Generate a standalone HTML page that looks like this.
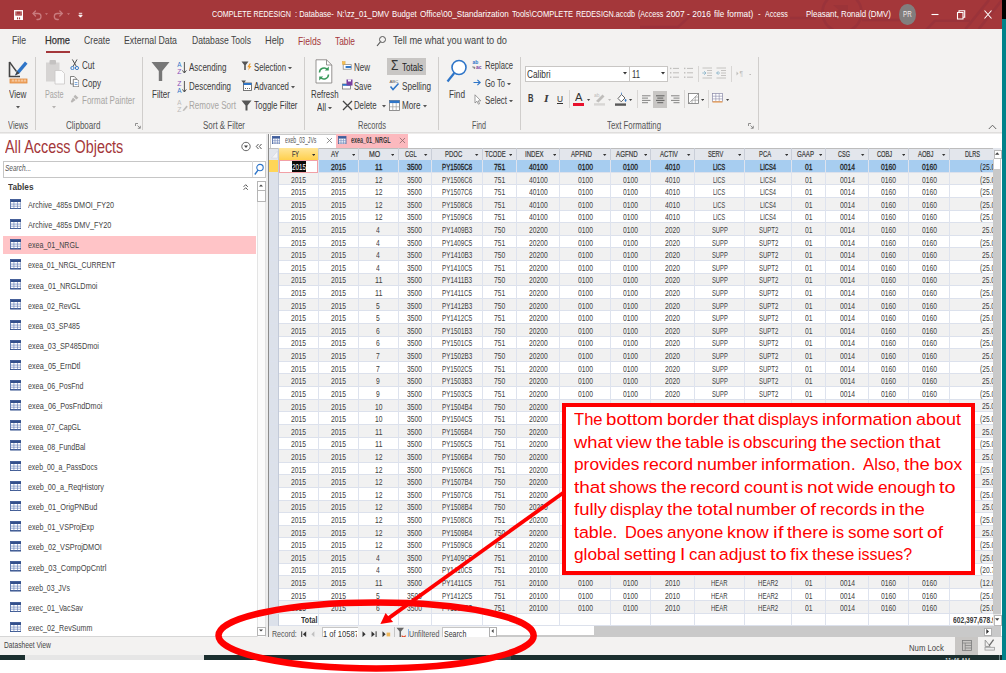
<!DOCTYPE html>
<html><head><meta charset="utf-8"><title>Access</title>
<style>
html,body{margin:0;padding:0;background:#fff;}
body{width:1006px;height:673px;position:relative;overflow:hidden;font-family:"Liberation Sans",sans-serif;}
.t{position:absolute;white-space:pre;line-height:1;}
.r{position:absolute;}
</style></head><body>
<div class="r" style="left:1001.50px;top:0.00px;width:4.50px;height:19.00px;background:#000;"></div>
<div class="r" style="left:1001.50px;top:19.00px;width:4.50px;height:641.00px;background:#00828A;"></div>
<div class="r" style="left:0.00px;top:0.00px;width:1001.50px;height:28.80px;background:#A4373A;"></div>
<svg class="r" style="left:640.00px;top:0.00px" width="361.5" height="28.8" viewBox="0 0 361.5 28.8">
<g fill="none" stroke="#93303A" stroke-width="2.6" opacity="0.55">
<circle cx="202" cy="12.5" r="19.5"/>
<path d="M0 27 H38 L50 16 H76"/>
<path d="M150 18 H176"/>
<path d="M222 20 H262"/>
<path d="M286 30 L295 20.7 H330"/>
<path d="M325.5 29 L349 0"/>
<path d="M338.8 29 L362 0"/>
</g>
<path d="M193 5 L208 5 L208 18 L204 14 L196 20 L192 15 L199 10 Z" fill="#93303A" opacity="0.45"/>
</svg>
<div class="r" style="left:0.00px;top:28.80px;width:1001.50px;height:103.30px;background:#F3F2F1;"></div>
<div class="r" style="left:0.00px;top:132.10px;width:1001.50px;height:1.60px;background:linear-gradient(#D9D7D5,#F4F3F2);"></div>
<div class="r" style="left:0.00px;top:133.60px;width:1001.50px;height:503.00px;background:#fff;"></div>
<div class="r" style="left:0.00px;top:636.60px;width:1001.50px;height:18.60px;background:#F3F2F1;"></div>
<div class="r" style="left:0.00px;top:636.30px;width:1001.50px;height:0.80px;background:#D6D6D6;"></div>
<div class="r" style="left:0.00px;top:655.00px;width:1001.80px;height:5.00px;background:#1B2F2F;"></div>
<div class="r" style="left:25.00px;top:655.00px;width:179.00px;height:5.00px;background:#E6E6E6;"></div>
<div class="r" style="left:486.00px;top:655.00px;width:25.00px;height:5.00px;background:#3A4A4A;"></div>
<div class="r" style="left:1001.00px;top:655.00px;width:0.80px;height:5.00px;background:#1B2F2F;"></div>
<div class="r" style="left:999.20px;top:655.00px;width:0.80px;height:5.00px;background:#6f8585;"></div>
<div class="r" style="left:944px;top:658.2px;width:28px;height:1.8px;overflow:hidden;">
<span class="t" style="left:1.00px;top:-1.20px;font-size:7.5px;color:#fff;transform:scaleX(0.8030);transform-origin:left center;">11:46 AM</span>
</div>
<svg class="r" style="left:14.10px;top:9.80px" width="9.2" height="10.6" viewBox="0 0 9.2 10.6"><rect x="0.7" y="0.7" width="7.8" height="9.2" fill="none" stroke="#fff" stroke-width="1.3"/><rect x="0.7" y="5.6" width="7.8" height="4.3" fill="#fff"/><path d="M2.3 1 V4.3 H6.9 V1" fill="none" stroke="#fff" stroke-width="0.5" opacity="0.55"/><rect x="3" y="7.4" width="1.1" height="1.9" fill="#A4373A"/><rect x="5" y="7.4" width="1.1" height="1.9" fill="#A4373A"/></svg>
<svg class="r" style="left:32.00px;top:9.00px" width="54" height="12" viewBox="0 0 54 12"><g fill="none" stroke="#C97B7E" stroke-width="1.3" stroke-linecap="round">
<path d="M1.5 4.5 H6 a3 3 0 0 1 0 6 H5"/><path d="M3.5 2 L1 4.5 L3.5 7"/>
<path d="M29.8 4.5 H25.3 a3 3 0 0 0 0 6 H26.3"/><path d="M27.8 2 L30.3 4.5 L27.8 7"/></g>
<path d="M13 4.2 h3 l-1.5 1.8z M35 4.2 h3 l-1.5 1.8z" fill="#C97B7E"/>
<path d="M46.8 4.3 h3.4 M46.8 6.2 h3.4 l-1.7 2z" stroke="#fff" stroke-width="0.9" fill="#fff"/></svg>
<span class="t" style="left:212.00px;top:8.75px;font-size:9.8px;color:#fff;transform:scaleX(0.7327);transform-origin:left center;">COMPLETE REDESIGN</span>
<span class="t" style="left:294.80px;top:8.75px;font-size:9.8px;color:#fff;transform:scaleX(0.7659);transform-origin:left center;">: Database-</span>
<span class="t" style="left:337.20px;top:8.75px;font-size:9.8px;color:#fff;transform:scaleX(0.7921);transform-origin:left center;">N:\zz_01_DMV</span>
<span class="t" style="left:392.40px;top:8.75px;font-size:9.8px;color:#fff;transform:scaleX(0.7952);transform-origin:left center;">Budget</span>
<span class="t" style="left:419.80px;top:8.75px;font-size:9.8px;color:#fff;transform:scaleX(0.8278);transform-origin:left center;">Office\00_Standarization</span>
<span class="t" style="left:511.60px;top:8.75px;font-size:9.8px;color:#fff;transform:scaleX(0.7672);transform-origin:left center;">Tools\COMPLETE</span>
<span class="t" style="left:575.70px;top:8.75px;font-size:9.8px;color:#fff;transform:scaleX(0.7382);transform-origin:left center;">REDESIGN.accdb</span>
<span class="t" style="left:637.90px;top:8.75px;font-size:9.8px;color:#fff;transform:scaleX(0.7259);transform-origin:left center;">(Access</span>
<span class="t" style="left:666.30px;top:8.75px;font-size:9.8px;color:#fff;transform:scaleX(0.8602);transform-origin:left center;">2007 - 2016</span>
<span class="t" style="left:714.00px;top:8.75px;font-size:9.8px;color:#fff;transform:scaleX(0.8142);transform-origin:left center;">file</span>
<span class="t" style="left:726.70px;top:8.75px;font-size:9.8px;color:#fff;transform:scaleX(0.8441);transform-origin:left center;">format)</span>
<span class="t" style="left:758.00px;top:8.75px;font-size:9.8px;color:#fff;transform:scaleX(0.7966);transform-origin:left center;">-</span>
<span class="t" style="left:765.20px;top:8.75px;font-size:9.8px;color:#fff;transform:scaleX(0.7218);transform-origin:left center;">Access</span>
<span class="t" style="left:806.00px;top:8.75px;font-size:9.8px;color:#fff;transform:scaleX(0.8044);transform-origin:left center;">Pleasant, Ronald (DMV)</span>
<div class="r" style="left:899.2px;top:4.2px;width:16.4px;height:20.4px;border-radius:50%;background:#827E7E;"></div>
<span class="t" style="left:903.40px;top:9.47px;font-size:9.6px;color:#f4ecec;transform:scaleX(0.6448);transform-origin:left center;">PR</span>
<svg class="r" style="left:928.00px;top:6.00px" width="70" height="16" viewBox="0 0 70 16"><g stroke="#fff" stroke-width="1.1" fill="none">
<path d="M3.5 8.5 H10.5"/>
<path d="M29.5 6.5 h5.5 v6.5 h-5.5z"/><path d="M31 6.5 v-1.8 h5.7 v6.6 h-1.7"/>
<path d="M56.5 4.5 l7 8 M63.5 4.5 l-7 8"/></g></svg>
<span class="t" style="left:12.00px;top:36.46px;font-size:10.3px;color:#444;transform:scaleX(0.8435);transform-origin:left center;">File</span>
<span class="t" style="left:45.00px;top:36.46px;font-size:10.3px;color:#333;transform:scaleX(0.9099);transform-origin:left center;-webkit-text-stroke:0.25px #333;">Home</span>
<div class="r" style="left:45.50px;top:50.80px;width:24.50px;height:1.80px;background:#A4373A;"></div>
<span class="t" style="left:84.00px;top:36.46px;font-size:10.3px;color:#444;transform:scaleX(0.8410);transform-origin:left center;">Create</span>
<span class="t" style="left:124.00px;top:36.46px;font-size:10.3px;color:#444;transform:scaleX(0.8493);transform-origin:left center;">External Data</span>
<span class="t" style="left:192.00px;top:36.46px;font-size:10.3px;color:#444;transform:scaleX(0.8332);transform-origin:left center;">Database Tools</span>
<span class="t" style="left:265.00px;top:36.46px;font-size:10.3px;color:#444;transform:scaleX(0.8969);transform-origin:left center;">Help</span>
<span class="t" style="left:298.00px;top:37.36px;font-size:10.3px;color:#A4373A;transform:scaleX(0.8371);transform-origin:left center;">Fields</span>
<span class="t" style="left:335.00px;top:37.36px;font-size:10.3px;color:#A4373A;transform:scaleX(0.8122);transform-origin:left center;">Table</span>
<svg class="r" style="left:376.00px;top:35.00px" width="11" height="12" viewBox="0 0 11 12"><circle cx="6.5" cy="4.5" r="3" fill="none" stroke="#555" stroke-width="1"/><path d="M4.4 6.8 L1 11" stroke="#555" stroke-width="1.1"/></svg>
<span class="t" style="left:393.00px;top:36.46px;font-size:10.3px;color:#444;transform:scaleX(0.8969);transform-origin:left center;">Tell me what you want to do</span>
<div class="r" style="left:35.10px;top:56.50px;width:0.90px;height:73.00px;background:#D0CECC;"></div>
<div class="r" style="left:142.30px;top:56.50px;width:0.90px;height:73.00px;background:#D0CECC;"></div>
<div class="r" style="left:304.30px;top:56.50px;width:0.90px;height:73.00px;background:#D0CECC;"></div>
<div class="r" style="left:437.80px;top:56.50px;width:0.90px;height:73.00px;background:#D0CECC;"></div>
<div class="r" style="left:520.30px;top:56.50px;width:0.90px;height:73.00px;background:#D0CECC;"></div>
<div class="r" style="left:758.30px;top:56.50px;width:0.90px;height:73.00px;background:#D0CECC;"></div>
<span class="t" style="left:8.00px;top:121.34px;font-size:10px;color:#555;transform:scaleX(0.7549);transform-origin:left center;">Views</span>
<span class="t" style="left:66.00px;top:121.34px;font-size:10px;color:#555;transform:scaleX(0.8060);transform-origin:left center;">Clipboard</span>
<span class="t" style="left:203.00px;top:121.34px;font-size:10px;color:#555;transform:scaleX(0.7956);transform-origin:left center;">Sort &amp; Filter</span>
<span class="t" style="left:358.00px;top:121.34px;font-size:10px;color:#555;transform:scaleX(0.7519);transform-origin:left center;">Records</span>
<span class="t" style="left:472.00px;top:121.34px;font-size:10px;color:#555;transform:scaleX(0.7196);transform-origin:left center;">Find</span>
<span class="t" style="left:607.00px;top:121.34px;font-size:10px;color:#555;transform:scaleX(0.7836);transform-origin:left center;">Text Formatting</span>
<svg class="r" style="left:134.50px;top:123.00px" width="6" height="6" viewBox="0 0 6 6"><path d="M0.5 3 V0.5 H3 M2.5 2.5 L5 5 M5.3 2.8 V5.3 H2.8" fill="none" stroke="#777" stroke-width="0.8"/></svg>
<svg class="r" style="left:747.50px;top:123.00px" width="6" height="6" viewBox="0 0 6 6"><path d="M0.5 3 V0.5 H3 M2.5 2.5 L5 5 M5.3 2.8 V5.3 H2.8" fill="none" stroke="#777" stroke-width="0.8"/></svg>
<svg class="r" style="left:988.00px;top:124.00px" width="9" height="6" viewBox="0 0 9 6"><path d="M0.8 5 L4.5 1.2 L8.2 5" fill="none" stroke="#555" stroke-width="0.9"/></svg>
<svg class="r" style="left:7.00px;top:59.00px" width="22" height="25" viewBox="0 0 22 25"><path d="M2.5 3 V17.5 H13" fill="none" stroke="#444" stroke-width="1.6"/>
<path d="M2.5 3 L9.5 12.5" stroke="#444" stroke-width="1.3"/>
<path d="M8 16.5 L10 12 L18 2.5 L20.5 4.8 L12.5 14.2 Z" fill="#2E75C8"/>
<path d="M8 16.5 L10 12 L12.5 14.2Z" fill="#444"/>
<rect x="3" y="20" width="17" height="4" fill="#F0A868" stroke="#E08A3C" stroke-width="0.8"/>
<path d="M6 20.5v2M9 20.5v2M12 20.5v2M15 20.5v2M18 20.5v2" stroke="#fff" stroke-width="0.7"/></svg>
<span class="t" style="left:9.00px;top:89.63px;font-size:10px;color:#3b3b3b;transform:scaleX(0.8141);transform-origin:left center;">View</span>
<svg class="r" style="left:15.50px;top:106.30px" width="4.0" height="2.4" viewBox="0 0 4 2.4"><path d="M0 0 H4 L2 2.4Z" fill="#555"/></svg>
<svg class="r" style="left:45.00px;top:59.00px" width="21" height="26" viewBox="0 0 21 26"><rect x="1" y="3.5" width="13.5" height="19" fill="#D6D4D3" />
<rect x="4.5" y="1" width="6.5" height="4.5" rx="1" fill="#C4C2C1"/>
<path d="M10 11.5 H16.5 L19.5 14.5 V25 H10Z" fill="#FBFBFB" stroke="#C9C7C6" stroke-width="0.8"/></svg>
<span class="t" style="left:44.50px;top:89.63px;font-size:10px;color:#A8A6A4;transform:scaleX(0.7235);transform-origin:left center;">Paste</span>
<svg class="r" style="left:52.00px;top:106.30px" width="4.0" height="2.4" viewBox="0 0 4 2.4"><path d="M0 0 H4 L2 2.4Z" fill="#B5B3B1"/></svg>
<svg class="r" style="left:69.80px;top:58.80px" width="9.4" height="11.3" viewBox="0 0 10 12"><path d="M2.5 0.5 L6.8 8 M7.5 0.5 L3.2 8" stroke="#444" stroke-width="1" fill="none"/>
<circle cx="2.6" cy="9.6" r="1.7" fill="none" stroke="#2E75C8" stroke-width="1"/><circle cx="7.4" cy="9.6" r="1.7" fill="none" stroke="#2E75C8" stroke-width="1"/></svg>
<span class="t" style="left:82.00px;top:60.93px;font-size:10px;color:#3b3b3b;transform:scaleX(0.8033);transform-origin:left center;">Cut</span>
<svg class="r" style="left:69.80px;top:75.60px" width="9.4" height="11.3" viewBox="0 0 10 12"><path d="M0.5 0.5 H4.5 L6.5 2.5 V8.5 H0.5Z" fill="#fff" stroke="#555" stroke-width="0.8"/>
<path d="M3.5 3.5 H7.5 L9.5 5.5 V11.5 H3.5Z" fill="#fff" stroke="#555" stroke-width="0.8"/><path d="M5 7h3M5 9h3" stroke="#2E75C8" stroke-width="0.7"/></svg>
<span class="t" style="left:82.00px;top:78.63px;font-size:10px;color:#3b3b3b;transform:scaleX(0.8139);transform-origin:left center;">Copy</span>
<svg class="r" style="left:70.30px;top:94.00px" width="9.4" height="9.4" viewBox="0 0 10 10"><path d="M5.5 0.8 L9 4 L6.8 5.8 L3.8 2.8Z M3.2 3.6 L6 6.4 L2 9.2 L0.8 8Z" fill="#B9B7B5"/></svg>
<span class="t" style="left:82.00px;top:96.23px;font-size:10px;color:#A8A6A4;transform:scaleX(0.8014);transform-origin:left center;">Format Painter</span>
<svg class="r" style="left:151.00px;top:61.00px" width="19" height="21" viewBox="0 0 19 21"><path d="M0.5 1 H18.5 L11.2 10 V20 H7.8 V10Z" fill="#777"/></svg>
<span class="t" style="left:151.50px;top:89.63px;font-size:10px;color:#3b3b3b;transform:scaleX(0.8100);transform-origin:left center;">Filter</span>
<svg class="r" style="left:176.50px;top:60.50px" width="11" height="13" viewBox="0 0 11 13"><text x="0.2" y="5.8" font-size="7" fill="#2E75C8" font-family="Liberation Sans,sans-serif" textLength="4.2" lengthAdjust="spacingAndGlyphs">A</text>
<text x="0.2" y="12.6" font-size="7" fill="#8C4FB8" font-family="Liberation Sans,sans-serif" textLength="4.2" lengthAdjust="spacingAndGlyphs">Z</text>
<path d="M7.4 1 V11.8 M5.4 9.4 L7.4 12 L9.4 9.4" fill="none" stroke="#444" stroke-width="0.9"/></svg>
<span class="t" style="left:189.00px;top:62.93px;font-size:10px;color:#3b3b3b;transform:scaleX(0.8030);transform-origin:left center;">Ascending</span>
<svg class="r" style="left:176.50px;top:80.00px" width="11" height="13" viewBox="0 0 11 13"><text x="0.2" y="5.8" font-size="7" fill="#8C4FB8" font-family="Liberation Sans,sans-serif" textLength="4.2" lengthAdjust="spacingAndGlyphs">Z</text>
<text x="0.2" y="12.6" font-size="7" fill="#2E75C8" font-family="Liberation Sans,sans-serif" textLength="4.2" lengthAdjust="spacingAndGlyphs">A</text>
<path d="M7.4 1 V11.8 M5.4 9.4 L7.4 12 L9.4 9.4" fill="none" stroke="#444" stroke-width="0.9"/></svg>
<span class="t" style="left:189.00px;top:82.43px;font-size:10px;color:#3b3b3b;transform:scaleX(0.7952);transform-origin:left center;">Descending</span>
<svg class="r" style="left:176.50px;top:99.00px" width="11" height="13" viewBox="0 0 11 13"><text x="0.2" y="5.8" font-size="7" fill="#BDBBB9" font-family="Liberation Sans,sans-serif" textLength="4.2" lengthAdjust="spacingAndGlyphs">A</text>
<text x="0.2" y="12.6" font-size="7" fill="#BDBBB9" font-family="Liberation Sans,sans-serif" textLength="4.2" lengthAdjust="spacingAndGlyphs">Z</text>
<path d="M5.5 11.5 L9.5 6.5 L10.8 7.8 L7 12Z" fill="#BDBBB9"/></svg>
<span class="t" style="left:189.00px;top:101.43px;font-size:10px;color:#A8A6A4;transform:scaleX(0.8054);transform-origin:left center;">Remove Sort</span>
<svg class="r" style="left:240.50px;top:61.00px" width="11" height="10" viewBox="0 0 11 10"><path d="M0.5 0.5 H7.5 L4.8 4 V9 H3.2 V4Z" fill="#555"/><path d="M8.5 2.5 L6.3 6.2 H8 L7 9.5 L10.5 5 H8.6 L9.8 2.5Z" fill="#F0A030"/></svg>
<span class="t" style="left:254.00px;top:62.93px;font-size:10px;color:#3b3b3b;transform:scaleX(0.7778);transform-origin:left center;">Selection</span>
<svg class="r" style="left:287.60px;top:66.80px" width="4.0" height="2.4" viewBox="0 0 4 2.4"><path d="M0 0 H4 L2 2.4Z" fill="#555"/></svg>
<svg class="r" style="left:240.50px;top:80.00px" width="11" height="11" viewBox="0 0 11 11"><path d="M0.3 0.5 H5 L3.2 2.8 V5 H2.1 V2.8Z" fill="#555"/><rect x="2.5" y="3" width="8" height="7.5" fill="#fff" stroke="#555" stroke-width="0.8"/><rect x="2.5" y="3" width="8" height="2" fill="#2E75C8"/><path d="M4 8.5h1M6 8.5h1M8 8.5h1" stroke="#555" stroke-width="0.9"/></svg>
<span class="t" style="left:254.00px;top:82.43px;font-size:10px;color:#3b3b3b;transform:scaleX(0.7869);transform-origin:left center;">Advanced</span>
<svg class="r" style="left:290.80px;top:86.30px" width="4.0" height="2.4" viewBox="0 0 4 2.4"><path d="M0 0 H4 L2 2.4Z" fill="#555"/></svg>
<svg class="r" style="left:240.50px;top:100.00px" width="11" height="11" viewBox="0 0 11 11"><path d="M0.5 0.5 H10.5 L6.5 5.5 V10.5 H4.5 V5.5Z" fill="#555"/></svg>
<span class="t" style="left:254.00px;top:101.43px;font-size:10px;color:#3b3b3b;transform:scaleX(0.7986);transform-origin:left center;">Toggle Filter</span>
<svg class="r" style="left:315.00px;top:59.00px" width="18" height="25" viewBox="0 0 18 25"><path d="M1 0.8 H11.5 L16.8 6 V24 H1Z" fill="#fff" stroke="#8A8886" stroke-width="0.9"/><path d="M11.5 0.8 V6 H16.8" fill="none" stroke="#8A8886" stroke-width="0.9"/>
<path d="M4.5 13.5 a4.6 4.6 0 0 1 8 -3 M13.5 15.5 a4.6 4.6 0 0 1 -8 3" fill="none" stroke="#3A9A5C" stroke-width="1.5"/><path d="M13.8 7.5 V11.5 H9.8Z M4.2 21.5 V17.5 H8.2Z" fill="#3A9A5C"/></svg>
<span class="t" style="left:310.50px;top:89.63px;font-size:10px;color:#3b3b3b;transform:scaleX(0.7854);transform-origin:left center;">Refresh</span>
<span class="t" style="left:317.00px;top:102.93px;font-size:10px;color:#3b3b3b;transform:scaleX(0.8098);transform-origin:left center;">All</span>
<svg class="r" style="left:328.00px;top:106.80px" width="4.0" height="2.4" viewBox="0 0 4 2.4"><path d="M0 0 H4 L2 2.4Z" fill="#555"/></svg>
<svg class="r" style="left:341.50px;top:60.50px" width="10" height="9.5" viewBox="0 0 10 9.5"><rect x="1.2" y="3.6" width="8" height="4.6" fill="#fff" stroke="#8a8a8a" stroke-width="0.8"/><rect x="3.6" y="5" width="5.6" height="2" fill="#2E75C8"/><rect x="0.3" y="0.5" width="2.8" height="2.8" fill="#F6C050" stroke="#E0A030" stroke-width="0.4"/></svg>
<span class="t" style="left:354.00px;top:62.93px;font-size:10px;color:#3b3b3b;transform:scaleX(0.7998);transform-origin:left center;">New</span>
<svg class="r" style="left:341.50px;top:78.60px" width="11" height="11" viewBox="0 0 11 11"><rect x="0.5" y="5" width="8" height="5" fill="#fff" stroke="#777" stroke-width="0.8"/><rect x="0.5" y="5" width="8" height="1.8" fill="#2E75C8"/><rect x="4.5" y="0.5" width="6" height="6" fill="#7A3FA0"/><rect x="6" y="0.5" width="3" height="2" fill="#fff"/></svg>
<span class="t" style="left:354.00px;top:82.43px;font-size:10px;color:#3b3b3b;transform:scaleX(0.7678);transform-origin:left center;">Save</span>
<svg class="r" style="left:341.50px;top:100.00px" width="11" height="11" viewBox="0 0 11 11"><path d="M1 1 L10 10 M10 1 L1 10" stroke="#444" stroke-width="1.3"/></svg>
<span class="t" style="left:354.00px;top:101.43px;font-size:10px;color:#3b3b3b;transform:scaleX(0.7784);transform-origin:left center;">Delete</span>
<svg class="r" style="left:381.50px;top:105.30px" width="4.0" height="2.4" viewBox="0 0 4 2.4"><path d="M0 0 H4 L2 2.4Z" fill="#555"/></svg>
<div class="r" style="left:387.30px;top:58.30px;width:38.70px;height:16.70px;background:#C8C6C4;"></div>
<span class="t" style="left:390.80px;top:58.49px;font-size:14px;color:#333;transform:scaleX(0.8550);transform-origin:left center;">Σ</span>
<span class="t" style="left:401.50px;top:62.93px;font-size:10px;color:#222;transform:scaleX(0.8039);transform-origin:left center;">Totals</span>
<svg class="r" style="left:389.00px;top:79.00px" width="11" height="12" viewBox="0 0 11 12"><text x="0.5" y="4.2" font-size="4.3" fill="#555" font-family="Liberation Sans,sans-serif">ABC</text><path d="M1.5 7.5 L4 10.5 L9.5 4.5" fill="none" stroke="#2E75C8" stroke-width="1.5"/></svg>
<span class="t" style="left:402.00px;top:82.43px;font-size:10px;color:#3b3b3b;transform:scaleX(0.8150);transform-origin:left center;">Spelling</span>
<svg class="r" style="left:388.50px;top:100.00px" width="11" height="11" viewBox="0 0 11 11"><rect x="0.5" y="0.5" width="10" height="10" fill="#fff" stroke="#777" stroke-width="0.8"/><rect x="0.5" y="0.5" width="10" height="2.6" fill="#2E75C8"/><path d="M0.5 6.8h10M3.8 3v7.5M7.2 3v7.5" stroke="#999" stroke-width="0.7"/></svg>
<span class="t" style="left:402.00px;top:101.43px;font-size:10px;color:#3b3b3b;transform:scaleX(0.8120);transform-origin:left center;">More</span>
<svg class="r" style="left:423.00px;top:105.30px" width="4.0" height="2.4" viewBox="0 0 4 2.4"><path d="M0 0 H4 L2 2.4Z" fill="#555"/></svg>
<svg class="r" style="left:446.00px;top:59.00px" width="22" height="24" viewBox="0 0 22 24"><circle cx="13" cy="8.5" r="7" fill="#fff" stroke="#2E75C8" stroke-width="1.6"/><path d="M8.3 14 L1.5 22.5" stroke="#2E75C8" stroke-width="2.2"/></svg>
<span class="t" style="left:448.50px;top:89.63px;font-size:10px;color:#3b3b3b;transform:scaleX(0.8225);transform-origin:left center;">Find</span>
<svg class="r" style="left:471.50px;top:59.00px" width="11" height="11" viewBox="0 0 11 11"><text x="0.5" y="4.5" font-size="5" fill="#2E75C8" font-weight="bold" font-family="Liberation Sans,sans-serif">ab</text><text x="4" y="10.3" font-size="5" fill="#7A3FA0" font-weight="bold" font-family="Liberation Sans,sans-serif">ac</text><path d="M1 7 v1.8 h2 M2 7.8l1.2 1-1.2 1" fill="none" stroke="#555" stroke-width="0.6"/></svg>
<span class="t" style="left:485.00px;top:60.93px;font-size:10px;color:#3b3b3b;transform:scaleX(0.7631);transform-origin:left center;">Replace</span>
<svg class="r" style="left:473.00px;top:78.80px" width="8.4" height="7" viewBox="0 0 8.4 7"><path d="M0.5 3.5 H7 M4.4 0.8 L7.2 3.5 L4.4 6.2" fill="none" stroke="#2E75C8" stroke-width="1.1"/></svg>
<span class="t" style="left:485.00px;top:78.63px;font-size:10px;color:#3b3b3b;transform:scaleX(0.7547);transform-origin:left center;">Go To</span>
<svg class="r" style="left:507.00px;top:82.50px" width="4.0" height="2.4" viewBox="0 0 4 2.4"><path d="M0 0 H4 L2 2.4Z" fill="#555"/></svg>
<svg class="r" style="left:473.50px;top:94.00px" width="8" height="11" viewBox="0 0 8 11"><path d="M1 0.8 V9 L3 7.2 L4.4 10.2 L5.6 9.7 L4.3 6.8 H6.8Z" fill="#fff" stroke="#777" stroke-width="0.7"/></svg>
<span class="t" style="left:485.00px;top:96.23px;font-size:10px;color:#3b3b3b;transform:scaleX(0.7915);transform-origin:left center;">Select</span>
<svg class="r" style="left:509.00px;top:100.00px" width="4.0" height="2.4" viewBox="0 0 4 2.4"><path d="M0 0 H4 L2 2.4Z" fill="#555"/></svg>
<div class="r" style="left:525px;top:65.5px;width:141px;height:14.2px;background:#fff;border:0.8px solid #C8C6C4;"></div>
<div class="r" style="left:629.00px;top:66.00px;width:0.80px;height:15.00px;background:#C8C6C4;"></div>
<span class="t" style="left:527.00px;top:69.83px;font-size:10px;color:#333;transform:scaleX(0.8292);transform-origin:left center;">Calibri</span>
<svg class="r" style="left:622.90px;top:72.40px" width="4.0" height="2.4" viewBox="0 0 4 2.4"><path d="M0 0 H4 L2 2.4Z" fill="#333"/></svg>
<span class="t" style="left:631.50px;top:69.83px;font-size:10px;color:#333;transform:scaleX(0.7706);transform-origin:left center;">11</span>
<svg class="r" style="left:661.30px;top:72.40px" width="4.0" height="2.4" viewBox="0 0 4 2.4"><path d="M0 0 H4 L2 2.4Z" fill="#333"/></svg>
<svg class="r" style="left:670.00px;top:67.00px" width="9.4" height="12" viewBox="0 0 9.4 12"><rect x="0" y="0.7" width="1.4" height="1.4" fill="#BFBDBB"/><path d="M3 1.4 H9.4" stroke="#BFBDBB" stroke-width="1"/><rect x="0" y="5.1000000000000005" width="1.4" height="1.4" fill="#BFBDBB"/><path d="M3 5.800000000000001 H9.4" stroke="#BFBDBB" stroke-width="1"/><rect x="0" y="9.500000000000002" width="1.4" height="1.4" fill="#BFBDBB"/><path d="M3 10.200000000000001 H9.4" stroke="#BFBDBB" stroke-width="1"/></svg>
<svg class="r" style="left:684.00px;top:67.00px" width="9.4" height="12" viewBox="0 0 9.4 12"><rect x="0" y="0.7" width="1.4" height="1.4" fill="#BFBDBB"/><path d="M3 1.4 H9.4" stroke="#BFBDBB" stroke-width="1"/><rect x="0" y="5.1000000000000005" width="1.4" height="1.4" fill="#BFBDBB"/><path d="M3 5.800000000000001 H9.4" stroke="#BFBDBB" stroke-width="1"/><rect x="0" y="9.500000000000002" width="1.4" height="1.4" fill="#BFBDBB"/><path d="M3 10.200000000000001 H9.4" stroke="#BFBDBB" stroke-width="1"/></svg>
<div class="r" style="left:698.00px;top:66.00px;width:0.90px;height:16.00px;background:#D8D6D4;"></div>
<svg class="r" style="left:702.00px;top:67.00px" width="10.5" height="12" viewBox="0 0 10.5 12"><path d="M0.5 1h9.5M0.5 11h9.5M5 3.5h5M5 6h5M5 8.5h5" stroke="#BFBDBB" stroke-width="0.9"/><path d="M0.3 6h3.4 M2.2 4.2 L4 6 L2.2 7.8" stroke="#8FB7CC" stroke-width="0.9" fill="none"/></svg>
<svg class="r" style="left:716.00px;top:67.00px" width="10.5" height="12" viewBox="0 0 10.5 12"><path d="M0.5 1h9.5M0.5 11h9.5M5 3.5h5M5 6h5M5 8.5h5" stroke="#BFBDBB" stroke-width="0.9"/><path d="M0.6 6h3.4 M2.4 4.2 L0.6 6 L2.4 7.8" stroke="#8FB7CC" stroke-width="0.9" fill="none"/></svg>
<div class="r" style="left:731.00px;top:66.00px;width:0.90px;height:16.00px;background:#D8D6D4;"></div>
<svg class="r" style="left:735.50px;top:70.00px" width="10" height="7" viewBox="0 0 10 7"><path d="M0.5 1.5 L2.5 3.5 L0.5 5.5Z" fill="#BFBDBB"/><text x="3.6" y="6" font-size="6.5" fill="#BFBDBB" font-family="Liberation Sans,sans-serif">¶</text></svg>
<svg class="r" style="left:748.60px;top:73.60px" width="2.8" height="1.68" viewBox="0 0 4 2.4"><path d="M0 0 H4 L2 2.4Z" fill="#BFBDBB"/></svg>
<span class="t" style="left:528.30px;top:93.86px;font-size:10.3px;color:#3b3b3b;transform:scaleX(0.7394);transform-origin:left center;font-weight:bold;">B</span>
<span class="t" style="left:544.30px;top:94.46px;font-size:10.3px;color:#3b3b3b;transform:scaleX(1.1533);transform-origin:left center;font-style:italic;font-family:'Liberation Serif',serif;font-weight:bold;">I</span>
<span class="t" style="left:556.50px;top:94.13px;font-size:9.5px;color:#333;transform:scaleX(0.8745);transform-origin:left center;text-decoration:underline;">U</span>
<div class="r" style="left:569.00px;top:90.00px;width:0.90px;height:18.00px;background:#D8D6D4;"></div>
<span class="t" style="left:574.50px;top:91.54px;font-size:10.5px;color:#333;transform:scaleX(1.0708);transform-origin:left center;">A</span>
<div class="r" style="left:573.00px;top:103.00px;width:11.00px;height:2.60px;background:#E8112D;"></div>
<svg class="r" style="left:587.40px;top:98.70px" width="3.2" height="1.92" viewBox="0 0 4 2.4"><path d="M0 0 H4 L2 2.4Z" fill="#444"/></svg>
<svg class="r" style="left:593.50px;top:92.00px" width="12" height="14" viewBox="0 0 12 14"><text x="0" y="5" font-size="5" fill="#BFBDBB" font-family="Liberation Sans,sans-serif">ab</text><path d="M2 9 L8.5 2.5 L10.5 4.5 L4.5 10.5Z" fill="#BFBDBB"/><rect x="0" y="11.2" width="11" height="2.4" fill="#D8D6D4"/></svg>
<svg class="r" style="left:608.40px;top:98.70px" width="3.2" height="1.92" viewBox="0 0 4 2.4"><path d="M0 0 H4 L2 2.4Z" fill="#BFBDBB"/></svg>
<svg class="r" style="left:615.00px;top:91.50px" width="12" height="14" viewBox="0 0 12 14"><path d="M3 6.5 L6.5 2.5 L10 6 L6.2 9.8Z" fill="#fff" stroke="#555" stroke-width="0.9"/><path d="M6.5 2.5 V0.6 M10.6 7 q1.2 2 0 2.6 q-1.2 -0.6 0 -2.6" stroke="#2E75C8" fill="#2E75C8" stroke-width="0.7"/><rect x="0" y="11.4" width="11" height="2.4" fill="#595959"/></svg>
<svg class="r" style="left:629.40px;top:98.70px" width="3.2" height="1.92" viewBox="0 0 4 2.4"><path d="M0 0 H4 L2 2.4Z" fill="#444"/></svg>
<div class="r" style="left:637.00px;top:90.00px;width:0.90px;height:18.00px;background:#D8D6D4;"></div>
<svg class="r" style="left:642.00px;top:94.50px" width="9" height="9" viewBox="0 0 9 9"><path d="M0 0.8 h8.5" stroke="#777" stroke-width="0.9"/><path d="M0 3.0999999999999996 h6" stroke="#777" stroke-width="0.9"/><path d="M0 5.3999999999999995 h8.5" stroke="#777" stroke-width="0.9"/><path d="M0 7.699999999999999 h6" stroke="#777" stroke-width="0.9"/></svg>
<div class="r" style="left:653.00px;top:90.50px;width:14.00px;height:17.50px;background:#C8C6C4;"></div>
<svg class="r" style="left:655.80px;top:94.50px" width="9" height="9" viewBox="0 0 9 9"><path d="M0.0 0.8 h8.5" stroke="#555" stroke-width="0.9"/><path d="M1.25 3.0999999999999996 h6" stroke="#555" stroke-width="0.9"/><path d="M0.0 5.3999999999999995 h8.5" stroke="#555" stroke-width="0.9"/><path d="M1.25 7.699999999999999 h6" stroke="#555" stroke-width="0.9"/></svg>
<svg class="r" style="left:670.50px;top:94.50px" width="9" height="9" viewBox="0 0 9 9"><path d="M0.0 0.8 h8.5" stroke="#777" stroke-width="0.9"/><path d="M2.5 3.0999999999999996 h6" stroke="#777" stroke-width="0.9"/><path d="M0.0 5.3999999999999995 h8.5" stroke="#777" stroke-width="0.9"/><path d="M2.5 7.699999999999999 h6" stroke="#777" stroke-width="0.9"/></svg>
<div class="r" style="left:684.00px;top:90.00px;width:0.90px;height:18.00px;background:#D8D6D4;"></div>
<svg class="r" style="left:688.00px;top:93.00px" width="11" height="11" viewBox="0 0 11 11"><rect x="0.5" y="0.5" width="10" height="10" fill="#fff" stroke="#777" stroke-width="0.8"/><path d="M0.5 10.5 L10.5 0.5 M4 10.5V7 M7.2 10.5V3.8 M3.8 7.2H10.5 M7 4H10.5" stroke="#888" stroke-width="0.6" fill="none"/></svg>
<svg class="r" style="left:700.90px;top:98.70px" width="3.2" height="1.92" viewBox="0 0 4 2.4"><path d="M0 0 H4 L2 2.4Z" fill="#444"/></svg>
<div class="r" style="left:708.00px;top:90.00px;width:0.90px;height:18.00px;background:#D8D6D4;"></div>
<svg class="r" style="left:712.00px;top:93.00px" width="11" height="10" viewBox="0 0 11 10"><rect x="0.5" y="0.5" width="10" height="8" fill="#fff" stroke="#8a8aa8" stroke-width="0.7"/><path d="M0.5 3.2h10M0.5 5.9h10M3.8 0.5v8M7.2 0.5v8" stroke="#8a8aa8" stroke-width="0.6"/><rect x="0.5" y="8.2" width="10" height="1.4" fill="#E8A05C"/></svg>
<svg class="r" style="left:726.40px;top:98.70px" width="3.2" height="1.92" viewBox="0 0 4 2.4"><path d="M0 0 H4 L2 2.4Z" fill="#444"/></svg>
<span class="t" style="left:5.40px;top:138.24px;font-size:18px;color:#A4373A;transform:scaleX(0.7990);transform-origin:left center;">All Access Objects</span>
<svg class="r" style="left:241.00px;top:141.00px" width="24" height="11" viewBox="0 0 24 11"><circle cx="5" cy="5.5" r="4.2" fill="none" stroke="#444" stroke-width="0.8"/><path d="M3 4.4 h4 l-2 2.6z" fill="#444"/><path d="M17.5 3 L15.3 5.5 L17.5 8 M20.5 3 L18.3 5.5 L20.5 8" fill="none" stroke="#444" stroke-width="0.9"/></svg>
<div class="r" style="left:3px;top:160.8px;width:260.5px;height:15px;background:#fff;border:0.9px solid #C6C6C6;"></div>
<div class="r" style="left:252.40px;top:161.00px;width:0.80px;height:16.00px;background:#D8D8D8;"></div>
<span class="t" style="left:5.00px;top:164.02px;font-size:9px;color:#555;transform:scaleX(0.7219);transform-origin:left center;font-style:italic;">Search...</span>
<svg class="r" style="left:253.50px;top:162.50px" width="10" height="13" viewBox="0 0 10 13"><circle cx="6" cy="4.6" r="3.2" fill="#fff" stroke="#2E75C8" stroke-width="1.1"/><path d="M4 7.2 L0.8 11.5" stroke="#2E75C8" stroke-width="1.4"/></svg>
<span class="t" style="left:7.50px;top:182.43px;font-size:9.5px;color:#3b3b3b;transform:scaleX(0.8676);transform-origin:left center;font-weight:bold;">Tables</span>
<svg class="r" style="left:243.40px;top:183.80px" width="5.4" height="6.6" viewBox="0 0 5.4 6.6"><path d="M0.6 2.8 L2.7 0.7 L4.8 2.8 M0.6 5.8 L2.7 3.7 L4.8 5.8" fill="none" stroke="#444" stroke-width="0.9"/></svg>
<div class="r" style="left:257.00px;top:180.50px;width:8.20px;height:456.00px;background:#FBFBFB;"></div>
<div class="r" style="left:257.00px;top:180.50px;width:0.60px;height:456.00px;background:#E4E4E4;"></div>
<div class="r" style="left:264.80px;top:180.50px;width:0.60px;height:456.00px;background:#E4E4E4;"></div>
<div class="r" style="left:257.2px;top:180.9px;width:6.6px;height:7.8px;background:#fff;border:0.7px solid #B5B5B5;"></div>
<svg class="r" style="left:259.00px;top:183.50px" width="4" height="3" viewBox="0 0 4 3"><path d="M0 2.6 L2 0.4 L4 2.6Z" fill="#444"/></svg>
<div class="r" style="left:257.2px;top:190.2px;width:6.6px;height:9.6px;background:#fff;border:0.7px solid #B5B5B5;"></div>
<div class="r" style="left:257.4px;top:626.6px;width:6.2px;height:7.2px;background:#fff;border:0.7px solid #B5B5B5;"></div>
<svg class="r" style="left:259.00px;top:629.20px" width="4" height="3" viewBox="0 0 4 3"><path d="M0 0.4 L2 2.6 L4 0.4Z" fill="#444"/></svg>
<div class="r" style="left:265.50px;top:133.60px;width:3.00px;height:503.00px;background:#EDEDED;"></div>
<div class="r" style="left:268.30px;top:133.60px;width:1.10px;height:503.00px;background:#8C8C8C;"></div>
<svg class="r" style="left:9.60px;top:198.70px" width="11.4" height="10.6" viewBox="0 0 11.4 10.6"><rect x="0.4" y="0.4" width="10.6" height="9.4" fill="#fff" stroke="#3E5C9A" stroke-width="0.8"/><rect x="0.4" y="0.4" width="10.6" height="2.6" fill="#34508C"/><rect x="0.2" y="9.2" width="11" height="1.2" fill="#34508C"/><path d="M0.4 5.1h10.6M0.4 7.2h10.6M3.9 3v6.4M7.5 3v6.4" stroke="#6F86BC" stroke-width="0.7"/></svg>
<span class="t" style="left:28.10px;top:200.03px;font-size:9.5px;color:#444;transform:scaleX(0.7620);transform-origin:left center;">Archive_485s DMOI_FY20</span>
<svg class="r" style="left:9.60px;top:218.84px" width="11.4" height="10.6" viewBox="0 0 11.4 10.6"><rect x="0.4" y="0.4" width="10.6" height="9.4" fill="#fff" stroke="#3E5C9A" stroke-width="0.8"/><rect x="0.4" y="0.4" width="10.6" height="2.6" fill="#34508C"/><rect x="0.2" y="9.2" width="11" height="1.2" fill="#34508C"/><path d="M0.4 5.1h10.6M0.4 7.2h10.6M3.9 3v6.4M7.5 3v6.4" stroke="#6F86BC" stroke-width="0.7"/></svg>
<span class="t" style="left:28.10px;top:220.17px;font-size:9.5px;color:#444;transform:scaleX(0.7630);transform-origin:left center;">Archive_485s DMV_FY20</span>
<div class="r" style="left:3.00px;top:235.50px;width:253.00px;height:18.00px;background:#FFC4C7;"></div>
<svg class="r" style="left:9.60px;top:238.98px" width="11.4" height="10.6" viewBox="0 0 11.4 10.6"><rect x="0.4" y="0.4" width="10.6" height="9.4" fill="#fff" stroke="#3E5C9A" stroke-width="0.8"/><rect x="0.4" y="0.4" width="10.6" height="2.6" fill="#34508C"/><rect x="0.2" y="9.2" width="11" height="1.2" fill="#34508C"/><path d="M0.4 5.1h10.6M0.4 7.2h10.6M3.9 3v6.4M7.5 3v6.4" stroke="#6F86BC" stroke-width="0.7"/></svg>
<span class="t" style="left:28.10px;top:240.31px;font-size:9.5px;color:#444;transform:scaleX(0.7471);transform-origin:left center;">exea_01_NRGL</span>
<svg class="r" style="left:9.60px;top:259.12px" width="11.4" height="10.6" viewBox="0 0 11.4 10.6"><rect x="0.4" y="0.4" width="10.6" height="9.4" fill="#fff" stroke="#3E5C9A" stroke-width="0.8"/><rect x="0.4" y="0.4" width="10.6" height="2.6" fill="#34508C"/><rect x="0.2" y="9.2" width="11" height="1.2" fill="#34508C"/><path d="M0.4 5.1h10.6M0.4 7.2h10.6M3.9 3v6.4M7.5 3v6.4" stroke="#6F86BC" stroke-width="0.7"/></svg>
<span class="t" style="left:28.10px;top:260.45px;font-size:9.5px;color:#444;transform:scaleX(0.7292);transform-origin:left center;">exea_01_NRGL_CURRENT</span>
<svg class="r" style="left:9.60px;top:279.26px" width="11.4" height="10.6" viewBox="0 0 11.4 10.6"><rect x="0.4" y="0.4" width="10.6" height="9.4" fill="#fff" stroke="#3E5C9A" stroke-width="0.8"/><rect x="0.4" y="0.4" width="10.6" height="2.6" fill="#34508C"/><rect x="0.2" y="9.2" width="11" height="1.2" fill="#34508C"/><path d="M0.4 5.1h10.6M0.4 7.2h10.6M3.9 3v6.4M7.5 3v6.4" stroke="#6F86BC" stroke-width="0.7"/></svg>
<span class="t" style="left:28.10px;top:280.59px;font-size:9.5px;color:#444;transform:scaleX(0.7686);transform-origin:left center;">exea_01_NRGLDmoi</span>
<svg class="r" style="left:9.60px;top:299.40px" width="11.4" height="10.6" viewBox="0 0 11.4 10.6"><rect x="0.4" y="0.4" width="10.6" height="9.4" fill="#fff" stroke="#3E5C9A" stroke-width="0.8"/><rect x="0.4" y="0.4" width="10.6" height="2.6" fill="#34508C"/><rect x="0.2" y="9.2" width="11" height="1.2" fill="#34508C"/><path d="M0.4 5.1h10.6M0.4 7.2h10.6M3.9 3v6.4M7.5 3v6.4" stroke="#6F86BC" stroke-width="0.7"/></svg>
<span class="t" style="left:28.10px;top:300.73px;font-size:9.5px;color:#444;transform:scaleX(0.7349);transform-origin:left center;">exea_02_RevGL</span>
<svg class="r" style="left:9.60px;top:319.54px" width="11.4" height="10.6" viewBox="0 0 11.4 10.6"><rect x="0.4" y="0.4" width="10.6" height="9.4" fill="#fff" stroke="#3E5C9A" stroke-width="0.8"/><rect x="0.4" y="0.4" width="10.6" height="2.6" fill="#34508C"/><rect x="0.2" y="9.2" width="11" height="1.2" fill="#34508C"/><path d="M0.4 5.1h10.6M0.4 7.2h10.6M3.9 3v6.4M7.5 3v6.4" stroke="#6F86BC" stroke-width="0.7"/></svg>
<span class="t" style="left:28.10px;top:320.87px;font-size:9.5px;color:#444;transform:scaleX(0.7387);transform-origin:left center;">exea_03_SP485</span>
<svg class="r" style="left:9.60px;top:339.68px" width="11.4" height="10.6" viewBox="0 0 11.4 10.6"><rect x="0.4" y="0.4" width="10.6" height="9.4" fill="#fff" stroke="#3E5C9A" stroke-width="0.8"/><rect x="0.4" y="0.4" width="10.6" height="2.6" fill="#34508C"/><rect x="0.2" y="9.2" width="11" height="1.2" fill="#34508C"/><path d="M0.4 5.1h10.6M0.4 7.2h10.6M3.9 3v6.4M7.5 3v6.4" stroke="#6F86BC" stroke-width="0.7"/></svg>
<span class="t" style="left:28.10px;top:341.01px;font-size:9.5px;color:#444;transform:scaleX(0.7671);transform-origin:left center;">exea_03_SP485Dmoi</span>
<svg class="r" style="left:9.60px;top:359.82px" width="11.4" height="10.6" viewBox="0 0 11.4 10.6"><rect x="0.4" y="0.4" width="10.6" height="9.4" fill="#fff" stroke="#3E5C9A" stroke-width="0.8"/><rect x="0.4" y="0.4" width="10.6" height="2.6" fill="#34508C"/><rect x="0.2" y="9.2" width="11" height="1.2" fill="#34508C"/><path d="M0.4 5.1h10.6M0.4 7.2h10.6M3.9 3v6.4M7.5 3v6.4" stroke="#6F86BC" stroke-width="0.7"/></svg>
<span class="t" style="left:28.10px;top:361.15px;font-size:9.5px;color:#444;transform:scaleX(0.7691);transform-origin:left center;">exea_05_ErnDtl</span>
<svg class="r" style="left:9.60px;top:379.96px" width="11.4" height="10.6" viewBox="0 0 11.4 10.6"><rect x="0.4" y="0.4" width="10.6" height="9.4" fill="#fff" stroke="#3E5C9A" stroke-width="0.8"/><rect x="0.4" y="0.4" width="10.6" height="2.6" fill="#34508C"/><rect x="0.2" y="9.2" width="11" height="1.2" fill="#34508C"/><path d="M0.4 5.1h10.6M0.4 7.2h10.6M3.9 3v6.4M7.5 3v6.4" stroke="#6F86BC" stroke-width="0.7"/></svg>
<span class="t" style="left:28.10px;top:381.29px;font-size:9.5px;color:#444;transform:scaleX(0.7439);transform-origin:left center;">exea_06_PosFnd</span>
<svg class="r" style="left:9.60px;top:400.10px" width="11.4" height="10.6" viewBox="0 0 11.4 10.6"><rect x="0.4" y="0.4" width="10.6" height="9.4" fill="#fff" stroke="#3E5C9A" stroke-width="0.8"/><rect x="0.4" y="0.4" width="10.6" height="2.6" fill="#34508C"/><rect x="0.2" y="9.2" width="11" height="1.2" fill="#34508C"/><path d="M0.4 5.1h10.6M0.4 7.2h10.6M3.9 3v6.4M7.5 3v6.4" stroke="#6F86BC" stroke-width="0.7"/></svg>
<span class="t" style="left:28.10px;top:401.43px;font-size:9.5px;color:#444;transform:scaleX(0.7698);transform-origin:left center;">exea_06_PosFndDmoi</span>
<svg class="r" style="left:9.60px;top:420.24px" width="11.4" height="10.6" viewBox="0 0 11.4 10.6"><rect x="0.4" y="0.4" width="10.6" height="9.4" fill="#fff" stroke="#3E5C9A" stroke-width="0.8"/><rect x="0.4" y="0.4" width="10.6" height="2.6" fill="#34508C"/><rect x="0.2" y="9.2" width="11" height="1.2" fill="#34508C"/><path d="M0.4 5.1h10.6M0.4 7.2h10.6M3.9 3v6.4M7.5 3v6.4" stroke="#6F86BC" stroke-width="0.7"/></svg>
<span class="t" style="left:28.10px;top:421.57px;font-size:9.5px;color:#444;transform:scaleX(0.7364);transform-origin:left center;">exea_07_CapGL</span>
<svg class="r" style="left:9.60px;top:440.38px" width="11.4" height="10.6" viewBox="0 0 11.4 10.6"><rect x="0.4" y="0.4" width="10.6" height="9.4" fill="#fff" stroke="#3E5C9A" stroke-width="0.8"/><rect x="0.4" y="0.4" width="10.6" height="2.6" fill="#34508C"/><rect x="0.2" y="9.2" width="11" height="1.2" fill="#34508C"/><path d="M0.4 5.1h10.6M0.4 7.2h10.6M3.9 3v6.4M7.5 3v6.4" stroke="#6F86BC" stroke-width="0.7"/></svg>
<span class="t" style="left:28.10px;top:441.71px;font-size:9.5px;color:#444;transform:scaleX(0.7443);transform-origin:left center;">exea_08_FundBal</span>
<svg class="r" style="left:9.60px;top:460.52px" width="11.4" height="10.6" viewBox="0 0 11.4 10.6"><rect x="0.4" y="0.4" width="10.6" height="9.4" fill="#fff" stroke="#3E5C9A" stroke-width="0.8"/><rect x="0.4" y="0.4" width="10.6" height="2.6" fill="#34508C"/><rect x="0.2" y="9.2" width="11" height="1.2" fill="#34508C"/><path d="M0.4 5.1h10.6M0.4 7.2h10.6M3.9 3v6.4M7.5 3v6.4" stroke="#6F86BC" stroke-width="0.7"/></svg>
<span class="t" style="left:28.10px;top:461.85px;font-size:9.5px;color:#444;transform:scaleX(0.7300);transform-origin:left center;">exeb_00_a_PassDocs</span>
<svg class="r" style="left:9.60px;top:480.66px" width="11.4" height="10.6" viewBox="0 0 11.4 10.6"><rect x="0.4" y="0.4" width="10.6" height="9.4" fill="#fff" stroke="#3E5C9A" stroke-width="0.8"/><rect x="0.4" y="0.4" width="10.6" height="2.6" fill="#34508C"/><rect x="0.2" y="9.2" width="11" height="1.2" fill="#34508C"/><path d="M0.4 5.1h10.6M0.4 7.2h10.6M3.9 3v6.4M7.5 3v6.4" stroke="#6F86BC" stroke-width="0.7"/></svg>
<span class="t" style="left:28.10px;top:481.99px;font-size:9.5px;color:#444;transform:scaleX(0.7644);transform-origin:left center;">exeb_00_a_ReqHistory</span>
<svg class="r" style="left:9.60px;top:500.80px" width="11.4" height="10.6" viewBox="0 0 11.4 10.6"><rect x="0.4" y="0.4" width="10.6" height="9.4" fill="#fff" stroke="#3E5C9A" stroke-width="0.8"/><rect x="0.4" y="0.4" width="10.6" height="2.6" fill="#34508C"/><rect x="0.2" y="9.2" width="11" height="1.2" fill="#34508C"/><path d="M0.4 5.1h10.6M0.4 7.2h10.6M3.9 3v6.4M7.5 3v6.4" stroke="#6F86BC" stroke-width="0.7"/></svg>
<span class="t" style="left:28.10px;top:502.13px;font-size:9.5px;color:#444;transform:scaleX(0.7730);transform-origin:left center;">exeb_01_OrigPNBud</span>
<svg class="r" style="left:9.60px;top:520.94px" width="11.4" height="10.6" viewBox="0 0 11.4 10.6"><rect x="0.4" y="0.4" width="10.6" height="9.4" fill="#fff" stroke="#3E5C9A" stroke-width="0.8"/><rect x="0.4" y="0.4" width="10.6" height="2.6" fill="#34508C"/><rect x="0.2" y="9.2" width="11" height="1.2" fill="#34508C"/><path d="M0.4 5.1h10.6M0.4 7.2h10.6M3.9 3v6.4M7.5 3v6.4" stroke="#6F86BC" stroke-width="0.7"/></svg>
<span class="t" style="left:28.10px;top:522.27px;font-size:9.5px;color:#444;transform:scaleX(0.7516);transform-origin:left center;">exeb_01_VSProjExp</span>
<svg class="r" style="left:9.60px;top:541.08px" width="11.4" height="10.6" viewBox="0 0 11.4 10.6"><rect x="0.4" y="0.4" width="10.6" height="9.4" fill="#fff" stroke="#3E5C9A" stroke-width="0.8"/><rect x="0.4" y="0.4" width="10.6" height="2.6" fill="#34508C"/><rect x="0.2" y="9.2" width="11" height="1.2" fill="#34508C"/><path d="M0.4 5.1h10.6M0.4 7.2h10.6M3.9 3v6.4M7.5 3v6.4" stroke="#6F86BC" stroke-width="0.7"/></svg>
<span class="t" style="left:28.10px;top:542.41px;font-size:9.5px;color:#444;transform:scaleX(0.7689);transform-origin:left center;">exeb_02_VSProjDMOI</span>
<svg class="r" style="left:9.60px;top:561.22px" width="11.4" height="10.6" viewBox="0 0 11.4 10.6"><rect x="0.4" y="0.4" width="10.6" height="9.4" fill="#fff" stroke="#3E5C9A" stroke-width="0.8"/><rect x="0.4" y="0.4" width="10.6" height="2.6" fill="#34508C"/><rect x="0.2" y="9.2" width="11" height="1.2" fill="#34508C"/><path d="M0.4 5.1h10.6M0.4 7.2h10.6M3.9 3v6.4M7.5 3v6.4" stroke="#6F86BC" stroke-width="0.7"/></svg>
<span class="t" style="left:28.10px;top:562.55px;font-size:9.5px;color:#444;transform:scaleX(0.7855);transform-origin:left center;">exeb_03_CompOpCntrl</span>
<svg class="r" style="left:9.60px;top:581.36px" width="11.4" height="10.6" viewBox="0 0 11.4 10.6"><rect x="0.4" y="0.4" width="10.6" height="9.4" fill="#fff" stroke="#3E5C9A" stroke-width="0.8"/><rect x="0.4" y="0.4" width="10.6" height="2.6" fill="#34508C"/><rect x="0.2" y="9.2" width="11" height="1.2" fill="#34508C"/><path d="M0.4 5.1h10.6M0.4 7.2h10.6M3.9 3v6.4M7.5 3v6.4" stroke="#6F86BC" stroke-width="0.7"/></svg>
<span class="t" style="left:28.10px;top:582.69px;font-size:9.5px;color:#444;transform:scaleX(0.7278);transform-origin:left center;">exeb_03_JVs</span>
<svg class="r" style="left:9.60px;top:601.50px" width="11.4" height="10.6" viewBox="0 0 11.4 10.6"><rect x="0.4" y="0.4" width="10.6" height="9.4" fill="#fff" stroke="#3E5C9A" stroke-width="0.8"/><rect x="0.4" y="0.4" width="10.6" height="2.6" fill="#34508C"/><rect x="0.2" y="9.2" width="11" height="1.2" fill="#34508C"/><path d="M0.4 5.1h10.6M0.4 7.2h10.6M3.9 3v6.4M7.5 3v6.4" stroke="#6F86BC" stroke-width="0.7"/></svg>
<span class="t" style="left:28.10px;top:602.83px;font-size:9.5px;color:#444;transform:scaleX(0.7496);transform-origin:left center;">exec_01_VacSav</span>
<svg class="r" style="left:9.60px;top:621.64px" width="11.4" height="10.6" viewBox="0 0 11.4 10.6"><rect x="0.4" y="0.4" width="10.6" height="9.4" fill="#fff" stroke="#3E5C9A" stroke-width="0.8"/><rect x="0.4" y="0.4" width="10.6" height="2.6" fill="#34508C"/><rect x="0.2" y="9.2" width="11" height="1.2" fill="#34508C"/><path d="M0.4 5.1h10.6M0.4 7.2h10.6M3.9 3v6.4M7.5 3v6.4" stroke="#6F86BC" stroke-width="0.7"/></svg>
<span class="t" style="left:28.10px;top:622.97px;font-size:9.5px;color:#444;transform:scaleX(0.7528);transform-origin:left center;">exec_02_RevSumm</span>
<span class="t" style="left:4.00px;top:641.06px;font-size:9.1px;color:#444;transform:scaleX(0.7362);transform-origin:left center;">Datasheet View</span>
<span class="t" style="left:909.10px;top:643.65px;font-size:9.3px;color:#444;transform:scaleX(0.8313);transform-origin:left center;">Num Lock</span>
<div class="r" style="left:954.60px;top:637.30px;width:23.10px;height:17.80px;background:#C8C6C4;"></div>
<svg class="r" style="left:961.50px;top:640.00px" width="10" height="11" viewBox="0 0 10 11"><rect x="0.5" y="0.5" width="9" height="10" fill="none" stroke="#7c7c7c" stroke-width="0.8"/><path d="M0.5 3h9M3.2 3v7.5M3.2 5.5h6.3M3.2 8h6.3" stroke="#7c7c7c" stroke-width="0.7"/></svg>
<svg class="r" style="left:984.40px;top:639.30px" width="11.6" height="11.8" viewBox="0 0 11.6 11.8"><path d="M1.2 1 V7.4 H6.2Z" fill="none" stroke="#9a9a9a" stroke-width="1"/><path d="M9.6 0.6 L5.2 6.6" stroke="#6a6a6a" stroke-width="1.3"/><rect x="1" y="8.3" width="9.6" height="2.8" fill="#ECECEC" stroke="#9a9a9a" stroke-width="0.8"/></svg>
<div class="r" style="left:269.40px;top:133.60px;width:731.60px;height:14.00px;background:#fff;"></div>
<div class="r" style="left:269.6px;top:134px;width:65.6px;height:13.5px;background:#fff;border:0.7px solid #C9C9C9;border-bottom:none;"></div>
<div class="r" style="left:335.90px;top:133.60px;width:72.60px;height:14.00px;background:#FCB9BE;"></div>
<svg class="r" style="left:271.60px;top:135.90px" width="8.4" height="8.4" viewBox="0 0 8.4 8.4"><rect x="0.4" y="0.4" width="7.6" height="7.6" fill="#fff" stroke="#3E5C9A" stroke-width="0.8"/><rect x="0.4" y="0.4" width="7.6" height="2.2" fill="#3E5C9A"/><path d="M0.4 4.4h7.6M0.4 6.2h7.6M3 2.6v5.4M5.5 2.6v5.4" stroke="#6F86BC" stroke-width="0.6"/></svg>
<svg class="r" style="left:338.30px;top:135.90px" width="8.4" height="8.4" viewBox="0 0 8.4 8.4"><rect x="0.4" y="0.4" width="7.6" height="7.6" fill="#fff" stroke="#3E5C9A" stroke-width="0.8"/><rect x="0.4" y="0.4" width="7.6" height="2.2" fill="#3E5C9A"/><path d="M0.4 4.4h7.6M0.4 6.2h7.6M3 2.6v5.4M5.5 2.6v5.4" stroke="#6F86BC" stroke-width="0.6"/></svg>
<span class="t" style="left:285.00px;top:136.79px;font-size:8.2px;color:#555;transform:scaleX(0.6339);transform-origin:left center;">exeb_03_JVs</span>
<span class="t" style="left:351.00px;top:136.79px;font-size:8.2px;color:#3b3b3b;transform:scaleX(0.6615);transform-origin:left center;font-weight:bold;">exea_01_NRGL</span>
<svg class="r" style="left:325.60px;top:137.20px" width="6.6" height="7" viewBox="0 0 6.6 7"><path d="M0.8 0.8 L6.2 6.2 M6.2 0.8 L0.8 6.2" stroke="#777" stroke-width="0.8"/></svg>
<svg class="r" style="left:398.60px;top:137.20px" width="6.6" height="7" viewBox="0 0 6.6 7"><path d="M0.8 0.8 L6.2 6.2 M6.2 0.8 L0.8 6.2" stroke="#8a6a6c" stroke-width="0.8"/></svg>
<div class="r" style="left:269.40px;top:147.60px;width:732.10px;height:12.40px;background:#E3E6EC;"></div>
<div class="r" style="left:269.40px;top:147.60px;width:724.00px;height:0.80px;background:#BDBDBD;"></div>
<div class="r" style="left:278.40px;top:147.60px;width:40.20px;height:12.40px;background:linear-gradient(#FFE69A,#FFD04D);"></div>
<svg class="r" style="left:270.50px;top:149.50px" width="7" height="9" viewBox="0 0 7 9"><path d="M6.5 1 V8 H0.5Z" fill="#F4F4F6" stroke="#CDD3DF" stroke-width="0.5"/></svg>
<div class="r" style="left:278.40px;top:160.10px;width:715.00px;height:12.61px;background:#A7CDF0;"></div>
<div class="r" style="left:269.40px;top:160.10px;width:9.00px;height:12.61px;background:#FFD557;"></div>
<div class="r" style="left:278.40px;top:172.71px;width:715.00px;height:12.61px;background:#F1F1F1;"></div>
<div class="r" style="left:269.40px;top:172.71px;width:9.00px;height:12.61px;background:#DCE1EA;"></div>
<div class="r" style="left:278.40px;top:185.32px;width:715.00px;height:12.61px;background:#fff;"></div>
<div class="r" style="left:269.40px;top:185.32px;width:9.00px;height:12.61px;background:#DCE1EA;"></div>
<div class="r" style="left:278.40px;top:197.93px;width:715.00px;height:12.61px;background:#F1F1F1;"></div>
<div class="r" style="left:269.40px;top:197.93px;width:9.00px;height:12.61px;background:#DCE1EA;"></div>
<div class="r" style="left:278.40px;top:210.54px;width:715.00px;height:12.61px;background:#fff;"></div>
<div class="r" style="left:269.40px;top:210.54px;width:9.00px;height:12.61px;background:#DCE1EA;"></div>
<div class="r" style="left:278.40px;top:223.15px;width:715.00px;height:12.61px;background:#F1F1F1;"></div>
<div class="r" style="left:269.40px;top:223.15px;width:9.00px;height:12.61px;background:#DCE1EA;"></div>
<div class="r" style="left:278.40px;top:235.76px;width:715.00px;height:12.61px;background:#fff;"></div>
<div class="r" style="left:269.40px;top:235.76px;width:9.00px;height:12.61px;background:#DCE1EA;"></div>
<div class="r" style="left:278.40px;top:248.37px;width:715.00px;height:12.61px;background:#F1F1F1;"></div>
<div class="r" style="left:269.40px;top:248.37px;width:9.00px;height:12.61px;background:#DCE1EA;"></div>
<div class="r" style="left:278.40px;top:260.98px;width:715.00px;height:12.61px;background:#fff;"></div>
<div class="r" style="left:269.40px;top:260.98px;width:9.00px;height:12.61px;background:#DCE1EA;"></div>
<div class="r" style="left:278.40px;top:273.59px;width:715.00px;height:12.61px;background:#F1F1F1;"></div>
<div class="r" style="left:269.40px;top:273.59px;width:9.00px;height:12.61px;background:#DCE1EA;"></div>
<div class="r" style="left:278.40px;top:286.20px;width:715.00px;height:12.61px;background:#fff;"></div>
<div class="r" style="left:269.40px;top:286.20px;width:9.00px;height:12.61px;background:#DCE1EA;"></div>
<div class="r" style="left:278.40px;top:298.81px;width:715.00px;height:12.61px;background:#F1F1F1;"></div>
<div class="r" style="left:269.40px;top:298.81px;width:9.00px;height:12.61px;background:#DCE1EA;"></div>
<div class="r" style="left:278.40px;top:311.42px;width:715.00px;height:12.61px;background:#fff;"></div>
<div class="r" style="left:269.40px;top:311.42px;width:9.00px;height:12.61px;background:#DCE1EA;"></div>
<div class="r" style="left:278.40px;top:324.03px;width:715.00px;height:12.61px;background:#F1F1F1;"></div>
<div class="r" style="left:269.40px;top:324.03px;width:9.00px;height:12.61px;background:#DCE1EA;"></div>
<div class="r" style="left:278.40px;top:336.64px;width:715.00px;height:12.61px;background:#fff;"></div>
<div class="r" style="left:269.40px;top:336.64px;width:9.00px;height:12.61px;background:#DCE1EA;"></div>
<div class="r" style="left:278.40px;top:349.25px;width:715.00px;height:12.61px;background:#F1F1F1;"></div>
<div class="r" style="left:269.40px;top:349.25px;width:9.00px;height:12.61px;background:#DCE1EA;"></div>
<div class="r" style="left:278.40px;top:361.86px;width:715.00px;height:12.61px;background:#fff;"></div>
<div class="r" style="left:269.40px;top:361.86px;width:9.00px;height:12.61px;background:#DCE1EA;"></div>
<div class="r" style="left:278.40px;top:374.47px;width:715.00px;height:12.61px;background:#F1F1F1;"></div>
<div class="r" style="left:269.40px;top:374.47px;width:9.00px;height:12.61px;background:#DCE1EA;"></div>
<div class="r" style="left:278.40px;top:387.08px;width:715.00px;height:12.61px;background:#fff;"></div>
<div class="r" style="left:269.40px;top:387.08px;width:9.00px;height:12.61px;background:#DCE1EA;"></div>
<div class="r" style="left:278.40px;top:399.69px;width:715.00px;height:12.61px;background:#F1F1F1;"></div>
<div class="r" style="left:269.40px;top:399.69px;width:9.00px;height:12.61px;background:#DCE1EA;"></div>
<div class="r" style="left:278.40px;top:412.30px;width:715.00px;height:12.61px;background:#fff;"></div>
<div class="r" style="left:269.40px;top:412.30px;width:9.00px;height:12.61px;background:#DCE1EA;"></div>
<div class="r" style="left:278.40px;top:424.91px;width:715.00px;height:12.61px;background:#F1F1F1;"></div>
<div class="r" style="left:269.40px;top:424.91px;width:9.00px;height:12.61px;background:#DCE1EA;"></div>
<div class="r" style="left:278.40px;top:437.52px;width:715.00px;height:12.61px;background:#fff;"></div>
<div class="r" style="left:269.40px;top:437.52px;width:9.00px;height:12.61px;background:#DCE1EA;"></div>
<div class="r" style="left:278.40px;top:450.13px;width:715.00px;height:12.61px;background:#F1F1F1;"></div>
<div class="r" style="left:269.40px;top:450.13px;width:9.00px;height:12.61px;background:#DCE1EA;"></div>
<div class="r" style="left:278.40px;top:462.74px;width:715.00px;height:12.61px;background:#fff;"></div>
<div class="r" style="left:269.40px;top:462.74px;width:9.00px;height:12.61px;background:#DCE1EA;"></div>
<div class="r" style="left:278.40px;top:475.35px;width:715.00px;height:12.61px;background:#F1F1F1;"></div>
<div class="r" style="left:269.40px;top:475.35px;width:9.00px;height:12.61px;background:#DCE1EA;"></div>
<div class="r" style="left:278.40px;top:487.96px;width:715.00px;height:12.61px;background:#fff;"></div>
<div class="r" style="left:269.40px;top:487.96px;width:9.00px;height:12.61px;background:#DCE1EA;"></div>
<div class="r" style="left:278.40px;top:500.57px;width:715.00px;height:12.61px;background:#F1F1F1;"></div>
<div class="r" style="left:269.40px;top:500.57px;width:9.00px;height:12.61px;background:#DCE1EA;"></div>
<div class="r" style="left:278.40px;top:513.18px;width:715.00px;height:12.61px;background:#fff;"></div>
<div class="r" style="left:269.40px;top:513.18px;width:9.00px;height:12.61px;background:#DCE1EA;"></div>
<div class="r" style="left:278.40px;top:525.79px;width:715.00px;height:12.61px;background:#F1F1F1;"></div>
<div class="r" style="left:269.40px;top:525.79px;width:9.00px;height:12.61px;background:#DCE1EA;"></div>
<div class="r" style="left:278.40px;top:538.40px;width:715.00px;height:12.61px;background:#fff;"></div>
<div class="r" style="left:269.40px;top:538.40px;width:9.00px;height:12.61px;background:#DCE1EA;"></div>
<div class="r" style="left:278.40px;top:551.01px;width:715.00px;height:12.61px;background:#F1F1F1;"></div>
<div class="r" style="left:269.40px;top:551.01px;width:9.00px;height:12.61px;background:#DCE1EA;"></div>
<div class="r" style="left:278.40px;top:563.62px;width:715.00px;height:12.61px;background:#fff;"></div>
<div class="r" style="left:269.40px;top:563.62px;width:9.00px;height:12.61px;background:#DCE1EA;"></div>
<div class="r" style="left:278.40px;top:576.23px;width:715.00px;height:12.61px;background:#F1F1F1;"></div>
<div class="r" style="left:269.40px;top:576.23px;width:9.00px;height:12.61px;background:#DCE1EA;"></div>
<div class="r" style="left:278.40px;top:588.84px;width:715.00px;height:12.61px;background:#fff;"></div>
<div class="r" style="left:269.40px;top:588.84px;width:9.00px;height:12.61px;background:#DCE1EA;"></div>
<div class="r" style="left:278.40px;top:601.45px;width:715.00px;height:12.61px;background:#F1F1F1;"></div>
<div class="r" style="left:269.40px;top:601.45px;width:9.00px;height:12.61px;background:#DCE1EA;"></div>
<div class="r" style="left:269.40px;top:172.00px;width:724.00px;height:1.00px;background:#DCE1EC;"></div>
<div class="r" style="left:269.40px;top:184.00px;width:724.00px;height:1.00px;background:#DCE1EC;"></div>
<div class="r" style="left:269.40px;top:197.00px;width:724.00px;height:1.00px;background:#DCE1EC;"></div>
<div class="r" style="left:269.40px;top:210.00px;width:724.00px;height:1.00px;background:#DCE1EC;"></div>
<div class="r" style="left:269.40px;top:222.00px;width:724.00px;height:1.00px;background:#DCE1EC;"></div>
<div class="r" style="left:269.40px;top:235.00px;width:724.00px;height:1.00px;background:#DCE1EC;"></div>
<div class="r" style="left:269.40px;top:247.00px;width:724.00px;height:1.00px;background:#DCE1EC;"></div>
<div class="r" style="left:269.40px;top:260.00px;width:724.00px;height:1.00px;background:#DCE1EC;"></div>
<div class="r" style="left:269.40px;top:273.00px;width:724.00px;height:1.00px;background:#DCE1EC;"></div>
<div class="r" style="left:269.40px;top:285.00px;width:724.00px;height:1.00px;background:#DCE1EC;"></div>
<div class="r" style="left:269.40px;top:298.00px;width:724.00px;height:1.00px;background:#DCE1EC;"></div>
<div class="r" style="left:269.40px;top:310.00px;width:724.00px;height:1.00px;background:#DCE1EC;"></div>
<div class="r" style="left:269.40px;top:323.00px;width:724.00px;height:1.00px;background:#DCE1EC;"></div>
<div class="r" style="left:269.40px;top:336.00px;width:724.00px;height:1.00px;background:#DCE1EC;"></div>
<div class="r" style="left:269.40px;top:348.00px;width:724.00px;height:1.00px;background:#DCE1EC;"></div>
<div class="r" style="left:269.40px;top:361.00px;width:724.00px;height:1.00px;background:#DCE1EC;"></div>
<div class="r" style="left:269.40px;top:373.00px;width:724.00px;height:1.00px;background:#DCE1EC;"></div>
<div class="r" style="left:269.40px;top:386.00px;width:724.00px;height:1.00px;background:#DCE1EC;"></div>
<div class="r" style="left:269.40px;top:399.00px;width:724.00px;height:1.00px;background:#DCE1EC;"></div>
<div class="r" style="left:269.40px;top:411.00px;width:724.00px;height:1.00px;background:#DCE1EC;"></div>
<div class="r" style="left:269.40px;top:424.00px;width:724.00px;height:1.00px;background:#DCE1EC;"></div>
<div class="r" style="left:269.40px;top:437.00px;width:724.00px;height:1.00px;background:#DCE1EC;"></div>
<div class="r" style="left:269.40px;top:449.00px;width:724.00px;height:1.00px;background:#DCE1EC;"></div>
<div class="r" style="left:269.40px;top:462.00px;width:724.00px;height:1.00px;background:#DCE1EC;"></div>
<div class="r" style="left:269.40px;top:474.00px;width:724.00px;height:1.00px;background:#DCE1EC;"></div>
<div class="r" style="left:269.40px;top:487.00px;width:724.00px;height:1.00px;background:#DCE1EC;"></div>
<div class="r" style="left:269.40px;top:500.00px;width:724.00px;height:1.00px;background:#DCE1EC;"></div>
<div class="r" style="left:269.40px;top:512.00px;width:724.00px;height:1.00px;background:#DCE1EC;"></div>
<div class="r" style="left:269.40px;top:525.00px;width:724.00px;height:1.00px;background:#DCE1EC;"></div>
<div class="r" style="left:269.40px;top:537.00px;width:724.00px;height:1.00px;background:#DCE1EC;"></div>
<div class="r" style="left:269.40px;top:550.00px;width:724.00px;height:1.00px;background:#DCE1EC;"></div>
<div class="r" style="left:269.40px;top:563.00px;width:724.00px;height:1.00px;background:#DCE1EC;"></div>
<div class="r" style="left:269.40px;top:575.00px;width:724.00px;height:1.00px;background:#DCE1EC;"></div>
<div class="r" style="left:269.40px;top:588.00px;width:724.00px;height:1.00px;background:#DCE1EC;"></div>
<div class="r" style="left:269.40px;top:600.00px;width:724.00px;height:1.00px;background:#DCE1EC;"></div>
<div class="r" style="left:269.40px;top:613.00px;width:724.00px;height:1.00px;background:#DCE1EC;"></div>
<div class="r" style="left:269.40px;top:613.40px;width:724.00px;height:12.40px;background:#fff;"></div>
<div class="r" style="left:269.40px;top:613.40px;width:9.00px;height:12.40px;background:#DCE1EA;"></div>
<div class="r" style="left:269.40px;top:625.00px;width:724.00px;height:1.00px;background:#DCE1EC;"></div>
<div class="r" style="left:278.00px;top:147.60px;width:1.00px;height:478.00px;background:#DEE3EE;"></div>
<div class="r" style="left:318.00px;top:147.60px;width:1.00px;height:478.00px;background:#DEE3EE;"></div>
<div class="r" style="left:358.00px;top:147.60px;width:1.00px;height:478.00px;background:#DEE3EE;"></div>
<div class="r" style="left:398.00px;top:147.60px;width:1.00px;height:478.00px;background:#DEE3EE;"></div>
<div class="r" style="left:431.00px;top:147.60px;width:1.00px;height:478.00px;background:#DEE3EE;"></div>
<div class="r" style="left:482.00px;top:147.60px;width:1.00px;height:478.00px;background:#DEE3EE;"></div>
<div class="r" style="left:516.00px;top:147.60px;width:1.00px;height:478.00px;background:#DEE3EE;"></div>
<div class="r" style="left:559.00px;top:147.60px;width:1.00px;height:478.00px;background:#DEE3EE;"></div>
<div class="r" style="left:610.00px;top:147.60px;width:1.00px;height:478.00px;background:#DEE3EE;"></div>
<div class="r" style="left:650.00px;top:147.60px;width:1.00px;height:478.00px;background:#DEE3EE;"></div>
<div class="r" style="left:694.00px;top:147.60px;width:1.00px;height:478.00px;background:#DEE3EE;"></div>
<div class="r" style="left:744.00px;top:147.60px;width:1.00px;height:478.00px;background:#DEE3EE;"></div>
<div class="r" style="left:791.00px;top:147.60px;width:1.00px;height:478.00px;background:#DEE3EE;"></div>
<div class="r" style="left:825.00px;top:147.60px;width:1.00px;height:478.00px;background:#DEE3EE;"></div>
<div class="r" style="left:868.00px;top:147.60px;width:1.00px;height:478.00px;background:#DEE3EE;"></div>
<div class="r" style="left:908.00px;top:147.60px;width:1.00px;height:478.00px;background:#DEE3EE;"></div>
<div class="r" style="left:949.00px;top:147.60px;width:1.00px;height:478.00px;background:#DEE3EE;"></div>
<div class="r" style="left:278.00px;top:147.60px;width:0.80px;height:478.40px;background:#C3CAD8;"></div>
<div class="r" style="left:318.00px;top:148.40px;width:1.00px;height:11.60px;background:#C9CED8;"></div>
<div class="r" style="left:358.00px;top:148.40px;width:1.00px;height:11.60px;background:#C9CED8;"></div>
<div class="r" style="left:398.00px;top:148.40px;width:1.00px;height:11.60px;background:#C9CED8;"></div>
<div class="r" style="left:431.00px;top:148.40px;width:1.00px;height:11.60px;background:#C9CED8;"></div>
<div class="r" style="left:482.00px;top:148.40px;width:1.00px;height:11.60px;background:#C9CED8;"></div>
<div class="r" style="left:516.00px;top:148.40px;width:1.00px;height:11.60px;background:#C9CED8;"></div>
<div class="r" style="left:559.00px;top:148.40px;width:1.00px;height:11.60px;background:#C9CED8;"></div>
<div class="r" style="left:610.00px;top:148.40px;width:1.00px;height:11.60px;background:#C9CED8;"></div>
<div class="r" style="left:650.00px;top:148.40px;width:1.00px;height:11.60px;background:#C9CED8;"></div>
<div class="r" style="left:694.00px;top:148.40px;width:1.00px;height:11.60px;background:#C9CED8;"></div>
<div class="r" style="left:744.00px;top:148.40px;width:1.00px;height:11.60px;background:#C9CED8;"></div>
<div class="r" style="left:791.00px;top:148.40px;width:1.00px;height:11.60px;background:#C9CED8;"></div>
<div class="r" style="left:825.00px;top:148.40px;width:1.00px;height:11.60px;background:#C9CED8;"></div>
<div class="r" style="left:868.00px;top:148.40px;width:1.00px;height:11.60px;background:#C9CED8;"></div>
<div class="r" style="left:908.00px;top:148.40px;width:1.00px;height:11.60px;background:#C9CED8;"></div>
<div class="r" style="left:949.00px;top:148.40px;width:1.00px;height:11.60px;background:#C9CED8;"></div>
<span class="t" style="left:291.50px;top:149.80px;font-size:9.2px;color:#3a3a3a;transform:scaleX(0.5954);transform-origin:left center;-webkit-text-stroke:0.2px #3a3a3a;">FY</span>
<svg class="r" style="left:311.50px;top:153.75px" width="3.4" height="2.04" viewBox="0 0 4 2.4"><path d="M0 0 H4 L2 2.4Z" fill="#333"/></svg>
<span class="t" style="left:331.21px;top:149.80px;font-size:9.2px;color:#3a3a3a;transform:scaleX(0.6806);transform-origin:left center;-webkit-text-stroke:0.2px #3a3a3a;">AY</span>
<svg class="r" style="left:351.60px;top:153.75px" width="3.4" height="2.04" viewBox="0 0 4 2.4"><path d="M0 0 H4 L2 2.4Z" fill="#333"/></svg>
<span class="t" style="left:369.24px;top:149.80px;font-size:9.2px;color:#3a3a3a;transform:scaleX(0.7575);transform-origin:left center;-webkit-text-stroke:0.2px #3a3a3a;">MO</span>
<svg class="r" style="left:390.90px;top:153.75px" width="3.4" height="2.04" viewBox="0 0 4 2.4"><path d="M0 0 H4 L2 2.4Z" fill="#333"/></svg>
<span class="t" style="left:405.34px;top:149.80px;font-size:9.2px;color:#3a3a3a;transform:scaleX(0.6196);transform-origin:left center;-webkit-text-stroke:0.2px #3a3a3a;">CGL</span>
<svg class="r" style="left:424.30px;top:153.75px" width="3.4" height="2.04" viewBox="0 0 4 2.4"><path d="M0 0 H4 L2 2.4Z" fill="#333"/></svg>
<span class="t" style="left:444.74px;top:149.80px;font-size:9.2px;color:#3a3a3a;transform:scaleX(0.6478);transform-origin:left center;-webkit-text-stroke:0.2px #3a3a3a;">PDOC</span>
<svg class="r" style="left:475.20px;top:153.75px" width="3.4" height="2.04" viewBox="0 0 4 2.4"><path d="M0 0 H4 L2 2.4Z" fill="#333"/></svg>
<span class="t" style="left:485.45px;top:149.80px;font-size:9.2px;color:#3a3a3a;transform:scaleX(0.6400);transform-origin:left center;-webkit-text-stroke:0.2px #3a3a3a;">TCODE</span>
<svg class="r" style="left:509.10px;top:153.75px" width="3.4" height="2.04" viewBox="0 0 4 2.4"><path d="M0 0 H4 L2 2.4Z" fill="#333"/></svg>
<span class="t" style="left:525.23px;top:149.80px;font-size:9.2px;color:#3a3a3a;transform:scaleX(0.6632);transform-origin:left center;-webkit-text-stroke:0.2px #3a3a3a;">INDEX</span>
<svg class="r" style="left:552.80px;top:153.75px" width="3.4" height="2.04" viewBox="0 0 4 2.4"><path d="M0 0 H4 L2 2.4Z" fill="#333"/></svg>
<span class="t" style="left:571.23px;top:149.80px;font-size:9.2px;color:#3a3a3a;transform:scaleX(0.6683);transform-origin:left center;-webkit-text-stroke:0.2px #3a3a3a;">APFND</span>
<svg class="r" style="left:603.30px;top:153.75px" width="3.4" height="2.04" viewBox="0 0 4 2.4"><path d="M0 0 H4 L2 2.4Z" fill="#333"/></svg>
<span class="t" style="left:616.16px;top:149.80px;font-size:9.2px;color:#3a3a3a;transform:scaleX(0.6733);transform-origin:left center;-webkit-text-stroke:0.2px #3a3a3a;">AGFND</span>
<svg class="r" style="left:643.50px;top:153.75px" width="3.4" height="2.04" viewBox="0 0 4 2.4"><path d="M0 0 H4 L2 2.4Z" fill="#333"/></svg>
<span class="t" style="left:660.10px;top:149.80px;font-size:9.2px;color:#3a3a3a;transform:scaleX(0.6604);transform-origin:left center;-webkit-text-stroke:0.2px #3a3a3a;">ACTIV</span>
<svg class="r" style="left:687.40px;top:153.75px" width="3.4" height="2.04" viewBox="0 0 4 2.4"><path d="M0 0 H4 L2 2.4Z" fill="#333"/></svg>
<span class="t" style="left:708.44px;top:149.80px;font-size:9.2px;color:#3a3a3a;transform:scaleX(0.6116);transform-origin:left center;-webkit-text-stroke:0.2px #3a3a3a;">SERV</span>
<svg class="r" style="left:737.50px;top:153.75px" width="3.4" height="2.04" viewBox="0 0 4 2.4"><path d="M0 0 H4 L2 2.4Z" fill="#333"/></svg>
<span class="t" style="left:758.67px;top:149.80px;font-size:9.2px;color:#3a3a3a;transform:scaleX(0.6372);transform-origin:left center;-webkit-text-stroke:0.2px #3a3a3a;">PCA</span>
<svg class="r" style="left:784.70px;top:153.75px" width="3.4" height="2.04" viewBox="0 0 4 2.4"><path d="M0 0 H4 L2 2.4Z" fill="#333"/></svg>
<span class="t" style="left:796.82px;top:149.80px;font-size:9.2px;color:#3a3a3a;transform:scaleX(0.6675);transform-origin:left center;-webkit-text-stroke:0.2px #3a3a3a;">GAAP</span>
<svg class="r" style="left:818.80px;top:153.75px" width="3.4" height="2.04" viewBox="0 0 4 2.4"><path d="M0 0 H4 L2 2.4Z" fill="#333"/></svg>
<span class="t" style="left:837.59px;top:149.80px;font-size:9.2px;color:#3a3a3a;transform:scaleX(0.6024);transform-origin:left center;-webkit-text-stroke:0.2px #3a3a3a;">CSG</span>
<svg class="r" style="left:861.20px;top:153.75px" width="3.4" height="2.04" viewBox="0 0 4 2.4"><path d="M0 0 H4 L2 2.4Z" fill="#333"/></svg>
<span class="t" style="left:877.34px;top:149.80px;font-size:9.2px;color:#3a3a3a;transform:scaleX(0.6207);transform-origin:left center;-webkit-text-stroke:0.2px #3a3a3a;">COBJ</span>
<svg class="r" style="left:901.50px;top:153.75px" width="3.4" height="2.04" viewBox="0 0 4 2.4"><path d="M0 0 H4 L2 2.4Z" fill="#333"/></svg>
<span class="t" style="left:917.72px;top:149.80px;font-size:9.2px;color:#3a3a3a;transform:scaleX(0.6479);transform-origin:left center;-webkit-text-stroke:0.2px #3a3a3a;">AOBJ</span>
<svg class="r" style="left:942.30px;top:153.75px" width="3.4" height="2.04" viewBox="0 0 4 2.4"><path d="M0 0 H4 L2 2.4Z" fill="#333"/></svg>
<span class="t" style="left:964.96px;top:149.80px;font-size:9.2px;color:#3a3a3a;transform:scaleX(0.6142);transform-origin:left center;-webkit-text-stroke:0.2px #3a3a3a;">DLRS</span>
<span class="t" style="left:331.15px;top:162.91px;font-size:9.2px;color:#222;transform:scaleX(0.7332);transform-origin:left center;-webkit-text-stroke:0.3px #222;">2015</span>
<span class="t" style="left:374.60px;top:162.91px;font-size:9.2px;color:#222;transform:scaleX(0.7857);transform-origin:left center;-webkit-text-stroke:0.3px #222;">11</span>
<span class="t" style="left:407.20px;top:162.91px;font-size:9.2px;color:#222;transform:scaleX(0.7332);transform-origin:left center;-webkit-text-stroke:0.3px #222;">3500</span>
<span class="t" style="left:441.78px;top:162.91px;font-size:9.2px;color:#222;transform:scaleX(0.6771);transform-origin:left center;-webkit-text-stroke:0.3px #222;">PY1505C6</span>
<span class="t" style="left:493.62px;top:162.91px;font-size:9.2px;color:#222;transform:scaleX(0.7332);transform-origin:left center;-webkit-text-stroke:0.3px #222;">751</span>
<span class="t" style="left:528.67px;top:162.91px;font-size:9.2px;color:#222;transform:scaleX(0.7332);transform-origin:left center;-webkit-text-stroke:0.3px #222;">40100</span>
<span class="t" style="left:577.65px;top:162.91px;font-size:9.2px;color:#222;transform:scaleX(0.7332);transform-origin:left center;-webkit-text-stroke:0.3px #222;">0100</span>
<span class="t" style="left:623.00px;top:162.91px;font-size:9.2px;color:#222;transform:scaleX(0.7332);transform-origin:left center;-webkit-text-stroke:0.3px #222;">0100</span>
<span class="t" style="left:665.05px;top:162.91px;font-size:9.2px;color:#222;transform:scaleX(0.7332);transform-origin:left center;-webkit-text-stroke:0.3px #222;">4010</span>
<span class="t" style="left:713.39px;top:162.91px;font-size:9.2px;color:#222;transform:scaleX(0.6020);transform-origin:left center;-webkit-text-stroke:0.3px #222;">LICS</span>
<span class="t" style="left:760.17px;top:162.91px;font-size:9.2px;color:#222;transform:scaleX(0.6283);transform-origin:left center;-webkit-text-stroke:0.3px #222;">LICS4</span>
<span class="t" style="left:805.10px;top:162.91px;font-size:9.2px;color:#222;transform:scaleX(0.7332);transform-origin:left center;-webkit-text-stroke:0.3px #222;">01</span>
<span class="t" style="left:839.60px;top:162.91px;font-size:9.2px;color:#222;transform:scaleX(0.7332);transform-origin:left center;-webkit-text-stroke:0.3px #222;">0014</span>
<span class="t" style="left:880.95px;top:162.91px;font-size:9.2px;color:#222;transform:scaleX(0.7332);transform-origin:left center;-webkit-text-stroke:0.3px #222;">0160</span>
<span class="t" style="left:921.50px;top:162.91px;font-size:9.2px;color:#222;transform:scaleX(0.7332);transform-origin:left center;-webkit-text-stroke:0.3px #222;">0160</span>
<div class="r" style="left:949.8px;top:160.10px;width:43.5px;height:12.61px;overflow:hidden;">
<span class="t" style="left:30.19px;top:2.81px;font-size:9.2px;color:#222;transform:scaleX(0.7326);transform-origin:left center;">(25.0</span>
</div>
<span class="t" style="left:291.00px;top:175.52px;font-size:9.2px;color:#404040;transform:scaleX(0.7332);transform-origin:left center;">2015</span>
<span class="t" style="left:331.15px;top:175.52px;font-size:9.2px;color:#404040;transform:scaleX(0.7332);transform-origin:left center;">2015</span>
<span class="t" style="left:374.60px;top:175.52px;font-size:9.2px;color:#404040;transform:scaleX(0.7332);transform-origin:left center;">12</span>
<span class="t" style="left:407.20px;top:175.52px;font-size:9.2px;color:#404040;transform:scaleX(0.7332);transform-origin:left center;">3500</span>
<span class="t" style="left:441.78px;top:175.52px;font-size:9.2px;color:#404040;transform:scaleX(0.6771);transform-origin:left center;">PY1506C6</span>
<span class="t" style="left:493.62px;top:175.52px;font-size:9.2px;color:#404040;transform:scaleX(0.7332);transform-origin:left center;">751</span>
<span class="t" style="left:528.67px;top:175.52px;font-size:9.2px;color:#404040;transform:scaleX(0.7332);transform-origin:left center;">40100</span>
<span class="t" style="left:577.65px;top:175.52px;font-size:9.2px;color:#404040;transform:scaleX(0.7332);transform-origin:left center;">0100</span>
<span class="t" style="left:623.00px;top:175.52px;font-size:9.2px;color:#404040;transform:scaleX(0.7332);transform-origin:left center;">0100</span>
<span class="t" style="left:665.05px;top:175.52px;font-size:9.2px;color:#404040;transform:scaleX(0.7332);transform-origin:left center;">4010</span>
<span class="t" style="left:713.39px;top:175.52px;font-size:9.2px;color:#404040;transform:scaleX(0.6020);transform-origin:left center;">LICS</span>
<span class="t" style="left:760.17px;top:175.52px;font-size:9.2px;color:#404040;transform:scaleX(0.6283);transform-origin:left center;">LICS4</span>
<span class="t" style="left:805.10px;top:175.52px;font-size:9.2px;color:#404040;transform:scaleX(0.7332);transform-origin:left center;">01</span>
<span class="t" style="left:839.60px;top:175.52px;font-size:9.2px;color:#404040;transform:scaleX(0.7332);transform-origin:left center;">0014</span>
<span class="t" style="left:880.95px;top:175.52px;font-size:9.2px;color:#404040;transform:scaleX(0.7332);transform-origin:left center;">0160</span>
<span class="t" style="left:921.50px;top:175.52px;font-size:9.2px;color:#404040;transform:scaleX(0.7332);transform-origin:left center;">0160</span>
<div class="r" style="left:949.8px;top:172.71px;width:43.5px;height:12.61px;overflow:hidden;">
<span class="t" style="left:30.19px;top:2.81px;font-size:9.2px;color:#404040;transform:scaleX(0.7326);transform-origin:left center;">(25.0</span>
</div>
<span class="t" style="left:291.00px;top:188.13px;font-size:9.2px;color:#404040;transform:scaleX(0.7332);transform-origin:left center;">2015</span>
<span class="t" style="left:331.15px;top:188.13px;font-size:9.2px;color:#404040;transform:scaleX(0.7332);transform-origin:left center;">2015</span>
<span class="t" style="left:374.60px;top:188.13px;font-size:9.2px;color:#404040;transform:scaleX(0.7332);transform-origin:left center;">12</span>
<span class="t" style="left:407.20px;top:188.13px;font-size:9.2px;color:#404040;transform:scaleX(0.7332);transform-origin:left center;">3500</span>
<span class="t" style="left:441.78px;top:188.13px;font-size:9.2px;color:#404040;transform:scaleX(0.6771);transform-origin:left center;">PY1507C6</span>
<span class="t" style="left:493.62px;top:188.13px;font-size:9.2px;color:#404040;transform:scaleX(0.7332);transform-origin:left center;">751</span>
<span class="t" style="left:528.67px;top:188.13px;font-size:9.2px;color:#404040;transform:scaleX(0.7332);transform-origin:left center;">40100</span>
<span class="t" style="left:577.65px;top:188.13px;font-size:9.2px;color:#404040;transform:scaleX(0.7332);transform-origin:left center;">0100</span>
<span class="t" style="left:623.00px;top:188.13px;font-size:9.2px;color:#404040;transform:scaleX(0.7332);transform-origin:left center;">0100</span>
<span class="t" style="left:665.05px;top:188.13px;font-size:9.2px;color:#404040;transform:scaleX(0.7332);transform-origin:left center;">4010</span>
<span class="t" style="left:713.39px;top:188.13px;font-size:9.2px;color:#404040;transform:scaleX(0.6020);transform-origin:left center;">LICS</span>
<span class="t" style="left:760.17px;top:188.13px;font-size:9.2px;color:#404040;transform:scaleX(0.6283);transform-origin:left center;">LICS4</span>
<span class="t" style="left:805.10px;top:188.13px;font-size:9.2px;color:#404040;transform:scaleX(0.7332);transform-origin:left center;">01</span>
<span class="t" style="left:839.60px;top:188.13px;font-size:9.2px;color:#404040;transform:scaleX(0.7332);transform-origin:left center;">0014</span>
<span class="t" style="left:880.95px;top:188.13px;font-size:9.2px;color:#404040;transform:scaleX(0.7332);transform-origin:left center;">0160</span>
<span class="t" style="left:921.50px;top:188.13px;font-size:9.2px;color:#404040;transform:scaleX(0.7332);transform-origin:left center;">0160</span>
<div class="r" style="left:949.8px;top:185.32px;width:43.5px;height:12.61px;overflow:hidden;">
<span class="t" style="left:30.19px;top:2.81px;font-size:9.2px;color:#404040;transform:scaleX(0.7326);transform-origin:left center;">(25.0</span>
</div>
<span class="t" style="left:291.00px;top:200.74px;font-size:9.2px;color:#404040;transform:scaleX(0.7332);transform-origin:left center;">2015</span>
<span class="t" style="left:331.15px;top:200.74px;font-size:9.2px;color:#404040;transform:scaleX(0.7332);transform-origin:left center;">2015</span>
<span class="t" style="left:374.60px;top:200.74px;font-size:9.2px;color:#404040;transform:scaleX(0.7332);transform-origin:left center;">12</span>
<span class="t" style="left:407.20px;top:200.74px;font-size:9.2px;color:#404040;transform:scaleX(0.7332);transform-origin:left center;">3500</span>
<span class="t" style="left:441.78px;top:200.74px;font-size:9.2px;color:#404040;transform:scaleX(0.6771);transform-origin:left center;">PY1508C6</span>
<span class="t" style="left:493.62px;top:200.74px;font-size:9.2px;color:#404040;transform:scaleX(0.7332);transform-origin:left center;">751</span>
<span class="t" style="left:528.67px;top:200.74px;font-size:9.2px;color:#404040;transform:scaleX(0.7332);transform-origin:left center;">40100</span>
<span class="t" style="left:577.65px;top:200.74px;font-size:9.2px;color:#404040;transform:scaleX(0.7332);transform-origin:left center;">0100</span>
<span class="t" style="left:623.00px;top:200.74px;font-size:9.2px;color:#404040;transform:scaleX(0.7332);transform-origin:left center;">0100</span>
<span class="t" style="left:665.05px;top:200.74px;font-size:9.2px;color:#404040;transform:scaleX(0.7332);transform-origin:left center;">4010</span>
<span class="t" style="left:713.39px;top:200.74px;font-size:9.2px;color:#404040;transform:scaleX(0.6020);transform-origin:left center;">LICS</span>
<span class="t" style="left:760.17px;top:200.74px;font-size:9.2px;color:#404040;transform:scaleX(0.6283);transform-origin:left center;">LICS4</span>
<span class="t" style="left:805.10px;top:200.74px;font-size:9.2px;color:#404040;transform:scaleX(0.7332);transform-origin:left center;">01</span>
<span class="t" style="left:839.60px;top:200.74px;font-size:9.2px;color:#404040;transform:scaleX(0.7332);transform-origin:left center;">0014</span>
<span class="t" style="left:880.95px;top:200.74px;font-size:9.2px;color:#404040;transform:scaleX(0.7332);transform-origin:left center;">0160</span>
<span class="t" style="left:921.50px;top:200.74px;font-size:9.2px;color:#404040;transform:scaleX(0.7332);transform-origin:left center;">0160</span>
<div class="r" style="left:949.8px;top:197.93px;width:43.5px;height:12.61px;overflow:hidden;">
<span class="t" style="left:30.19px;top:2.81px;font-size:9.2px;color:#404040;transform:scaleX(0.7326);transform-origin:left center;">(25.0</span>
</div>
<span class="t" style="left:291.00px;top:213.35px;font-size:9.2px;color:#404040;transform:scaleX(0.7332);transform-origin:left center;">2015</span>
<span class="t" style="left:331.15px;top:213.35px;font-size:9.2px;color:#404040;transform:scaleX(0.7332);transform-origin:left center;">2015</span>
<span class="t" style="left:374.60px;top:213.35px;font-size:9.2px;color:#404040;transform:scaleX(0.7332);transform-origin:left center;">12</span>
<span class="t" style="left:407.20px;top:213.35px;font-size:9.2px;color:#404040;transform:scaleX(0.7332);transform-origin:left center;">3500</span>
<span class="t" style="left:441.78px;top:213.35px;font-size:9.2px;color:#404040;transform:scaleX(0.6771);transform-origin:left center;">PY1509C6</span>
<span class="t" style="left:493.62px;top:213.35px;font-size:9.2px;color:#404040;transform:scaleX(0.7332);transform-origin:left center;">751</span>
<span class="t" style="left:528.67px;top:213.35px;font-size:9.2px;color:#404040;transform:scaleX(0.7332);transform-origin:left center;">40100</span>
<span class="t" style="left:577.65px;top:213.35px;font-size:9.2px;color:#404040;transform:scaleX(0.7332);transform-origin:left center;">0100</span>
<span class="t" style="left:623.00px;top:213.35px;font-size:9.2px;color:#404040;transform:scaleX(0.7332);transform-origin:left center;">0100</span>
<span class="t" style="left:665.05px;top:213.35px;font-size:9.2px;color:#404040;transform:scaleX(0.7332);transform-origin:left center;">4010</span>
<span class="t" style="left:713.39px;top:213.35px;font-size:9.2px;color:#404040;transform:scaleX(0.6020);transform-origin:left center;">LICS</span>
<span class="t" style="left:760.17px;top:213.35px;font-size:9.2px;color:#404040;transform:scaleX(0.6283);transform-origin:left center;">LICS4</span>
<span class="t" style="left:805.10px;top:213.35px;font-size:9.2px;color:#404040;transform:scaleX(0.7332);transform-origin:left center;">01</span>
<span class="t" style="left:839.60px;top:213.35px;font-size:9.2px;color:#404040;transform:scaleX(0.7332);transform-origin:left center;">0014</span>
<span class="t" style="left:880.95px;top:213.35px;font-size:9.2px;color:#404040;transform:scaleX(0.7332);transform-origin:left center;">0160</span>
<span class="t" style="left:921.50px;top:213.35px;font-size:9.2px;color:#404040;transform:scaleX(0.7332);transform-origin:left center;">0160</span>
<div class="r" style="left:949.8px;top:210.54px;width:43.5px;height:12.61px;overflow:hidden;">
<span class="t" style="left:30.19px;top:2.81px;font-size:9.2px;color:#404040;transform:scaleX(0.7326);transform-origin:left center;">(25.0</span>
</div>
<span class="t" style="left:291.00px;top:225.96px;font-size:9.2px;color:#404040;transform:scaleX(0.7332);transform-origin:left center;">2015</span>
<span class="t" style="left:331.15px;top:225.96px;font-size:9.2px;color:#404040;transform:scaleX(0.7332);transform-origin:left center;">2015</span>
<span class="t" style="left:376.47px;top:225.96px;font-size:9.2px;color:#404040;transform:scaleX(0.7332);transform-origin:left center;">4</span>
<span class="t" style="left:407.20px;top:225.96px;font-size:9.2px;color:#404040;transform:scaleX(0.7332);transform-origin:left center;">3500</span>
<span class="t" style="left:441.74px;top:225.96px;font-size:9.2px;color:#404040;transform:scaleX(0.6868);transform-origin:left center;">PY1409B3</span>
<span class="t" style="left:493.62px;top:225.96px;font-size:9.2px;color:#404040;transform:scaleX(0.7332);transform-origin:left center;">750</span>
<span class="t" style="left:528.67px;top:225.96px;font-size:9.2px;color:#404040;transform:scaleX(0.7332);transform-origin:left center;">20200</span>
<span class="t" style="left:577.65px;top:225.96px;font-size:9.2px;color:#404040;transform:scaleX(0.7332);transform-origin:left center;">0100</span>
<span class="t" style="left:623.00px;top:225.96px;font-size:9.2px;color:#404040;transform:scaleX(0.7332);transform-origin:left center;">0100</span>
<span class="t" style="left:665.05px;top:225.96px;font-size:9.2px;color:#404040;transform:scaleX(0.7332);transform-origin:left center;">2020</span>
<span class="t" style="left:711.65px;top:225.96px;font-size:9.2px;color:#404040;transform:scaleX(0.6306);transform-origin:left center;">SUPP</span>
<span class="t" style="left:758.54px;top:225.96px;font-size:9.2px;color:#404040;transform:scaleX(0.6518);transform-origin:left center;">SUPT2</span>
<span class="t" style="left:805.10px;top:225.96px;font-size:9.2px;color:#404040;transform:scaleX(0.7332);transform-origin:left center;">01</span>
<span class="t" style="left:839.60px;top:225.96px;font-size:9.2px;color:#404040;transform:scaleX(0.7332);transform-origin:left center;">0014</span>
<span class="t" style="left:880.95px;top:225.96px;font-size:9.2px;color:#404040;transform:scaleX(0.7332);transform-origin:left center;">0160</span>
<span class="t" style="left:921.50px;top:225.96px;font-size:9.2px;color:#404040;transform:scaleX(0.7332);transform-origin:left center;">0160</span>
<div class="r" style="left:949.8px;top:223.15px;width:43.5px;height:12.61px;overflow:hidden;">
<span class="t" style="left:32.43px;top:2.81px;font-size:9.2px;color:#404040;transform:scaleX(0.7327);transform-origin:left center;">25.0</span>
</div>
<span class="t" style="left:291.00px;top:238.57px;font-size:9.2px;color:#404040;transform:scaleX(0.7332);transform-origin:left center;">2015</span>
<span class="t" style="left:331.15px;top:238.57px;font-size:9.2px;color:#404040;transform:scaleX(0.7332);transform-origin:left center;">2015</span>
<span class="t" style="left:376.47px;top:238.57px;font-size:9.2px;color:#404040;transform:scaleX(0.7332);transform-origin:left center;">4</span>
<span class="t" style="left:407.20px;top:238.57px;font-size:9.2px;color:#404040;transform:scaleX(0.7332);transform-origin:left center;">3500</span>
<span class="t" style="left:441.78px;top:238.57px;font-size:9.2px;color:#404040;transform:scaleX(0.6771);transform-origin:left center;">PY1409C5</span>
<span class="t" style="left:493.62px;top:238.57px;font-size:9.2px;color:#404040;transform:scaleX(0.7332);transform-origin:left center;">751</span>
<span class="t" style="left:528.67px;top:238.57px;font-size:9.2px;color:#404040;transform:scaleX(0.7332);transform-origin:left center;">20200</span>
<span class="t" style="left:577.65px;top:238.57px;font-size:9.2px;color:#404040;transform:scaleX(0.7332);transform-origin:left center;">0100</span>
<span class="t" style="left:623.00px;top:238.57px;font-size:9.2px;color:#404040;transform:scaleX(0.7332);transform-origin:left center;">0100</span>
<span class="t" style="left:665.05px;top:238.57px;font-size:9.2px;color:#404040;transform:scaleX(0.7332);transform-origin:left center;">2020</span>
<span class="t" style="left:711.65px;top:238.57px;font-size:9.2px;color:#404040;transform:scaleX(0.6306);transform-origin:left center;">SUPP</span>
<span class="t" style="left:758.54px;top:238.57px;font-size:9.2px;color:#404040;transform:scaleX(0.6518);transform-origin:left center;">SUPT2</span>
<span class="t" style="left:805.10px;top:238.57px;font-size:9.2px;color:#404040;transform:scaleX(0.7332);transform-origin:left center;">01</span>
<span class="t" style="left:839.60px;top:238.57px;font-size:9.2px;color:#404040;transform:scaleX(0.7332);transform-origin:left center;">0014</span>
<span class="t" style="left:880.95px;top:238.57px;font-size:9.2px;color:#404040;transform:scaleX(0.7332);transform-origin:left center;">0160</span>
<span class="t" style="left:921.50px;top:238.57px;font-size:9.2px;color:#404040;transform:scaleX(0.7332);transform-origin:left center;">0160</span>
<div class="r" style="left:949.8px;top:235.76px;width:43.5px;height:12.61px;overflow:hidden;">
<span class="t" style="left:30.19px;top:2.81px;font-size:9.2px;color:#404040;transform:scaleX(0.7326);transform-origin:left center;">(25.0</span>
</div>
<span class="t" style="left:291.00px;top:251.18px;font-size:9.2px;color:#404040;transform:scaleX(0.7332);transform-origin:left center;">2015</span>
<span class="t" style="left:331.15px;top:251.18px;font-size:9.2px;color:#404040;transform:scaleX(0.7332);transform-origin:left center;">2015</span>
<span class="t" style="left:376.47px;top:251.18px;font-size:9.2px;color:#404040;transform:scaleX(0.7332);transform-origin:left center;">4</span>
<span class="t" style="left:407.20px;top:251.18px;font-size:9.2px;color:#404040;transform:scaleX(0.7332);transform-origin:left center;">3500</span>
<span class="t" style="left:441.74px;top:251.18px;font-size:9.2px;color:#404040;transform:scaleX(0.6868);transform-origin:left center;">PY1410B3</span>
<span class="t" style="left:493.62px;top:251.18px;font-size:9.2px;color:#404040;transform:scaleX(0.7332);transform-origin:left center;">750</span>
<span class="t" style="left:528.67px;top:251.18px;font-size:9.2px;color:#404040;transform:scaleX(0.7332);transform-origin:left center;">20200</span>
<span class="t" style="left:577.65px;top:251.18px;font-size:9.2px;color:#404040;transform:scaleX(0.7332);transform-origin:left center;">0100</span>
<span class="t" style="left:623.00px;top:251.18px;font-size:9.2px;color:#404040;transform:scaleX(0.7332);transform-origin:left center;">0100</span>
<span class="t" style="left:665.05px;top:251.18px;font-size:9.2px;color:#404040;transform:scaleX(0.7332);transform-origin:left center;">2020</span>
<span class="t" style="left:711.65px;top:251.18px;font-size:9.2px;color:#404040;transform:scaleX(0.6306);transform-origin:left center;">SUPP</span>
<span class="t" style="left:758.54px;top:251.18px;font-size:9.2px;color:#404040;transform:scaleX(0.6518);transform-origin:left center;">SUPT2</span>
<span class="t" style="left:805.10px;top:251.18px;font-size:9.2px;color:#404040;transform:scaleX(0.7332);transform-origin:left center;">01</span>
<span class="t" style="left:839.60px;top:251.18px;font-size:9.2px;color:#404040;transform:scaleX(0.7332);transform-origin:left center;">0014</span>
<span class="t" style="left:880.95px;top:251.18px;font-size:9.2px;color:#404040;transform:scaleX(0.7332);transform-origin:left center;">0160</span>
<span class="t" style="left:921.50px;top:251.18px;font-size:9.2px;color:#404040;transform:scaleX(0.7332);transform-origin:left center;">0160</span>
<div class="r" style="left:949.8px;top:248.37px;width:43.5px;height:12.61px;overflow:hidden;">
<span class="t" style="left:32.43px;top:2.81px;font-size:9.2px;color:#404040;transform:scaleX(0.7327);transform-origin:left center;">25.0</span>
</div>
<span class="t" style="left:291.00px;top:263.79px;font-size:9.2px;color:#404040;transform:scaleX(0.7332);transform-origin:left center;">2015</span>
<span class="t" style="left:331.15px;top:263.79px;font-size:9.2px;color:#404040;transform:scaleX(0.7332);transform-origin:left center;">2015</span>
<span class="t" style="left:376.47px;top:263.79px;font-size:9.2px;color:#404040;transform:scaleX(0.7332);transform-origin:left center;">4</span>
<span class="t" style="left:407.20px;top:263.79px;font-size:9.2px;color:#404040;transform:scaleX(0.7332);transform-origin:left center;">3500</span>
<span class="t" style="left:441.78px;top:263.79px;font-size:9.2px;color:#404040;transform:scaleX(0.6771);transform-origin:left center;">PY1410C5</span>
<span class="t" style="left:493.62px;top:263.79px;font-size:9.2px;color:#404040;transform:scaleX(0.7332);transform-origin:left center;">751</span>
<span class="t" style="left:528.67px;top:263.79px;font-size:9.2px;color:#404040;transform:scaleX(0.7332);transform-origin:left center;">20200</span>
<span class="t" style="left:577.65px;top:263.79px;font-size:9.2px;color:#404040;transform:scaleX(0.7332);transform-origin:left center;">0100</span>
<span class="t" style="left:623.00px;top:263.79px;font-size:9.2px;color:#404040;transform:scaleX(0.7332);transform-origin:left center;">0100</span>
<span class="t" style="left:665.05px;top:263.79px;font-size:9.2px;color:#404040;transform:scaleX(0.7332);transform-origin:left center;">2020</span>
<span class="t" style="left:711.65px;top:263.79px;font-size:9.2px;color:#404040;transform:scaleX(0.6306);transform-origin:left center;">SUPP</span>
<span class="t" style="left:758.54px;top:263.79px;font-size:9.2px;color:#404040;transform:scaleX(0.6518);transform-origin:left center;">SUPT2</span>
<span class="t" style="left:805.10px;top:263.79px;font-size:9.2px;color:#404040;transform:scaleX(0.7332);transform-origin:left center;">01</span>
<span class="t" style="left:839.60px;top:263.79px;font-size:9.2px;color:#404040;transform:scaleX(0.7332);transform-origin:left center;">0014</span>
<span class="t" style="left:880.95px;top:263.79px;font-size:9.2px;color:#404040;transform:scaleX(0.7332);transform-origin:left center;">0160</span>
<span class="t" style="left:921.50px;top:263.79px;font-size:9.2px;color:#404040;transform:scaleX(0.7332);transform-origin:left center;">0160</span>
<div class="r" style="left:949.8px;top:260.98px;width:43.5px;height:12.61px;overflow:hidden;">
<span class="t" style="left:30.19px;top:2.81px;font-size:9.2px;color:#404040;transform:scaleX(0.7326);transform-origin:left center;">(25.0</span>
</div>
<span class="t" style="left:291.00px;top:276.40px;font-size:9.2px;color:#404040;transform:scaleX(0.7332);transform-origin:left center;">2015</span>
<span class="t" style="left:331.15px;top:276.40px;font-size:9.2px;color:#404040;transform:scaleX(0.7332);transform-origin:left center;">2015</span>
<span class="t" style="left:374.60px;top:276.40px;font-size:9.2px;color:#404040;transform:scaleX(0.7857);transform-origin:left center;">11</span>
<span class="t" style="left:407.20px;top:276.40px;font-size:9.2px;color:#404040;transform:scaleX(0.7332);transform-origin:left center;">3500</span>
<span class="t" style="left:441.74px;top:276.40px;font-size:9.2px;color:#404040;transform:scaleX(0.6976);transform-origin:left center;">PY1411B3</span>
<span class="t" style="left:493.62px;top:276.40px;font-size:9.2px;color:#404040;transform:scaleX(0.7332);transform-origin:left center;">750</span>
<span class="t" style="left:528.67px;top:276.40px;font-size:9.2px;color:#404040;transform:scaleX(0.7332);transform-origin:left center;">20200</span>
<span class="t" style="left:577.65px;top:276.40px;font-size:9.2px;color:#404040;transform:scaleX(0.7332);transform-origin:left center;">0100</span>
<span class="t" style="left:623.00px;top:276.40px;font-size:9.2px;color:#404040;transform:scaleX(0.7332);transform-origin:left center;">0100</span>
<span class="t" style="left:665.05px;top:276.40px;font-size:9.2px;color:#404040;transform:scaleX(0.7332);transform-origin:left center;">2020</span>
<span class="t" style="left:711.65px;top:276.40px;font-size:9.2px;color:#404040;transform:scaleX(0.6306);transform-origin:left center;">SUPP</span>
<span class="t" style="left:758.54px;top:276.40px;font-size:9.2px;color:#404040;transform:scaleX(0.6518);transform-origin:left center;">SUPT2</span>
<span class="t" style="left:805.10px;top:276.40px;font-size:9.2px;color:#404040;transform:scaleX(0.7332);transform-origin:left center;">01</span>
<span class="t" style="left:839.60px;top:276.40px;font-size:9.2px;color:#404040;transform:scaleX(0.7332);transform-origin:left center;">0014</span>
<span class="t" style="left:880.95px;top:276.40px;font-size:9.2px;color:#404040;transform:scaleX(0.7332);transform-origin:left center;">0160</span>
<span class="t" style="left:921.50px;top:276.40px;font-size:9.2px;color:#404040;transform:scaleX(0.7332);transform-origin:left center;">0160</span>
<div class="r" style="left:949.8px;top:273.59px;width:43.5px;height:12.61px;overflow:hidden;">
<span class="t" style="left:32.43px;top:2.81px;font-size:9.2px;color:#404040;transform:scaleX(0.7327);transform-origin:left center;">25.0</span>
</div>
<span class="t" style="left:291.00px;top:289.01px;font-size:9.2px;color:#404040;transform:scaleX(0.7332);transform-origin:left center;">2015</span>
<span class="t" style="left:331.15px;top:289.01px;font-size:9.2px;color:#404040;transform:scaleX(0.7332);transform-origin:left center;">2015</span>
<span class="t" style="left:374.60px;top:289.01px;font-size:9.2px;color:#404040;transform:scaleX(0.7857);transform-origin:left center;">11</span>
<span class="t" style="left:407.20px;top:289.01px;font-size:9.2px;color:#404040;transform:scaleX(0.7332);transform-origin:left center;">3500</span>
<span class="t" style="left:441.78px;top:289.01px;font-size:9.2px;color:#404040;transform:scaleX(0.6877);transform-origin:left center;">PY1411C5</span>
<span class="t" style="left:493.62px;top:289.01px;font-size:9.2px;color:#404040;transform:scaleX(0.7332);transform-origin:left center;">751</span>
<span class="t" style="left:528.67px;top:289.01px;font-size:9.2px;color:#404040;transform:scaleX(0.7332);transform-origin:left center;">20200</span>
<span class="t" style="left:577.65px;top:289.01px;font-size:9.2px;color:#404040;transform:scaleX(0.7332);transform-origin:left center;">0100</span>
<span class="t" style="left:623.00px;top:289.01px;font-size:9.2px;color:#404040;transform:scaleX(0.7332);transform-origin:left center;">0100</span>
<span class="t" style="left:665.05px;top:289.01px;font-size:9.2px;color:#404040;transform:scaleX(0.7332);transform-origin:left center;">2020</span>
<span class="t" style="left:711.65px;top:289.01px;font-size:9.2px;color:#404040;transform:scaleX(0.6306);transform-origin:left center;">SUPP</span>
<span class="t" style="left:758.54px;top:289.01px;font-size:9.2px;color:#404040;transform:scaleX(0.6518);transform-origin:left center;">SUPT2</span>
<span class="t" style="left:805.10px;top:289.01px;font-size:9.2px;color:#404040;transform:scaleX(0.7332);transform-origin:left center;">01</span>
<span class="t" style="left:839.60px;top:289.01px;font-size:9.2px;color:#404040;transform:scaleX(0.7332);transform-origin:left center;">0014</span>
<span class="t" style="left:880.95px;top:289.01px;font-size:9.2px;color:#404040;transform:scaleX(0.7332);transform-origin:left center;">0160</span>
<span class="t" style="left:921.50px;top:289.01px;font-size:9.2px;color:#404040;transform:scaleX(0.7332);transform-origin:left center;">0160</span>
<div class="r" style="left:949.8px;top:286.20px;width:43.5px;height:12.61px;overflow:hidden;">
<span class="t" style="left:30.19px;top:2.81px;font-size:9.2px;color:#404040;transform:scaleX(0.7326);transform-origin:left center;">(25.0</span>
</div>
<span class="t" style="left:291.00px;top:301.62px;font-size:9.2px;color:#404040;transform:scaleX(0.7332);transform-origin:left center;">2015</span>
<span class="t" style="left:331.15px;top:301.62px;font-size:9.2px;color:#404040;transform:scaleX(0.7332);transform-origin:left center;">2015</span>
<span class="t" style="left:376.47px;top:301.62px;font-size:9.2px;color:#404040;transform:scaleX(0.7332);transform-origin:left center;">5</span>
<span class="t" style="left:407.20px;top:301.62px;font-size:9.2px;color:#404040;transform:scaleX(0.7332);transform-origin:left center;">3500</span>
<span class="t" style="left:441.74px;top:301.62px;font-size:9.2px;color:#404040;transform:scaleX(0.6868);transform-origin:left center;">PY1412B3</span>
<span class="t" style="left:493.62px;top:301.62px;font-size:9.2px;color:#404040;transform:scaleX(0.7332);transform-origin:left center;">750</span>
<span class="t" style="left:528.67px;top:301.62px;font-size:9.2px;color:#404040;transform:scaleX(0.7332);transform-origin:left center;">20200</span>
<span class="t" style="left:577.65px;top:301.62px;font-size:9.2px;color:#404040;transform:scaleX(0.7332);transform-origin:left center;">0100</span>
<span class="t" style="left:623.00px;top:301.62px;font-size:9.2px;color:#404040;transform:scaleX(0.7332);transform-origin:left center;">0100</span>
<span class="t" style="left:665.05px;top:301.62px;font-size:9.2px;color:#404040;transform:scaleX(0.7332);transform-origin:left center;">2020</span>
<span class="t" style="left:711.65px;top:301.62px;font-size:9.2px;color:#404040;transform:scaleX(0.6306);transform-origin:left center;">SUPP</span>
<span class="t" style="left:758.54px;top:301.62px;font-size:9.2px;color:#404040;transform:scaleX(0.6518);transform-origin:left center;">SUPT2</span>
<span class="t" style="left:805.10px;top:301.62px;font-size:9.2px;color:#404040;transform:scaleX(0.7332);transform-origin:left center;">01</span>
<span class="t" style="left:839.60px;top:301.62px;font-size:9.2px;color:#404040;transform:scaleX(0.7332);transform-origin:left center;">0014</span>
<span class="t" style="left:880.95px;top:301.62px;font-size:9.2px;color:#404040;transform:scaleX(0.7332);transform-origin:left center;">0160</span>
<span class="t" style="left:921.50px;top:301.62px;font-size:9.2px;color:#404040;transform:scaleX(0.7332);transform-origin:left center;">0160</span>
<div class="r" style="left:949.8px;top:298.81px;width:43.5px;height:12.61px;overflow:hidden;">
<span class="t" style="left:32.43px;top:2.81px;font-size:9.2px;color:#404040;transform:scaleX(0.7327);transform-origin:left center;">25.0</span>
</div>
<span class="t" style="left:291.00px;top:314.23px;font-size:9.2px;color:#404040;transform:scaleX(0.7332);transform-origin:left center;">2015</span>
<span class="t" style="left:331.15px;top:314.23px;font-size:9.2px;color:#404040;transform:scaleX(0.7332);transform-origin:left center;">2015</span>
<span class="t" style="left:376.47px;top:314.23px;font-size:9.2px;color:#404040;transform:scaleX(0.7332);transform-origin:left center;">5</span>
<span class="t" style="left:407.20px;top:314.23px;font-size:9.2px;color:#404040;transform:scaleX(0.7332);transform-origin:left center;">3500</span>
<span class="t" style="left:441.78px;top:314.23px;font-size:9.2px;color:#404040;transform:scaleX(0.6771);transform-origin:left center;">PY1412C5</span>
<span class="t" style="left:493.62px;top:314.23px;font-size:9.2px;color:#404040;transform:scaleX(0.7332);transform-origin:left center;">751</span>
<span class="t" style="left:528.67px;top:314.23px;font-size:9.2px;color:#404040;transform:scaleX(0.7332);transform-origin:left center;">20200</span>
<span class="t" style="left:577.65px;top:314.23px;font-size:9.2px;color:#404040;transform:scaleX(0.7332);transform-origin:left center;">0100</span>
<span class="t" style="left:623.00px;top:314.23px;font-size:9.2px;color:#404040;transform:scaleX(0.7332);transform-origin:left center;">0100</span>
<span class="t" style="left:665.05px;top:314.23px;font-size:9.2px;color:#404040;transform:scaleX(0.7332);transform-origin:left center;">2020</span>
<span class="t" style="left:711.65px;top:314.23px;font-size:9.2px;color:#404040;transform:scaleX(0.6306);transform-origin:left center;">SUPP</span>
<span class="t" style="left:758.54px;top:314.23px;font-size:9.2px;color:#404040;transform:scaleX(0.6518);transform-origin:left center;">SUPT2</span>
<span class="t" style="left:805.10px;top:314.23px;font-size:9.2px;color:#404040;transform:scaleX(0.7332);transform-origin:left center;">01</span>
<span class="t" style="left:839.60px;top:314.23px;font-size:9.2px;color:#404040;transform:scaleX(0.7332);transform-origin:left center;">0014</span>
<span class="t" style="left:880.95px;top:314.23px;font-size:9.2px;color:#404040;transform:scaleX(0.7332);transform-origin:left center;">0160</span>
<span class="t" style="left:921.50px;top:314.23px;font-size:9.2px;color:#404040;transform:scaleX(0.7332);transform-origin:left center;">0160</span>
<div class="r" style="left:949.8px;top:311.42px;width:43.5px;height:12.61px;overflow:hidden;">
<span class="t" style="left:30.19px;top:2.81px;font-size:9.2px;color:#404040;transform:scaleX(0.7326);transform-origin:left center;">(25.0</span>
</div>
<span class="t" style="left:291.00px;top:326.84px;font-size:9.2px;color:#404040;transform:scaleX(0.7332);transform-origin:left center;">2015</span>
<span class="t" style="left:331.15px;top:326.84px;font-size:9.2px;color:#404040;transform:scaleX(0.7332);transform-origin:left center;">2015</span>
<span class="t" style="left:376.47px;top:326.84px;font-size:9.2px;color:#404040;transform:scaleX(0.7332);transform-origin:left center;">6</span>
<span class="t" style="left:407.20px;top:326.84px;font-size:9.2px;color:#404040;transform:scaleX(0.7332);transform-origin:left center;">3500</span>
<span class="t" style="left:441.74px;top:326.84px;font-size:9.2px;color:#404040;transform:scaleX(0.6868);transform-origin:left center;">PY1501B3</span>
<span class="t" style="left:493.62px;top:326.84px;font-size:9.2px;color:#404040;transform:scaleX(0.7332);transform-origin:left center;">750</span>
<span class="t" style="left:528.67px;top:326.84px;font-size:9.2px;color:#404040;transform:scaleX(0.7332);transform-origin:left center;">20200</span>
<span class="t" style="left:577.65px;top:326.84px;font-size:9.2px;color:#404040;transform:scaleX(0.7332);transform-origin:left center;">0100</span>
<span class="t" style="left:623.00px;top:326.84px;font-size:9.2px;color:#404040;transform:scaleX(0.7332);transform-origin:left center;">0100</span>
<span class="t" style="left:665.05px;top:326.84px;font-size:9.2px;color:#404040;transform:scaleX(0.7332);transform-origin:left center;">2020</span>
<span class="t" style="left:711.65px;top:326.84px;font-size:9.2px;color:#404040;transform:scaleX(0.6306);transform-origin:left center;">SUPP</span>
<span class="t" style="left:758.54px;top:326.84px;font-size:9.2px;color:#404040;transform:scaleX(0.6518);transform-origin:left center;">SUPT2</span>
<span class="t" style="left:805.10px;top:326.84px;font-size:9.2px;color:#404040;transform:scaleX(0.7332);transform-origin:left center;">01</span>
<span class="t" style="left:839.60px;top:326.84px;font-size:9.2px;color:#404040;transform:scaleX(0.7332);transform-origin:left center;">0014</span>
<span class="t" style="left:880.95px;top:326.84px;font-size:9.2px;color:#404040;transform:scaleX(0.7332);transform-origin:left center;">0160</span>
<span class="t" style="left:921.50px;top:326.84px;font-size:9.2px;color:#404040;transform:scaleX(0.7332);transform-origin:left center;">0160</span>
<div class="r" style="left:949.8px;top:324.03px;width:43.5px;height:12.61px;overflow:hidden;">
<span class="t" style="left:32.43px;top:2.81px;font-size:9.2px;color:#404040;transform:scaleX(0.7327);transform-origin:left center;">25.0</span>
</div>
<span class="t" style="left:291.00px;top:339.45px;font-size:9.2px;color:#404040;transform:scaleX(0.7332);transform-origin:left center;">2015</span>
<span class="t" style="left:331.15px;top:339.45px;font-size:9.2px;color:#404040;transform:scaleX(0.7332);transform-origin:left center;">2015</span>
<span class="t" style="left:376.47px;top:339.45px;font-size:9.2px;color:#404040;transform:scaleX(0.7332);transform-origin:left center;">6</span>
<span class="t" style="left:407.20px;top:339.45px;font-size:9.2px;color:#404040;transform:scaleX(0.7332);transform-origin:left center;">3500</span>
<span class="t" style="left:441.78px;top:339.45px;font-size:9.2px;color:#404040;transform:scaleX(0.6771);transform-origin:left center;">PY1501C5</span>
<span class="t" style="left:493.62px;top:339.45px;font-size:9.2px;color:#404040;transform:scaleX(0.7332);transform-origin:left center;">751</span>
<span class="t" style="left:528.67px;top:339.45px;font-size:9.2px;color:#404040;transform:scaleX(0.7332);transform-origin:left center;">20200</span>
<span class="t" style="left:577.65px;top:339.45px;font-size:9.2px;color:#404040;transform:scaleX(0.7332);transform-origin:left center;">0100</span>
<span class="t" style="left:623.00px;top:339.45px;font-size:9.2px;color:#404040;transform:scaleX(0.7332);transform-origin:left center;">0100</span>
<span class="t" style="left:665.05px;top:339.45px;font-size:9.2px;color:#404040;transform:scaleX(0.7332);transform-origin:left center;">2020</span>
<span class="t" style="left:711.65px;top:339.45px;font-size:9.2px;color:#404040;transform:scaleX(0.6306);transform-origin:left center;">SUPP</span>
<span class="t" style="left:758.54px;top:339.45px;font-size:9.2px;color:#404040;transform:scaleX(0.6518);transform-origin:left center;">SUPT2</span>
<span class="t" style="left:805.10px;top:339.45px;font-size:9.2px;color:#404040;transform:scaleX(0.7332);transform-origin:left center;">01</span>
<span class="t" style="left:839.60px;top:339.45px;font-size:9.2px;color:#404040;transform:scaleX(0.7332);transform-origin:left center;">0014</span>
<span class="t" style="left:880.95px;top:339.45px;font-size:9.2px;color:#404040;transform:scaleX(0.7332);transform-origin:left center;">0160</span>
<span class="t" style="left:921.50px;top:339.45px;font-size:9.2px;color:#404040;transform:scaleX(0.7332);transform-origin:left center;">0160</span>
<div class="r" style="left:949.8px;top:336.64px;width:43.5px;height:12.61px;overflow:hidden;">
<span class="t" style="left:30.19px;top:2.81px;font-size:9.2px;color:#404040;transform:scaleX(0.7326);transform-origin:left center;">(25.0</span>
</div>
<span class="t" style="left:291.00px;top:352.06px;font-size:9.2px;color:#404040;transform:scaleX(0.7332);transform-origin:left center;">2015</span>
<span class="t" style="left:331.15px;top:352.06px;font-size:9.2px;color:#404040;transform:scaleX(0.7332);transform-origin:left center;">2015</span>
<span class="t" style="left:376.47px;top:352.06px;font-size:9.2px;color:#404040;transform:scaleX(0.7332);transform-origin:left center;">7</span>
<span class="t" style="left:407.20px;top:352.06px;font-size:9.2px;color:#404040;transform:scaleX(0.7332);transform-origin:left center;">3500</span>
<span class="t" style="left:441.74px;top:352.06px;font-size:9.2px;color:#404040;transform:scaleX(0.6868);transform-origin:left center;">PY1502B3</span>
<span class="t" style="left:493.62px;top:352.06px;font-size:9.2px;color:#404040;transform:scaleX(0.7332);transform-origin:left center;">750</span>
<span class="t" style="left:528.67px;top:352.06px;font-size:9.2px;color:#404040;transform:scaleX(0.7332);transform-origin:left center;">20200</span>
<span class="t" style="left:577.65px;top:352.06px;font-size:9.2px;color:#404040;transform:scaleX(0.7332);transform-origin:left center;">0100</span>
<span class="t" style="left:623.00px;top:352.06px;font-size:9.2px;color:#404040;transform:scaleX(0.7332);transform-origin:left center;">0100</span>
<span class="t" style="left:665.05px;top:352.06px;font-size:9.2px;color:#404040;transform:scaleX(0.7332);transform-origin:left center;">2020</span>
<span class="t" style="left:711.65px;top:352.06px;font-size:9.2px;color:#404040;transform:scaleX(0.6306);transform-origin:left center;">SUPP</span>
<span class="t" style="left:758.54px;top:352.06px;font-size:9.2px;color:#404040;transform:scaleX(0.6518);transform-origin:left center;">SUPT2</span>
<span class="t" style="left:805.10px;top:352.06px;font-size:9.2px;color:#404040;transform:scaleX(0.7332);transform-origin:left center;">01</span>
<span class="t" style="left:839.60px;top:352.06px;font-size:9.2px;color:#404040;transform:scaleX(0.7332);transform-origin:left center;">0014</span>
<span class="t" style="left:880.95px;top:352.06px;font-size:9.2px;color:#404040;transform:scaleX(0.7332);transform-origin:left center;">0160</span>
<span class="t" style="left:921.50px;top:352.06px;font-size:9.2px;color:#404040;transform:scaleX(0.7332);transform-origin:left center;">0160</span>
<div class="r" style="left:949.8px;top:349.25px;width:43.5px;height:12.61px;overflow:hidden;">
<span class="t" style="left:32.43px;top:2.81px;font-size:9.2px;color:#404040;transform:scaleX(0.7327);transform-origin:left center;">25.0</span>
</div>
<span class="t" style="left:291.00px;top:364.67px;font-size:9.2px;color:#404040;transform:scaleX(0.7332);transform-origin:left center;">2015</span>
<span class="t" style="left:331.15px;top:364.67px;font-size:9.2px;color:#404040;transform:scaleX(0.7332);transform-origin:left center;">2015</span>
<span class="t" style="left:376.47px;top:364.67px;font-size:9.2px;color:#404040;transform:scaleX(0.7332);transform-origin:left center;">7</span>
<span class="t" style="left:407.20px;top:364.67px;font-size:9.2px;color:#404040;transform:scaleX(0.7332);transform-origin:left center;">3500</span>
<span class="t" style="left:441.78px;top:364.67px;font-size:9.2px;color:#404040;transform:scaleX(0.6771);transform-origin:left center;">PY1502C5</span>
<span class="t" style="left:493.62px;top:364.67px;font-size:9.2px;color:#404040;transform:scaleX(0.7332);transform-origin:left center;">751</span>
<span class="t" style="left:528.67px;top:364.67px;font-size:9.2px;color:#404040;transform:scaleX(0.7332);transform-origin:left center;">20200</span>
<span class="t" style="left:577.65px;top:364.67px;font-size:9.2px;color:#404040;transform:scaleX(0.7332);transform-origin:left center;">0100</span>
<span class="t" style="left:623.00px;top:364.67px;font-size:9.2px;color:#404040;transform:scaleX(0.7332);transform-origin:left center;">0100</span>
<span class="t" style="left:665.05px;top:364.67px;font-size:9.2px;color:#404040;transform:scaleX(0.7332);transform-origin:left center;">2020</span>
<span class="t" style="left:711.65px;top:364.67px;font-size:9.2px;color:#404040;transform:scaleX(0.6306);transform-origin:left center;">SUPP</span>
<span class="t" style="left:758.54px;top:364.67px;font-size:9.2px;color:#404040;transform:scaleX(0.6518);transform-origin:left center;">SUPT2</span>
<span class="t" style="left:805.10px;top:364.67px;font-size:9.2px;color:#404040;transform:scaleX(0.7332);transform-origin:left center;">01</span>
<span class="t" style="left:839.60px;top:364.67px;font-size:9.2px;color:#404040;transform:scaleX(0.7332);transform-origin:left center;">0014</span>
<span class="t" style="left:880.95px;top:364.67px;font-size:9.2px;color:#404040;transform:scaleX(0.7332);transform-origin:left center;">0160</span>
<span class="t" style="left:921.50px;top:364.67px;font-size:9.2px;color:#404040;transform:scaleX(0.7332);transform-origin:left center;">0160</span>
<div class="r" style="left:949.8px;top:361.86px;width:43.5px;height:12.61px;overflow:hidden;">
<span class="t" style="left:30.19px;top:2.81px;font-size:9.2px;color:#404040;transform:scaleX(0.7326);transform-origin:left center;">(25.0</span>
</div>
<span class="t" style="left:291.00px;top:377.28px;font-size:9.2px;color:#404040;transform:scaleX(0.7332);transform-origin:left center;">2015</span>
<span class="t" style="left:331.15px;top:377.28px;font-size:9.2px;color:#404040;transform:scaleX(0.7332);transform-origin:left center;">2015</span>
<span class="t" style="left:376.47px;top:377.28px;font-size:9.2px;color:#404040;transform:scaleX(0.7332);transform-origin:left center;">9</span>
<span class="t" style="left:407.20px;top:377.28px;font-size:9.2px;color:#404040;transform:scaleX(0.7332);transform-origin:left center;">3500</span>
<span class="t" style="left:441.74px;top:377.28px;font-size:9.2px;color:#404040;transform:scaleX(0.6868);transform-origin:left center;">PY1503B3</span>
<span class="t" style="left:493.62px;top:377.28px;font-size:9.2px;color:#404040;transform:scaleX(0.7332);transform-origin:left center;">750</span>
<span class="t" style="left:528.67px;top:377.28px;font-size:9.2px;color:#404040;transform:scaleX(0.7332);transform-origin:left center;">20200</span>
<span class="t" style="left:577.65px;top:377.28px;font-size:9.2px;color:#404040;transform:scaleX(0.7332);transform-origin:left center;">0100</span>
<span class="t" style="left:623.00px;top:377.28px;font-size:9.2px;color:#404040;transform:scaleX(0.7332);transform-origin:left center;">0100</span>
<span class="t" style="left:665.05px;top:377.28px;font-size:9.2px;color:#404040;transform:scaleX(0.7332);transform-origin:left center;">2020</span>
<span class="t" style="left:711.65px;top:377.28px;font-size:9.2px;color:#404040;transform:scaleX(0.6306);transform-origin:left center;">SUPP</span>
<span class="t" style="left:758.54px;top:377.28px;font-size:9.2px;color:#404040;transform:scaleX(0.6518);transform-origin:left center;">SUPT2</span>
<span class="t" style="left:805.10px;top:377.28px;font-size:9.2px;color:#404040;transform:scaleX(0.7332);transform-origin:left center;">01</span>
<span class="t" style="left:839.60px;top:377.28px;font-size:9.2px;color:#404040;transform:scaleX(0.7332);transform-origin:left center;">0014</span>
<span class="t" style="left:880.95px;top:377.28px;font-size:9.2px;color:#404040;transform:scaleX(0.7332);transform-origin:left center;">0160</span>
<span class="t" style="left:921.50px;top:377.28px;font-size:9.2px;color:#404040;transform:scaleX(0.7332);transform-origin:left center;">0160</span>
<div class="r" style="left:949.8px;top:374.47px;width:43.5px;height:12.61px;overflow:hidden;">
<span class="t" style="left:32.43px;top:2.81px;font-size:9.2px;color:#404040;transform:scaleX(0.7327);transform-origin:left center;">25.0</span>
</div>
<span class="t" style="left:291.00px;top:389.89px;font-size:9.2px;color:#404040;transform:scaleX(0.7332);transform-origin:left center;">2015</span>
<span class="t" style="left:331.15px;top:389.89px;font-size:9.2px;color:#404040;transform:scaleX(0.7332);transform-origin:left center;">2015</span>
<span class="t" style="left:376.47px;top:389.89px;font-size:9.2px;color:#404040;transform:scaleX(0.7332);transform-origin:left center;">9</span>
<span class="t" style="left:407.20px;top:389.89px;font-size:9.2px;color:#404040;transform:scaleX(0.7332);transform-origin:left center;">3500</span>
<span class="t" style="left:441.78px;top:389.89px;font-size:9.2px;color:#404040;transform:scaleX(0.6771);transform-origin:left center;">PY1503C5</span>
<span class="t" style="left:493.62px;top:389.89px;font-size:9.2px;color:#404040;transform:scaleX(0.7332);transform-origin:left center;">751</span>
<span class="t" style="left:528.67px;top:389.89px;font-size:9.2px;color:#404040;transform:scaleX(0.7332);transform-origin:left center;">20200</span>
<span class="t" style="left:577.65px;top:389.89px;font-size:9.2px;color:#404040;transform:scaleX(0.7332);transform-origin:left center;">0100</span>
<span class="t" style="left:623.00px;top:389.89px;font-size:9.2px;color:#404040;transform:scaleX(0.7332);transform-origin:left center;">0100</span>
<span class="t" style="left:665.05px;top:389.89px;font-size:9.2px;color:#404040;transform:scaleX(0.7332);transform-origin:left center;">2020</span>
<span class="t" style="left:711.65px;top:389.89px;font-size:9.2px;color:#404040;transform:scaleX(0.6306);transform-origin:left center;">SUPP</span>
<span class="t" style="left:758.54px;top:389.89px;font-size:9.2px;color:#404040;transform:scaleX(0.6518);transform-origin:left center;">SUPT2</span>
<span class="t" style="left:805.10px;top:389.89px;font-size:9.2px;color:#404040;transform:scaleX(0.7332);transform-origin:left center;">01</span>
<span class="t" style="left:839.60px;top:389.89px;font-size:9.2px;color:#404040;transform:scaleX(0.7332);transform-origin:left center;">0014</span>
<span class="t" style="left:880.95px;top:389.89px;font-size:9.2px;color:#404040;transform:scaleX(0.7332);transform-origin:left center;">0160</span>
<span class="t" style="left:921.50px;top:389.89px;font-size:9.2px;color:#404040;transform:scaleX(0.7332);transform-origin:left center;">0160</span>
<div class="r" style="left:949.8px;top:387.08px;width:43.5px;height:12.61px;overflow:hidden;">
<span class="t" style="left:30.19px;top:2.81px;font-size:9.2px;color:#404040;transform:scaleX(0.7326);transform-origin:left center;">(25.0</span>
</div>
<span class="t" style="left:291.00px;top:402.50px;font-size:9.2px;color:#404040;transform:scaleX(0.7332);transform-origin:left center;">2015</span>
<span class="t" style="left:331.15px;top:402.50px;font-size:9.2px;color:#404040;transform:scaleX(0.7332);transform-origin:left center;">2015</span>
<span class="t" style="left:374.60px;top:402.50px;font-size:9.2px;color:#404040;transform:scaleX(0.7332);transform-origin:left center;">10</span>
<span class="t" style="left:407.20px;top:402.50px;font-size:9.2px;color:#404040;transform:scaleX(0.7332);transform-origin:left center;">3500</span>
<span class="t" style="left:441.74px;top:402.50px;font-size:9.2px;color:#404040;transform:scaleX(0.6868);transform-origin:left center;">PY1504B4</span>
<span class="t" style="left:493.62px;top:402.50px;font-size:9.2px;color:#404040;transform:scaleX(0.7332);transform-origin:left center;">750</span>
<span class="t" style="left:528.67px;top:402.50px;font-size:9.2px;color:#404040;transform:scaleX(0.7332);transform-origin:left center;">20200</span>
<span class="t" style="left:577.65px;top:402.50px;font-size:9.2px;color:#404040;transform:scaleX(0.7332);transform-origin:left center;">0100</span>
<span class="t" style="left:623.00px;top:402.50px;font-size:9.2px;color:#404040;transform:scaleX(0.7332);transform-origin:left center;">0100</span>
<span class="t" style="left:665.05px;top:402.50px;font-size:9.2px;color:#404040;transform:scaleX(0.7332);transform-origin:left center;">2020</span>
<span class="t" style="left:711.65px;top:402.50px;font-size:9.2px;color:#404040;transform:scaleX(0.6306);transform-origin:left center;">SUPP</span>
<span class="t" style="left:758.54px;top:402.50px;font-size:9.2px;color:#404040;transform:scaleX(0.6518);transform-origin:left center;">SUPT2</span>
<span class="t" style="left:805.10px;top:402.50px;font-size:9.2px;color:#404040;transform:scaleX(0.7332);transform-origin:left center;">01</span>
<span class="t" style="left:839.60px;top:402.50px;font-size:9.2px;color:#404040;transform:scaleX(0.7332);transform-origin:left center;">0014</span>
<span class="t" style="left:880.95px;top:402.50px;font-size:9.2px;color:#404040;transform:scaleX(0.7332);transform-origin:left center;">0160</span>
<span class="t" style="left:921.50px;top:402.50px;font-size:9.2px;color:#404040;transform:scaleX(0.7332);transform-origin:left center;">0160</span>
<div class="r" style="left:949.8px;top:399.69px;width:43.5px;height:12.61px;overflow:hidden;">
<span class="t" style="left:32.43px;top:2.81px;font-size:9.2px;color:#404040;transform:scaleX(0.7327);transform-origin:left center;">25.0</span>
</div>
<span class="t" style="left:291.00px;top:415.11px;font-size:9.2px;color:#404040;transform:scaleX(0.7332);transform-origin:left center;">2015</span>
<span class="t" style="left:331.15px;top:415.11px;font-size:9.2px;color:#404040;transform:scaleX(0.7332);transform-origin:left center;">2015</span>
<span class="t" style="left:374.60px;top:415.11px;font-size:9.2px;color:#404040;transform:scaleX(0.7332);transform-origin:left center;">10</span>
<span class="t" style="left:407.20px;top:415.11px;font-size:9.2px;color:#404040;transform:scaleX(0.7332);transform-origin:left center;">3500</span>
<span class="t" style="left:441.78px;top:415.11px;font-size:9.2px;color:#404040;transform:scaleX(0.6771);transform-origin:left center;">PY1504C5</span>
<span class="t" style="left:493.62px;top:415.11px;font-size:9.2px;color:#404040;transform:scaleX(0.7332);transform-origin:left center;">751</span>
<span class="t" style="left:528.67px;top:415.11px;font-size:9.2px;color:#404040;transform:scaleX(0.7332);transform-origin:left center;">20200</span>
<span class="t" style="left:577.65px;top:415.11px;font-size:9.2px;color:#404040;transform:scaleX(0.7332);transform-origin:left center;">0100</span>
<span class="t" style="left:623.00px;top:415.11px;font-size:9.2px;color:#404040;transform:scaleX(0.7332);transform-origin:left center;">0100</span>
<span class="t" style="left:665.05px;top:415.11px;font-size:9.2px;color:#404040;transform:scaleX(0.7332);transform-origin:left center;">2020</span>
<span class="t" style="left:711.65px;top:415.11px;font-size:9.2px;color:#404040;transform:scaleX(0.6306);transform-origin:left center;">SUPP</span>
<span class="t" style="left:758.54px;top:415.11px;font-size:9.2px;color:#404040;transform:scaleX(0.6518);transform-origin:left center;">SUPT2</span>
<span class="t" style="left:805.10px;top:415.11px;font-size:9.2px;color:#404040;transform:scaleX(0.7332);transform-origin:left center;">01</span>
<span class="t" style="left:839.60px;top:415.11px;font-size:9.2px;color:#404040;transform:scaleX(0.7332);transform-origin:left center;">0014</span>
<span class="t" style="left:880.95px;top:415.11px;font-size:9.2px;color:#404040;transform:scaleX(0.7332);transform-origin:left center;">0160</span>
<span class="t" style="left:921.50px;top:415.11px;font-size:9.2px;color:#404040;transform:scaleX(0.7332);transform-origin:left center;">0160</span>
<div class="r" style="left:949.8px;top:412.30px;width:43.5px;height:12.61px;overflow:hidden;">
<span class="t" style="left:30.19px;top:2.81px;font-size:9.2px;color:#404040;transform:scaleX(0.7326);transform-origin:left center;">(25.0</span>
</div>
<span class="t" style="left:291.00px;top:427.72px;font-size:9.2px;color:#404040;transform:scaleX(0.7332);transform-origin:left center;">2015</span>
<span class="t" style="left:331.15px;top:427.72px;font-size:9.2px;color:#404040;transform:scaleX(0.7332);transform-origin:left center;">2015</span>
<span class="t" style="left:374.60px;top:427.72px;font-size:9.2px;color:#404040;transform:scaleX(0.7857);transform-origin:left center;">11</span>
<span class="t" style="left:407.20px;top:427.72px;font-size:9.2px;color:#404040;transform:scaleX(0.7332);transform-origin:left center;">3500</span>
<span class="t" style="left:441.74px;top:427.72px;font-size:9.2px;color:#404040;transform:scaleX(0.6868);transform-origin:left center;">PY1505B4</span>
<span class="t" style="left:493.62px;top:427.72px;font-size:9.2px;color:#404040;transform:scaleX(0.7332);transform-origin:left center;">750</span>
<span class="t" style="left:528.67px;top:427.72px;font-size:9.2px;color:#404040;transform:scaleX(0.7332);transform-origin:left center;">20200</span>
<span class="t" style="left:577.65px;top:427.72px;font-size:9.2px;color:#404040;transform:scaleX(0.7332);transform-origin:left center;">0100</span>
<span class="t" style="left:623.00px;top:427.72px;font-size:9.2px;color:#404040;transform:scaleX(0.7332);transform-origin:left center;">0100</span>
<span class="t" style="left:665.05px;top:427.72px;font-size:9.2px;color:#404040;transform:scaleX(0.7332);transform-origin:left center;">2020</span>
<span class="t" style="left:711.65px;top:427.72px;font-size:9.2px;color:#404040;transform:scaleX(0.6306);transform-origin:left center;">SUPP</span>
<span class="t" style="left:758.54px;top:427.72px;font-size:9.2px;color:#404040;transform:scaleX(0.6518);transform-origin:left center;">SUPT2</span>
<span class="t" style="left:805.10px;top:427.72px;font-size:9.2px;color:#404040;transform:scaleX(0.7332);transform-origin:left center;">01</span>
<span class="t" style="left:839.60px;top:427.72px;font-size:9.2px;color:#404040;transform:scaleX(0.7332);transform-origin:left center;">0014</span>
<span class="t" style="left:880.95px;top:427.72px;font-size:9.2px;color:#404040;transform:scaleX(0.7332);transform-origin:left center;">0160</span>
<span class="t" style="left:921.50px;top:427.72px;font-size:9.2px;color:#404040;transform:scaleX(0.7332);transform-origin:left center;">0160</span>
<div class="r" style="left:949.8px;top:424.91px;width:43.5px;height:12.61px;overflow:hidden;">
<span class="t" style="left:32.43px;top:2.81px;font-size:9.2px;color:#404040;transform:scaleX(0.7327);transform-origin:left center;">25.0</span>
</div>
<span class="t" style="left:291.00px;top:440.33px;font-size:9.2px;color:#404040;transform:scaleX(0.7332);transform-origin:left center;">2015</span>
<span class="t" style="left:331.15px;top:440.33px;font-size:9.2px;color:#404040;transform:scaleX(0.7332);transform-origin:left center;">2015</span>
<span class="t" style="left:374.60px;top:440.33px;font-size:9.2px;color:#404040;transform:scaleX(0.7857);transform-origin:left center;">11</span>
<span class="t" style="left:407.20px;top:440.33px;font-size:9.2px;color:#404040;transform:scaleX(0.7332);transform-origin:left center;">3500</span>
<span class="t" style="left:441.78px;top:440.33px;font-size:9.2px;color:#404040;transform:scaleX(0.6771);transform-origin:left center;">PY1505C5</span>
<span class="t" style="left:493.62px;top:440.33px;font-size:9.2px;color:#404040;transform:scaleX(0.7332);transform-origin:left center;">751</span>
<span class="t" style="left:528.67px;top:440.33px;font-size:9.2px;color:#404040;transform:scaleX(0.7332);transform-origin:left center;">20200</span>
<span class="t" style="left:577.65px;top:440.33px;font-size:9.2px;color:#404040;transform:scaleX(0.7332);transform-origin:left center;">0100</span>
<span class="t" style="left:623.00px;top:440.33px;font-size:9.2px;color:#404040;transform:scaleX(0.7332);transform-origin:left center;">0100</span>
<span class="t" style="left:665.05px;top:440.33px;font-size:9.2px;color:#404040;transform:scaleX(0.7332);transform-origin:left center;">2020</span>
<span class="t" style="left:711.65px;top:440.33px;font-size:9.2px;color:#404040;transform:scaleX(0.6306);transform-origin:left center;">SUPP</span>
<span class="t" style="left:758.54px;top:440.33px;font-size:9.2px;color:#404040;transform:scaleX(0.6518);transform-origin:left center;">SUPT2</span>
<span class="t" style="left:805.10px;top:440.33px;font-size:9.2px;color:#404040;transform:scaleX(0.7332);transform-origin:left center;">01</span>
<span class="t" style="left:839.60px;top:440.33px;font-size:9.2px;color:#404040;transform:scaleX(0.7332);transform-origin:left center;">0014</span>
<span class="t" style="left:880.95px;top:440.33px;font-size:9.2px;color:#404040;transform:scaleX(0.7332);transform-origin:left center;">0160</span>
<span class="t" style="left:921.50px;top:440.33px;font-size:9.2px;color:#404040;transform:scaleX(0.7332);transform-origin:left center;">0160</span>
<div class="r" style="left:949.8px;top:437.52px;width:43.5px;height:12.61px;overflow:hidden;">
<span class="t" style="left:30.19px;top:2.81px;font-size:9.2px;color:#404040;transform:scaleX(0.7326);transform-origin:left center;">(25.0</span>
</div>
<span class="t" style="left:291.00px;top:452.94px;font-size:9.2px;color:#404040;transform:scaleX(0.7332);transform-origin:left center;">2015</span>
<span class="t" style="left:331.15px;top:452.94px;font-size:9.2px;color:#404040;transform:scaleX(0.7332);transform-origin:left center;">2015</span>
<span class="t" style="left:374.60px;top:452.94px;font-size:9.2px;color:#404040;transform:scaleX(0.7332);transform-origin:left center;">12</span>
<span class="t" style="left:407.20px;top:452.94px;font-size:9.2px;color:#404040;transform:scaleX(0.7332);transform-origin:left center;">3500</span>
<span class="t" style="left:441.74px;top:452.94px;font-size:9.2px;color:#404040;transform:scaleX(0.6868);transform-origin:left center;">PY1506B4</span>
<span class="t" style="left:493.62px;top:452.94px;font-size:9.2px;color:#404040;transform:scaleX(0.7332);transform-origin:left center;">750</span>
<span class="t" style="left:528.67px;top:452.94px;font-size:9.2px;color:#404040;transform:scaleX(0.7332);transform-origin:left center;">20200</span>
<span class="t" style="left:577.65px;top:452.94px;font-size:9.2px;color:#404040;transform:scaleX(0.7332);transform-origin:left center;">0100</span>
<span class="t" style="left:623.00px;top:452.94px;font-size:9.2px;color:#404040;transform:scaleX(0.7332);transform-origin:left center;">0100</span>
<span class="t" style="left:665.05px;top:452.94px;font-size:9.2px;color:#404040;transform:scaleX(0.7332);transform-origin:left center;">2020</span>
<span class="t" style="left:711.65px;top:452.94px;font-size:9.2px;color:#404040;transform:scaleX(0.6306);transform-origin:left center;">SUPP</span>
<span class="t" style="left:758.54px;top:452.94px;font-size:9.2px;color:#404040;transform:scaleX(0.6518);transform-origin:left center;">SUPT2</span>
<span class="t" style="left:805.10px;top:452.94px;font-size:9.2px;color:#404040;transform:scaleX(0.7332);transform-origin:left center;">01</span>
<span class="t" style="left:839.60px;top:452.94px;font-size:9.2px;color:#404040;transform:scaleX(0.7332);transform-origin:left center;">0014</span>
<span class="t" style="left:880.95px;top:452.94px;font-size:9.2px;color:#404040;transform:scaleX(0.7332);transform-origin:left center;">0160</span>
<span class="t" style="left:921.50px;top:452.94px;font-size:9.2px;color:#404040;transform:scaleX(0.7332);transform-origin:left center;">0160</span>
<div class="r" style="left:949.8px;top:450.13px;width:43.5px;height:12.61px;overflow:hidden;">
<span class="t" style="left:32.43px;top:2.81px;font-size:9.2px;color:#404040;transform:scaleX(0.7327);transform-origin:left center;">25.0</span>
</div>
<span class="t" style="left:291.00px;top:465.55px;font-size:9.2px;color:#404040;transform:scaleX(0.7332);transform-origin:left center;">2015</span>
<span class="t" style="left:331.15px;top:465.55px;font-size:9.2px;color:#404040;transform:scaleX(0.7332);transform-origin:left center;">2015</span>
<span class="t" style="left:374.60px;top:465.55px;font-size:9.2px;color:#404040;transform:scaleX(0.7332);transform-origin:left center;">12</span>
<span class="t" style="left:407.20px;top:465.55px;font-size:9.2px;color:#404040;transform:scaleX(0.7332);transform-origin:left center;">3500</span>
<span class="t" style="left:441.78px;top:465.55px;font-size:9.2px;color:#404040;transform:scaleX(0.6771);transform-origin:left center;">PY1506C6</span>
<span class="t" style="left:493.62px;top:465.55px;font-size:9.2px;color:#404040;transform:scaleX(0.7332);transform-origin:left center;">751</span>
<span class="t" style="left:528.67px;top:465.55px;font-size:9.2px;color:#404040;transform:scaleX(0.7332);transform-origin:left center;">20200</span>
<span class="t" style="left:577.65px;top:465.55px;font-size:9.2px;color:#404040;transform:scaleX(0.7332);transform-origin:left center;">0100</span>
<span class="t" style="left:623.00px;top:465.55px;font-size:9.2px;color:#404040;transform:scaleX(0.7332);transform-origin:left center;">0100</span>
<span class="t" style="left:665.05px;top:465.55px;font-size:9.2px;color:#404040;transform:scaleX(0.7332);transform-origin:left center;">2020</span>
<span class="t" style="left:711.65px;top:465.55px;font-size:9.2px;color:#404040;transform:scaleX(0.6306);transform-origin:left center;">SUPP</span>
<span class="t" style="left:758.54px;top:465.55px;font-size:9.2px;color:#404040;transform:scaleX(0.6518);transform-origin:left center;">SUPT2</span>
<span class="t" style="left:805.10px;top:465.55px;font-size:9.2px;color:#404040;transform:scaleX(0.7332);transform-origin:left center;">01</span>
<span class="t" style="left:839.60px;top:465.55px;font-size:9.2px;color:#404040;transform:scaleX(0.7332);transform-origin:left center;">0014</span>
<span class="t" style="left:880.95px;top:465.55px;font-size:9.2px;color:#404040;transform:scaleX(0.7332);transform-origin:left center;">0160</span>
<span class="t" style="left:921.50px;top:465.55px;font-size:9.2px;color:#404040;transform:scaleX(0.7332);transform-origin:left center;">0160</span>
<div class="r" style="left:949.8px;top:462.74px;width:43.5px;height:12.61px;overflow:hidden;">
<span class="t" style="left:30.19px;top:2.81px;font-size:9.2px;color:#404040;transform:scaleX(0.7326);transform-origin:left center;">(25.0</span>
</div>
<span class="t" style="left:291.00px;top:478.16px;font-size:9.2px;color:#404040;transform:scaleX(0.7332);transform-origin:left center;">2015</span>
<span class="t" style="left:331.15px;top:478.16px;font-size:9.2px;color:#404040;transform:scaleX(0.7332);transform-origin:left center;">2015</span>
<span class="t" style="left:374.60px;top:478.16px;font-size:9.2px;color:#404040;transform:scaleX(0.7332);transform-origin:left center;">12</span>
<span class="t" style="left:407.20px;top:478.16px;font-size:9.2px;color:#404040;transform:scaleX(0.7332);transform-origin:left center;">3500</span>
<span class="t" style="left:441.74px;top:478.16px;font-size:9.2px;color:#404040;transform:scaleX(0.6868);transform-origin:left center;">PY1507B4</span>
<span class="t" style="left:493.62px;top:478.16px;font-size:9.2px;color:#404040;transform:scaleX(0.7332);transform-origin:left center;">750</span>
<span class="t" style="left:528.67px;top:478.16px;font-size:9.2px;color:#404040;transform:scaleX(0.7332);transform-origin:left center;">20200</span>
<span class="t" style="left:577.65px;top:478.16px;font-size:9.2px;color:#404040;transform:scaleX(0.7332);transform-origin:left center;">0100</span>
<span class="t" style="left:623.00px;top:478.16px;font-size:9.2px;color:#404040;transform:scaleX(0.7332);transform-origin:left center;">0100</span>
<span class="t" style="left:665.05px;top:478.16px;font-size:9.2px;color:#404040;transform:scaleX(0.7332);transform-origin:left center;">2020</span>
<span class="t" style="left:711.65px;top:478.16px;font-size:9.2px;color:#404040;transform:scaleX(0.6306);transform-origin:left center;">SUPP</span>
<span class="t" style="left:758.54px;top:478.16px;font-size:9.2px;color:#404040;transform:scaleX(0.6518);transform-origin:left center;">SUPT2</span>
<span class="t" style="left:805.10px;top:478.16px;font-size:9.2px;color:#404040;transform:scaleX(0.7332);transform-origin:left center;">01</span>
<span class="t" style="left:839.60px;top:478.16px;font-size:9.2px;color:#404040;transform:scaleX(0.7332);transform-origin:left center;">0014</span>
<span class="t" style="left:880.95px;top:478.16px;font-size:9.2px;color:#404040;transform:scaleX(0.7332);transform-origin:left center;">0160</span>
<span class="t" style="left:921.50px;top:478.16px;font-size:9.2px;color:#404040;transform:scaleX(0.7332);transform-origin:left center;">0160</span>
<div class="r" style="left:949.8px;top:475.35px;width:43.5px;height:12.61px;overflow:hidden;">
<span class="t" style="left:32.43px;top:2.81px;font-size:9.2px;color:#404040;transform:scaleX(0.7327);transform-origin:left center;">25.0</span>
</div>
<span class="t" style="left:291.00px;top:490.77px;font-size:9.2px;color:#404040;transform:scaleX(0.7332);transform-origin:left center;">2015</span>
<span class="t" style="left:331.15px;top:490.77px;font-size:9.2px;color:#404040;transform:scaleX(0.7332);transform-origin:left center;">2015</span>
<span class="t" style="left:374.60px;top:490.77px;font-size:9.2px;color:#404040;transform:scaleX(0.7332);transform-origin:left center;">12</span>
<span class="t" style="left:407.20px;top:490.77px;font-size:9.2px;color:#404040;transform:scaleX(0.7332);transform-origin:left center;">3500</span>
<span class="t" style="left:441.78px;top:490.77px;font-size:9.2px;color:#404040;transform:scaleX(0.6771);transform-origin:left center;">PY1507C6</span>
<span class="t" style="left:493.62px;top:490.77px;font-size:9.2px;color:#404040;transform:scaleX(0.7332);transform-origin:left center;">751</span>
<span class="t" style="left:528.67px;top:490.77px;font-size:9.2px;color:#404040;transform:scaleX(0.7332);transform-origin:left center;">20200</span>
<span class="t" style="left:577.65px;top:490.77px;font-size:9.2px;color:#404040;transform:scaleX(0.7332);transform-origin:left center;">0100</span>
<span class="t" style="left:623.00px;top:490.77px;font-size:9.2px;color:#404040;transform:scaleX(0.7332);transform-origin:left center;">0100</span>
<span class="t" style="left:665.05px;top:490.77px;font-size:9.2px;color:#404040;transform:scaleX(0.7332);transform-origin:left center;">2020</span>
<span class="t" style="left:711.65px;top:490.77px;font-size:9.2px;color:#404040;transform:scaleX(0.6306);transform-origin:left center;">SUPP</span>
<span class="t" style="left:758.54px;top:490.77px;font-size:9.2px;color:#404040;transform:scaleX(0.6518);transform-origin:left center;">SUPT2</span>
<span class="t" style="left:805.10px;top:490.77px;font-size:9.2px;color:#404040;transform:scaleX(0.7332);transform-origin:left center;">01</span>
<span class="t" style="left:839.60px;top:490.77px;font-size:9.2px;color:#404040;transform:scaleX(0.7332);transform-origin:left center;">0014</span>
<span class="t" style="left:880.95px;top:490.77px;font-size:9.2px;color:#404040;transform:scaleX(0.7332);transform-origin:left center;">0160</span>
<span class="t" style="left:921.50px;top:490.77px;font-size:9.2px;color:#404040;transform:scaleX(0.7332);transform-origin:left center;">0160</span>
<div class="r" style="left:949.8px;top:487.96px;width:43.5px;height:12.61px;overflow:hidden;">
<span class="t" style="left:30.19px;top:2.81px;font-size:9.2px;color:#404040;transform:scaleX(0.7326);transform-origin:left center;">(25.0</span>
</div>
<span class="t" style="left:291.00px;top:503.38px;font-size:9.2px;color:#404040;transform:scaleX(0.7332);transform-origin:left center;">2015</span>
<span class="t" style="left:331.15px;top:503.38px;font-size:9.2px;color:#404040;transform:scaleX(0.7332);transform-origin:left center;">2015</span>
<span class="t" style="left:374.60px;top:503.38px;font-size:9.2px;color:#404040;transform:scaleX(0.7332);transform-origin:left center;">12</span>
<span class="t" style="left:407.20px;top:503.38px;font-size:9.2px;color:#404040;transform:scaleX(0.7332);transform-origin:left center;">3500</span>
<span class="t" style="left:441.74px;top:503.38px;font-size:9.2px;color:#404040;transform:scaleX(0.6868);transform-origin:left center;">PY1508B4</span>
<span class="t" style="left:493.62px;top:503.38px;font-size:9.2px;color:#404040;transform:scaleX(0.7332);transform-origin:left center;">750</span>
<span class="t" style="left:528.67px;top:503.38px;font-size:9.2px;color:#404040;transform:scaleX(0.7332);transform-origin:left center;">20200</span>
<span class="t" style="left:577.65px;top:503.38px;font-size:9.2px;color:#404040;transform:scaleX(0.7332);transform-origin:left center;">0100</span>
<span class="t" style="left:623.00px;top:503.38px;font-size:9.2px;color:#404040;transform:scaleX(0.7332);transform-origin:left center;">0100</span>
<span class="t" style="left:665.05px;top:503.38px;font-size:9.2px;color:#404040;transform:scaleX(0.7332);transform-origin:left center;">2020</span>
<span class="t" style="left:711.65px;top:503.38px;font-size:9.2px;color:#404040;transform:scaleX(0.6306);transform-origin:left center;">SUPP</span>
<span class="t" style="left:758.54px;top:503.38px;font-size:9.2px;color:#404040;transform:scaleX(0.6518);transform-origin:left center;">SUPT2</span>
<span class="t" style="left:805.10px;top:503.38px;font-size:9.2px;color:#404040;transform:scaleX(0.7332);transform-origin:left center;">01</span>
<span class="t" style="left:839.60px;top:503.38px;font-size:9.2px;color:#404040;transform:scaleX(0.7332);transform-origin:left center;">0014</span>
<span class="t" style="left:880.95px;top:503.38px;font-size:9.2px;color:#404040;transform:scaleX(0.7332);transform-origin:left center;">0160</span>
<span class="t" style="left:921.50px;top:503.38px;font-size:9.2px;color:#404040;transform:scaleX(0.7332);transform-origin:left center;">0160</span>
<div class="r" style="left:949.8px;top:500.57px;width:43.5px;height:12.61px;overflow:hidden;">
<span class="t" style="left:32.43px;top:2.81px;font-size:9.2px;color:#404040;transform:scaleX(0.7327);transform-origin:left center;">25.0</span>
</div>
<span class="t" style="left:291.00px;top:515.99px;font-size:9.2px;color:#404040;transform:scaleX(0.7332);transform-origin:left center;">2015</span>
<span class="t" style="left:331.15px;top:515.99px;font-size:9.2px;color:#404040;transform:scaleX(0.7332);transform-origin:left center;">2015</span>
<span class="t" style="left:374.60px;top:515.99px;font-size:9.2px;color:#404040;transform:scaleX(0.7332);transform-origin:left center;">12</span>
<span class="t" style="left:407.20px;top:515.99px;font-size:9.2px;color:#404040;transform:scaleX(0.7332);transform-origin:left center;">3500</span>
<span class="t" style="left:441.78px;top:515.99px;font-size:9.2px;color:#404040;transform:scaleX(0.6771);transform-origin:left center;">PY1508C6</span>
<span class="t" style="left:493.62px;top:515.99px;font-size:9.2px;color:#404040;transform:scaleX(0.7332);transform-origin:left center;">751</span>
<span class="t" style="left:528.67px;top:515.99px;font-size:9.2px;color:#404040;transform:scaleX(0.7332);transform-origin:left center;">20200</span>
<span class="t" style="left:577.65px;top:515.99px;font-size:9.2px;color:#404040;transform:scaleX(0.7332);transform-origin:left center;">0100</span>
<span class="t" style="left:623.00px;top:515.99px;font-size:9.2px;color:#404040;transform:scaleX(0.7332);transform-origin:left center;">0100</span>
<span class="t" style="left:665.05px;top:515.99px;font-size:9.2px;color:#404040;transform:scaleX(0.7332);transform-origin:left center;">2020</span>
<span class="t" style="left:711.65px;top:515.99px;font-size:9.2px;color:#404040;transform:scaleX(0.6306);transform-origin:left center;">SUPP</span>
<span class="t" style="left:758.54px;top:515.99px;font-size:9.2px;color:#404040;transform:scaleX(0.6518);transform-origin:left center;">SUPT2</span>
<span class="t" style="left:805.10px;top:515.99px;font-size:9.2px;color:#404040;transform:scaleX(0.7332);transform-origin:left center;">01</span>
<span class="t" style="left:839.60px;top:515.99px;font-size:9.2px;color:#404040;transform:scaleX(0.7332);transform-origin:left center;">0014</span>
<span class="t" style="left:880.95px;top:515.99px;font-size:9.2px;color:#404040;transform:scaleX(0.7332);transform-origin:left center;">0160</span>
<span class="t" style="left:921.50px;top:515.99px;font-size:9.2px;color:#404040;transform:scaleX(0.7332);transform-origin:left center;">0160</span>
<div class="r" style="left:949.8px;top:513.18px;width:43.5px;height:12.61px;overflow:hidden;">
<span class="t" style="left:30.19px;top:2.81px;font-size:9.2px;color:#404040;transform:scaleX(0.7326);transform-origin:left center;">(25.0</span>
</div>
<span class="t" style="left:291.00px;top:528.60px;font-size:9.2px;color:#404040;transform:scaleX(0.7332);transform-origin:left center;">2015</span>
<span class="t" style="left:331.15px;top:528.60px;font-size:9.2px;color:#404040;transform:scaleX(0.7332);transform-origin:left center;">2015</span>
<span class="t" style="left:374.60px;top:528.60px;font-size:9.2px;color:#404040;transform:scaleX(0.7332);transform-origin:left center;">12</span>
<span class="t" style="left:407.20px;top:528.60px;font-size:9.2px;color:#404040;transform:scaleX(0.7332);transform-origin:left center;">3500</span>
<span class="t" style="left:441.74px;top:528.60px;font-size:9.2px;color:#404040;transform:scaleX(0.6868);transform-origin:left center;">PY1509B4</span>
<span class="t" style="left:493.62px;top:528.60px;font-size:9.2px;color:#404040;transform:scaleX(0.7332);transform-origin:left center;">750</span>
<span class="t" style="left:528.67px;top:528.60px;font-size:9.2px;color:#404040;transform:scaleX(0.7332);transform-origin:left center;">20200</span>
<span class="t" style="left:577.65px;top:528.60px;font-size:9.2px;color:#404040;transform:scaleX(0.7332);transform-origin:left center;">0100</span>
<span class="t" style="left:623.00px;top:528.60px;font-size:9.2px;color:#404040;transform:scaleX(0.7332);transform-origin:left center;">0100</span>
<span class="t" style="left:665.05px;top:528.60px;font-size:9.2px;color:#404040;transform:scaleX(0.7332);transform-origin:left center;">2020</span>
<span class="t" style="left:711.65px;top:528.60px;font-size:9.2px;color:#404040;transform:scaleX(0.6306);transform-origin:left center;">SUPP</span>
<span class="t" style="left:758.54px;top:528.60px;font-size:9.2px;color:#404040;transform:scaleX(0.6518);transform-origin:left center;">SUPT2</span>
<span class="t" style="left:805.10px;top:528.60px;font-size:9.2px;color:#404040;transform:scaleX(0.7332);transform-origin:left center;">01</span>
<span class="t" style="left:839.60px;top:528.60px;font-size:9.2px;color:#404040;transform:scaleX(0.7332);transform-origin:left center;">0014</span>
<span class="t" style="left:880.95px;top:528.60px;font-size:9.2px;color:#404040;transform:scaleX(0.7332);transform-origin:left center;">0160</span>
<span class="t" style="left:921.50px;top:528.60px;font-size:9.2px;color:#404040;transform:scaleX(0.7332);transform-origin:left center;">0160</span>
<div class="r" style="left:949.8px;top:525.79px;width:43.5px;height:12.61px;overflow:hidden;">
<span class="t" style="left:32.43px;top:2.81px;font-size:9.2px;color:#404040;transform:scaleX(0.7327);transform-origin:left center;">25.0</span>
</div>
<span class="t" style="left:291.00px;top:541.21px;font-size:9.2px;color:#404040;transform:scaleX(0.7332);transform-origin:left center;">2015</span>
<span class="t" style="left:331.15px;top:541.21px;font-size:9.2px;color:#404040;transform:scaleX(0.7332);transform-origin:left center;">2015</span>
<span class="t" style="left:374.60px;top:541.21px;font-size:9.2px;color:#404040;transform:scaleX(0.7332);transform-origin:left center;">12</span>
<span class="t" style="left:407.20px;top:541.21px;font-size:9.2px;color:#404040;transform:scaleX(0.7332);transform-origin:left center;">3500</span>
<span class="t" style="left:441.78px;top:541.21px;font-size:9.2px;color:#404040;transform:scaleX(0.6771);transform-origin:left center;">PY1509C6</span>
<span class="t" style="left:493.62px;top:541.21px;font-size:9.2px;color:#404040;transform:scaleX(0.7332);transform-origin:left center;">751</span>
<span class="t" style="left:528.67px;top:541.21px;font-size:9.2px;color:#404040;transform:scaleX(0.7332);transform-origin:left center;">20200</span>
<span class="t" style="left:577.65px;top:541.21px;font-size:9.2px;color:#404040;transform:scaleX(0.7332);transform-origin:left center;">0100</span>
<span class="t" style="left:623.00px;top:541.21px;font-size:9.2px;color:#404040;transform:scaleX(0.7332);transform-origin:left center;">0100</span>
<span class="t" style="left:665.05px;top:541.21px;font-size:9.2px;color:#404040;transform:scaleX(0.7332);transform-origin:left center;">2020</span>
<span class="t" style="left:711.65px;top:541.21px;font-size:9.2px;color:#404040;transform:scaleX(0.6306);transform-origin:left center;">SUPP</span>
<span class="t" style="left:758.54px;top:541.21px;font-size:9.2px;color:#404040;transform:scaleX(0.6518);transform-origin:left center;">SUPT2</span>
<span class="t" style="left:805.10px;top:541.21px;font-size:9.2px;color:#404040;transform:scaleX(0.7332);transform-origin:left center;">01</span>
<span class="t" style="left:839.60px;top:541.21px;font-size:9.2px;color:#404040;transform:scaleX(0.7332);transform-origin:left center;">0014</span>
<span class="t" style="left:880.95px;top:541.21px;font-size:9.2px;color:#404040;transform:scaleX(0.7332);transform-origin:left center;">0160</span>
<span class="t" style="left:921.50px;top:541.21px;font-size:9.2px;color:#404040;transform:scaleX(0.7332);transform-origin:left center;">0160</span>
<div class="r" style="left:949.8px;top:538.40px;width:43.5px;height:12.61px;overflow:hidden;">
<span class="t" style="left:30.19px;top:2.81px;font-size:9.2px;color:#404040;transform:scaleX(0.7326);transform-origin:left center;">(25.0</span>
</div>
<span class="t" style="left:291.00px;top:553.82px;font-size:9.2px;color:#404040;transform:scaleX(0.7332);transform-origin:left center;">2015</span>
<span class="t" style="left:331.15px;top:553.82px;font-size:9.2px;color:#404040;transform:scaleX(0.7332);transform-origin:left center;">2015</span>
<span class="t" style="left:376.47px;top:553.82px;font-size:9.2px;color:#404040;transform:scaleX(0.7332);transform-origin:left center;">4</span>
<span class="t" style="left:407.20px;top:553.82px;font-size:9.2px;color:#404040;transform:scaleX(0.7332);transform-origin:left center;">3500</span>
<span class="t" style="left:441.78px;top:553.82px;font-size:9.2px;color:#404040;transform:scaleX(0.6771);transform-origin:left center;">PY1409C5</span>
<span class="t" style="left:493.62px;top:553.82px;font-size:9.2px;color:#404040;transform:scaleX(0.7332);transform-origin:left center;">751</span>
<span class="t" style="left:528.67px;top:553.82px;font-size:9.2px;color:#404040;transform:scaleX(0.7332);transform-origin:left center;">20100</span>
<span class="t" style="left:577.65px;top:553.82px;font-size:9.2px;color:#404040;transform:scaleX(0.7332);transform-origin:left center;">0100</span>
<span class="t" style="left:623.00px;top:553.82px;font-size:9.2px;color:#404040;transform:scaleX(0.7332);transform-origin:left center;">0100</span>
<span class="t" style="left:665.05px;top:553.82px;font-size:9.2px;color:#404040;transform:scaleX(0.7332);transform-origin:left center;">2010</span>
<span class="t" style="left:711.29px;top:553.82px;font-size:9.2px;color:#404040;transform:scaleX(0.6464);transform-origin:left center;">HEAR</span>
<span class="t" style="left:758.06px;top:553.82px;font-size:9.2px;color:#404040;transform:scaleX(0.6609);transform-origin:left center;">HEAR2</span>
<span class="t" style="left:805.10px;top:553.82px;font-size:9.2px;color:#404040;transform:scaleX(0.7332);transform-origin:left center;">01</span>
<span class="t" style="left:839.60px;top:553.82px;font-size:9.2px;color:#404040;transform:scaleX(0.7332);transform-origin:left center;">0014</span>
<span class="t" style="left:880.95px;top:553.82px;font-size:9.2px;color:#404040;transform:scaleX(0.7332);transform-origin:left center;">0160</span>
<span class="t" style="left:921.50px;top:553.82px;font-size:9.2px;color:#404040;transform:scaleX(0.7332);transform-origin:left center;">0160</span>
<div class="r" style="left:949.8px;top:551.01px;width:43.5px;height:12.61px;overflow:hidden;">
<span class="t" style="left:30.19px;top:2.81px;font-size:9.2px;color:#404040;transform:scaleX(0.7326);transform-origin:left center;">(25.0</span>
</div>
<span class="t" style="left:291.00px;top:566.43px;font-size:9.2px;color:#404040;transform:scaleX(0.7332);transform-origin:left center;">2015</span>
<span class="t" style="left:331.15px;top:566.43px;font-size:9.2px;color:#404040;transform:scaleX(0.7332);transform-origin:left center;">2015</span>
<span class="t" style="left:376.47px;top:566.43px;font-size:9.2px;color:#404040;transform:scaleX(0.7332);transform-origin:left center;">4</span>
<span class="t" style="left:407.20px;top:566.43px;font-size:9.2px;color:#404040;transform:scaleX(0.7332);transform-origin:left center;">3500</span>
<span class="t" style="left:441.78px;top:566.43px;font-size:9.2px;color:#404040;transform:scaleX(0.6771);transform-origin:left center;">PY1410C5</span>
<span class="t" style="left:493.62px;top:566.43px;font-size:9.2px;color:#404040;transform:scaleX(0.7332);transform-origin:left center;">751</span>
<span class="t" style="left:528.67px;top:566.43px;font-size:9.2px;color:#404040;transform:scaleX(0.7332);transform-origin:left center;">20100</span>
<span class="t" style="left:577.65px;top:566.43px;font-size:9.2px;color:#404040;transform:scaleX(0.7332);transform-origin:left center;">0100</span>
<span class="t" style="left:623.00px;top:566.43px;font-size:9.2px;color:#404040;transform:scaleX(0.7332);transform-origin:left center;">0100</span>
<span class="t" style="left:665.05px;top:566.43px;font-size:9.2px;color:#404040;transform:scaleX(0.7332);transform-origin:left center;">2010</span>
<span class="t" style="left:711.29px;top:566.43px;font-size:9.2px;color:#404040;transform:scaleX(0.6464);transform-origin:left center;">HEAR</span>
<span class="t" style="left:758.06px;top:566.43px;font-size:9.2px;color:#404040;transform:scaleX(0.6609);transform-origin:left center;">HEAR2</span>
<span class="t" style="left:805.10px;top:566.43px;font-size:9.2px;color:#404040;transform:scaleX(0.7332);transform-origin:left center;">01</span>
<span class="t" style="left:839.60px;top:566.43px;font-size:9.2px;color:#404040;transform:scaleX(0.7332);transform-origin:left center;">0014</span>
<span class="t" style="left:880.95px;top:566.43px;font-size:9.2px;color:#404040;transform:scaleX(0.7332);transform-origin:left center;">0160</span>
<span class="t" style="left:921.50px;top:566.43px;font-size:9.2px;color:#404040;transform:scaleX(0.7332);transform-origin:left center;">0160</span>
<div class="r" style="left:949.8px;top:563.62px;width:43.5px;height:12.61px;overflow:hidden;">
<span class="t" style="left:30.19px;top:2.81px;font-size:9.2px;color:#404040;transform:scaleX(0.7326);transform-origin:left center;">(20.7</span>
</div>
<span class="t" style="left:291.00px;top:579.04px;font-size:9.2px;color:#404040;transform:scaleX(0.7332);transform-origin:left center;">2015</span>
<span class="t" style="left:331.15px;top:579.04px;font-size:9.2px;color:#404040;transform:scaleX(0.7332);transform-origin:left center;">2015</span>
<span class="t" style="left:374.60px;top:579.04px;font-size:9.2px;color:#404040;transform:scaleX(0.7857);transform-origin:left center;">11</span>
<span class="t" style="left:407.20px;top:579.04px;font-size:9.2px;color:#404040;transform:scaleX(0.7332);transform-origin:left center;">3500</span>
<span class="t" style="left:441.78px;top:579.04px;font-size:9.2px;color:#404040;transform:scaleX(0.6877);transform-origin:left center;">PY1411C5</span>
<span class="t" style="left:493.62px;top:579.04px;font-size:9.2px;color:#404040;transform:scaleX(0.7332);transform-origin:left center;">751</span>
<span class="t" style="left:528.67px;top:579.04px;font-size:9.2px;color:#404040;transform:scaleX(0.7332);transform-origin:left center;">20100</span>
<span class="t" style="left:577.65px;top:579.04px;font-size:9.2px;color:#404040;transform:scaleX(0.7332);transform-origin:left center;">0100</span>
<span class="t" style="left:623.00px;top:579.04px;font-size:9.2px;color:#404040;transform:scaleX(0.7332);transform-origin:left center;">0100</span>
<span class="t" style="left:665.05px;top:579.04px;font-size:9.2px;color:#404040;transform:scaleX(0.7332);transform-origin:left center;">2010</span>
<span class="t" style="left:711.29px;top:579.04px;font-size:9.2px;color:#404040;transform:scaleX(0.6464);transform-origin:left center;">HEAR</span>
<span class="t" style="left:758.06px;top:579.04px;font-size:9.2px;color:#404040;transform:scaleX(0.6609);transform-origin:left center;">HEAR2</span>
<span class="t" style="left:805.10px;top:579.04px;font-size:9.2px;color:#404040;transform:scaleX(0.7332);transform-origin:left center;">01</span>
<span class="t" style="left:839.60px;top:579.04px;font-size:9.2px;color:#404040;transform:scaleX(0.7332);transform-origin:left center;">0014</span>
<span class="t" style="left:880.95px;top:579.04px;font-size:9.2px;color:#404040;transform:scaleX(0.7332);transform-origin:left center;">0160</span>
<span class="t" style="left:921.50px;top:579.04px;font-size:9.2px;color:#404040;transform:scaleX(0.7332);transform-origin:left center;">0160</span>
<div class="r" style="left:949.8px;top:576.23px;width:43.5px;height:12.61px;overflow:hidden;">
<span class="t" style="left:30.19px;top:2.81px;font-size:9.2px;color:#404040;transform:scaleX(0.7326);transform-origin:left center;">(12.0</span>
</div>
<span class="t" style="left:291.00px;top:591.65px;font-size:9.2px;color:#404040;transform:scaleX(0.7332);transform-origin:left center;">2015</span>
<span class="t" style="left:331.15px;top:591.65px;font-size:9.2px;color:#404040;transform:scaleX(0.7332);transform-origin:left center;">2015</span>
<span class="t" style="left:376.47px;top:591.65px;font-size:9.2px;color:#404040;transform:scaleX(0.7332);transform-origin:left center;">5</span>
<span class="t" style="left:407.20px;top:591.65px;font-size:9.2px;color:#404040;transform:scaleX(0.7332);transform-origin:left center;">3500</span>
<span class="t" style="left:441.78px;top:591.65px;font-size:9.2px;color:#404040;transform:scaleX(0.6771);transform-origin:left center;">PY1412C5</span>
<span class="t" style="left:493.62px;top:591.65px;font-size:9.2px;color:#404040;transform:scaleX(0.7332);transform-origin:left center;">751</span>
<span class="t" style="left:528.67px;top:591.65px;font-size:9.2px;color:#404040;transform:scaleX(0.7332);transform-origin:left center;">20100</span>
<span class="t" style="left:577.65px;top:591.65px;font-size:9.2px;color:#404040;transform:scaleX(0.7332);transform-origin:left center;">0100</span>
<span class="t" style="left:623.00px;top:591.65px;font-size:9.2px;color:#404040;transform:scaleX(0.7332);transform-origin:left center;">0100</span>
<span class="t" style="left:665.05px;top:591.65px;font-size:9.2px;color:#404040;transform:scaleX(0.7332);transform-origin:left center;">2010</span>
<span class="t" style="left:711.29px;top:591.65px;font-size:9.2px;color:#404040;transform:scaleX(0.6464);transform-origin:left center;">HEAR</span>
<span class="t" style="left:758.06px;top:591.65px;font-size:9.2px;color:#404040;transform:scaleX(0.6609);transform-origin:left center;">HEAR2</span>
<span class="t" style="left:805.10px;top:591.65px;font-size:9.2px;color:#404040;transform:scaleX(0.7332);transform-origin:left center;">01</span>
<span class="t" style="left:839.60px;top:591.65px;font-size:9.2px;color:#404040;transform:scaleX(0.7332);transform-origin:left center;">0014</span>
<span class="t" style="left:880.95px;top:591.65px;font-size:9.2px;color:#404040;transform:scaleX(0.7332);transform-origin:left center;">0160</span>
<span class="t" style="left:921.50px;top:591.65px;font-size:9.2px;color:#404040;transform:scaleX(0.7332);transform-origin:left center;">0160</span>
<div class="r" style="left:949.8px;top:588.84px;width:43.5px;height:12.61px;overflow:hidden;">
<span class="t" style="left:30.19px;top:2.81px;font-size:9.2px;color:#404040;transform:scaleX(0.7326);transform-origin:left center;">(25.0</span>
</div>
<span class="t" style="left:291.00px;top:604.26px;font-size:9.2px;color:#404040;transform:scaleX(0.7332);transform-origin:left center;">2015</span>
<span class="t" style="left:331.15px;top:604.26px;font-size:9.2px;color:#404040;transform:scaleX(0.7332);transform-origin:left center;">2015</span>
<span class="t" style="left:376.47px;top:604.26px;font-size:9.2px;color:#404040;transform:scaleX(0.7332);transform-origin:left center;">6</span>
<span class="t" style="left:407.20px;top:604.26px;font-size:9.2px;color:#404040;transform:scaleX(0.7332);transform-origin:left center;">3500</span>
<span class="t" style="left:441.78px;top:604.26px;font-size:9.2px;color:#404040;transform:scaleX(0.6771);transform-origin:left center;">PY1501C5</span>
<span class="t" style="left:493.62px;top:604.26px;font-size:9.2px;color:#404040;transform:scaleX(0.7332);transform-origin:left center;">751</span>
<span class="t" style="left:528.67px;top:604.26px;font-size:9.2px;color:#404040;transform:scaleX(0.7332);transform-origin:left center;">20100</span>
<span class="t" style="left:577.65px;top:604.26px;font-size:9.2px;color:#404040;transform:scaleX(0.7332);transform-origin:left center;">0100</span>
<span class="t" style="left:623.00px;top:604.26px;font-size:9.2px;color:#404040;transform:scaleX(0.7332);transform-origin:left center;">0100</span>
<span class="t" style="left:665.05px;top:604.26px;font-size:9.2px;color:#404040;transform:scaleX(0.7332);transform-origin:left center;">2010</span>
<span class="t" style="left:711.29px;top:604.26px;font-size:9.2px;color:#404040;transform:scaleX(0.6464);transform-origin:left center;">HEAR</span>
<span class="t" style="left:758.06px;top:604.26px;font-size:9.2px;color:#404040;transform:scaleX(0.6609);transform-origin:left center;">HEAR2</span>
<span class="t" style="left:805.10px;top:604.26px;font-size:9.2px;color:#404040;transform:scaleX(0.7332);transform-origin:left center;">01</span>
<span class="t" style="left:839.60px;top:604.26px;font-size:9.2px;color:#404040;transform:scaleX(0.7332);transform-origin:left center;">0014</span>
<span class="t" style="left:880.95px;top:604.26px;font-size:9.2px;color:#404040;transform:scaleX(0.7332);transform-origin:left center;">0160</span>
<span class="t" style="left:921.50px;top:604.26px;font-size:9.2px;color:#404040;transform:scaleX(0.7332);transform-origin:left center;">0160</span>
<div class="r" style="left:949.8px;top:601.45px;width:43.5px;height:12.61px;overflow:hidden;">
<span class="t" style="left:30.19px;top:2.81px;font-size:9.2px;color:#404040;transform:scaleX(0.7326);transform-origin:left center;">(25.0</span>
</div>
<div class="r" style="left:278.6px;top:160.3px;width:39.8px;height:12.9px;background:#fff;border:0.9px solid #F2A0A6;box-sizing:border-box;"></div>
<div class="r" style="left:291.50px;top:161.40px;width:14.50px;height:10.90px;background:#0a0a0a;"></div>
<span class="t" style="left:291.90px;top:163.11px;font-size:9.2px;color:#fff;transform:scaleX(0.6791);transform-origin:left center;">2015</span>
<span class="t" style="left:301.00px;top:616.20px;font-size:9.2px;color:#333;transform:scaleX(0.7749);transform-origin:left center;font-weight:bold;">Total</span>
<div class="r" style="left:949.8px;top:613.4px;width:43.5px;height:12.4px;overflow:hidden;">
<span class="t" style="left:2.90px;top:2.80px;font-size:9.2px;color:#3a3a3a;transform:scaleX(0.7292);transform-origin:left center;font-weight:bold;">602,397,678.9</span>
</div>
<div class="r" style="left:269.40px;top:613.00px;width:724.00px;height:1.00px;background:#DCE1EC;"></div>
<div class="r" style="left:993.40px;top:158.60px;width:8.10px;height:455.50px;background:#C9C9C9;"></div>
<div class="r" style="left:993.7px;top:149.8px;width:6.8px;height:7.6px;background:#fff;border:0.6px solid #B9B9B9;"></div>
<svg class="r" style="left:995.30px;top:152.30px" width="4.4" height="3" viewBox="0 0 4.4 3"><path d="M0 2.7 L2.2 0.3 L4.4 2.7Z" fill="#444"/></svg>
<div class="r" style="left:993.90px;top:159.30px;width:6.60px;height:9.80px;background:#fff;"></div>
<div class="r" style="left:993.40px;top:613.80px;width:8.10px;height:12.60px;background:#E8E8E8;"></div>
<div class="r" style="left:993.7px;top:614.6px;width:6.8px;height:9.6px;background:#fff;border:0.6px solid #B9B9B9;"></div>
<svg class="r" style="left:995.30px;top:618.40px" width="4.4" height="3" viewBox="0 0 4.4 3"><path d="M0 0.3 L2.2 2.7 L4.4 0.3Z" fill="#444"/></svg>
<div class="r" style="left:269.40px;top:626.30px;width:732.10px;height:10.50px;background:#F0F0F0;"></div>
<div class="r" style="left:494.00px;top:626.30px;width:507.00px;height:10.50px;background:#C9C9C9;"></div>
<div class="r" style="left:488.50px;top:626.30px;width:105.00px;height:8.50px;background:#fff;"></div>
<div class="r" style="left:488.5px;top:626.5px;width:6.5px;height:8px;background:#fff;border:0.6px solid #B0B0B0;"></div>
<svg class="r" style="left:490.60px;top:628.80px" width="3" height="4" viewBox="0 0 3 4"><path d="M2.6 0 L0.4 2 L2.6 4Z" fill="#444"/></svg>
<div class="r" style="left:983.6px;top:627.8px;width:6px;height:6.4px;background:#fff;border:0.6px solid #B0B0B0;"></div>
<svg class="r" style="left:985.80px;top:629.00px" width="3.4" height="5" viewBox="0 0 3.4 5"><path d="M0.3 0 L3.1 2.5 L0.3 5Z" fill="#333"/></svg>
<div class="r" style="left:269.4px;top:626.3px;width:220px;height:10.3px;overflow:hidden;">
<span class="t" style="left:2.60px;top:2.83px;font-size:9.5px;color:#555;transform:scaleX(0.7455);transform-origin:left center;">Record:</span>
<svg class="r" style="left:31.30px;top:4.30px" width="6" height="6.4" viewBox="0 0 6 6.4"><path d="M0.7 0.3 V6.1" stroke="#333" stroke-width="1"/><path d="M5.2 0.3 L1.9 3.2 L5.2 6.1Z" fill="#333"/></svg>
<svg class="r" style="left:42.00px;top:4.30px" width="4" height="6.4" viewBox="0 0 4 6.4"><path d="M3.4 0.3 L0.4 3.2 L3.4 6.1Z" fill="#C0C0C0"/></svg>
<div class="r" style="left:52.2px;top:0.6px;width:35px;height:12px;background:#fff;border-top:0.7px solid #C6C6C6;border-left:0.7px solid #C6C6C6;"></div>
<div class="r" style="left:52.4px;top:0;width:35.2px;height:12px;overflow:hidden;">
<span class="t" style="left:1.60px;top:2.83px;font-size:9.5px;color:#333;transform:scaleX(0.8017);transform-origin:left center;">1 of 10587</span>
</div>
<svg class="r" style="left:92.50px;top:4.30px" width="4" height="6.4" viewBox="0 0 4 6.4"><path d="M0.5 0.3 L3.6 3.2 L0.5 6.1Z" fill="#333"/></svg>
<svg class="r" style="left:102.00px;top:4.30px" width="6" height="6.4" viewBox="0 0 6 6.4"><path d="M0.5 0.3 L3.8 3.2 L0.5 6.1Z" fill="#333"/><path d="M5.1 0.3 V6.1" stroke="#333" stroke-width="1"/></svg>
<svg class="r" style="left:112.30px;top:4.30px" width="9" height="6.4" viewBox="0 0 9 6.4"><path d="M0.5 0.3 L3.6 3.2 L0.5 6.1Z" fill="#333"/><rect x="4.6" y="1.6" width="3.6" height="3.8" fill="#F0B85C"/></svg>
<div class="r" style="left:124.80px;top:0.80px;width:0.70px;height:12.00px;background:#C6C6C6;"></div>
<svg class="r" style="left:126.60px;top:0.60px" width="11" height="11" viewBox="0 0 11 11"><path d="M0.5 0.8 H8 L5 4.6 V10 H3.5 V4.6Z" fill="#666"/><path d="M5.6 8.6 q2 2.6 4.2 0" stroke="#E04A2A" stroke-width="1.2" fill="none"/></svg>
<div class="r" style="left:138.20px;top:3.00px;width:0.80px;height:9.00px;background:#8AB4E8;"></div>
<span class="t" style="left:139.40px;top:2.83px;font-size:9.5px;color:#555;transform:scaleX(0.7477);transform-origin:left center;">Unfiltered</span>
<div class="r" style="left:172.9px;top:0.6px;width:46px;height:12px;background:#fff;border:0.7px solid #C6C6C6;"></div>
<span class="t" style="left:175.10px;top:2.83px;font-size:9.5px;color:#333;transform:scaleX(0.7408);transform-origin:left center;">Search</span>
</div>
<div class="r" style="left:561.7px;top:402.9px;width:412.9px;height:172px;box-sizing:border-box;border:4.5px solid #FF0000;background:#fff;"></div>
<span class="t" style="left:574.00px;top:412.28px;font-size:16.8px;color:#FF0000;transform:scaleX(0.9883);transform-origin:left center;">The</span>
<span class="t" style="left:606.20px;top:412.28px;font-size:16.8px;color:#FF0000;transform:scaleX(1.1125);transform-origin:left center;">bottom</span>
<span class="t" style="left:666.94px;top:412.28px;font-size:16.8px;color:#FF0000;transform:scaleX(1.0715);transform-origin:left center;">border</span>
<span class="t" style="left:722.57px;top:412.28px;font-size:16.8px;color:#FF0000;transform:scaleX(1.1296);transform-origin:left center;">that</span>
<span class="t" style="left:757.81px;top:412.28px;font-size:16.8px;color:#FF0000;transform:scaleX(0.9946);transform-origin:left center;">displays</span>
<span class="t" style="left:821.77px;top:412.28px;font-size:16.8px;color:#FF0000;transform:scaleX(1.0851);transform-origin:left center;">information</span>
<span class="t" style="left:915.54px;top:412.28px;font-size:16.8px;color:#FF0000;transform:scaleX(1.0692);transform-origin:left center;">about</span>
<span class="t" style="left:574.00px;top:434.73px;font-size:16.8px;color:#FF0000;transform:scaleX(1.0906);transform-origin:left center;">what</span>
<span class="t" style="left:616.29px;top:434.73px;font-size:16.8px;color:#FF0000;transform:scaleX(1.0632);transform-origin:left center;">view</span>
<span class="t" style="left:655.62px;top:434.73px;font-size:16.8px;color:#FF0000;transform:scaleX(1.1043);transform-origin:left center;">the</span>
<span class="t" style="left:685.00px;top:434.73px;font-size:16.8px;color:#FF0000;transform:scaleX(1.0684);transform-origin:left center;">table</span>
<span class="t" style="left:727.52px;top:434.73px;font-size:16.8px;color:#FF0000;transform:scaleX(0.9974);transform-origin:left center;">is</span>
<span class="t" style="left:743.21px;top:434.73px;font-size:16.8px;color:#FF0000;transform:scaleX(1.0179);transform-origin:left center;">obscuring</span>
<span class="t" style="left:820.96px;top:434.73px;font-size:16.8px;color:#FF0000;transform:scaleX(1.1043);transform-origin:left center;">the</span>
<span class="t" style="left:850.34px;top:434.73px;font-size:16.8px;color:#FF0000;transform:scaleX(1.0316);transform-origin:left center;">section</span>
<span class="t" style="left:908.85px;top:434.73px;font-size:16.8px;color:#FF0000;transform:scaleX(1.1296);transform-origin:left center;">that</span>
<span class="t" style="left:574.00px;top:457.18px;font-size:16.8px;color:#FF0000;transform:scaleX(1.0307);transform-origin:left center;">provides</span>
<span class="t" style="left:643.04px;top:457.18px;font-size:16.8px;color:#FF0000;transform:scaleX(1.0530);transform-origin:left center;">record</span>
<span class="t" style="left:696.78px;top:457.18px;font-size:16.8px;color:#FF0000;transform:scaleX(1.0594);transform-origin:left center;">number</span>
<span class="t" style="left:760.72px;top:457.18px;font-size:16.8px;color:#FF0000;transform:scaleX(1.0806);transform-origin:left center;">information.</span>
<span class="t" style="left:863.36px;top:457.18px;font-size:16.8px;color:#FF0000;transform:scaleX(0.9975);transform-origin:left center;">Also,</span>
<span class="t" style="left:904.21px;top:457.18px;font-size:16.8px;color:#FF0000;transform:scaleX(1.1043);transform-origin:left center;">the</span>
<span class="t" style="left:933.59px;top:457.18px;font-size:16.8px;color:#FF0000;transform:scaleX(1.0391);transform-origin:left center;">box</span>
<span class="t" style="left:574.00px;top:479.63px;font-size:16.8px;color:#FF0000;transform:scaleX(1.1296);transform-origin:left center;">that</span>
<span class="t" style="left:609.25px;top:479.63px;font-size:16.8px;color:#FF0000;transform:scaleX(1.0055);transform-origin:left center;">shows</span>
<span class="t" style="left:660.72px;top:479.63px;font-size:16.8px;color:#FF0000;transform:scaleX(1.1043);transform-origin:left center;">the</span>
<span class="t" style="left:690.10px;top:479.63px;font-size:16.8px;color:#FF0000;transform:scaleX(1.0530);transform-origin:left center;">record</span>
<span class="t" style="left:743.84px;top:479.63px;font-size:16.8px;color:#FF0000;transform:scaleX(1.0685);transform-origin:left center;">count</span>
<span class="t" style="left:791.35px;top:479.63px;font-size:16.8px;color:#FF0000;transform:scaleX(0.9974);transform-origin:left center;">is</span>
<span class="t" style="left:807.04px;top:479.63px;font-size:16.8px;color:#FF0000;transform:scaleX(1.1274);transform-origin:left center;">not</span>
<span class="t" style="left:836.96px;top:479.63px;font-size:16.8px;color:#FF0000;transform:scaleX(1.0734);transform-origin:left center;">wide</span>
<span class="t" style="left:877.64px;top:479.63px;font-size:16.8px;color:#FF0000;transform:scaleX(1.0268);transform-origin:left center;">enough</span>
<span class="t" style="left:938.80px;top:479.63px;font-size:16.8px;color:#FF0000;transform:scaleX(1.1841);transform-origin:left center;">to</span>
<span class="t" style="left:574.00px;top:502.08px;font-size:16.8px;color:#FF0000;transform:scaleX(1.1011);transform-origin:left center;">fully</span>
<span class="t" style="left:610.49px;top:502.08px;font-size:16.8px;color:#FF0000;transform:scaleX(1.0157);transform-origin:left center;">display</span>
<span class="t" style="left:667.20px;top:502.08px;font-size:16.8px;color:#FF0000;transform:scaleX(1.1043);transform-origin:left center;">the</span>
<span class="t" style="left:696.58px;top:502.08px;font-size:16.8px;color:#FF0000;transform:scaleX(1.1317);transform-origin:left center;">total</span>
<span class="t" style="left:736.11px;top:502.08px;font-size:16.8px;color:#FF0000;transform:scaleX(1.0594);transform-origin:left center;">number</span>
<span class="t" style="left:800.05px;top:502.08px;font-size:16.8px;color:#FF0000;transform:scaleX(1.1444);transform-origin:left center;">of</span>
<span class="t" style="left:819.68px;top:502.08px;font-size:16.8px;color:#FF0000;transform:scaleX(1.0246);transform-origin:left center;">records</span>
<span class="t" style="left:880.67px;top:502.08px;font-size:16.8px;color:#FF0000;transform:scaleX(1.1155);transform-origin:left center;">in</span>
<span class="t" style="left:898.85px;top:502.08px;font-size:16.8px;color:#FF0000;transform:scaleX(1.1043);transform-origin:left center;">the</span>
<span class="t" style="left:574.00px;top:524.53px;font-size:16.8px;color:#FF0000;transform:scaleX(1.0608);transform-origin:left center;">table.</span>
<span class="t" style="left:625.38px;top:524.53px;font-size:16.8px;color:#FF0000;transform:scaleX(0.9759);transform-origin:left center;">Does</span>
<span class="t" style="left:667.25px;top:524.53px;font-size:16.8px;color:#FF0000;transform:scaleX(1.0229);transform-origin:left center;">anyone</span>
<span class="t" style="left:727.22px;top:524.53px;font-size:16.8px;color:#FF0000;transform:scaleX(1.0662);transform-origin:left center;">know</span>
<span class="t" style="left:772.63px;top:524.53px;font-size:16.8px;color:#FF0000;transform:scaleX(1.2507);transform-origin:left center;">if</span>
<span class="t" style="left:786.73px;top:524.53px;font-size:16.8px;color:#FF0000;transform:scaleX(1.0838);transform-origin:left center;">there</span>
<span class="t" style="left:831.83px;top:524.53px;font-size:16.8px;color:#FF0000;transform:scaleX(0.9974);transform-origin:left center;">is</span>
<span class="t" style="left:847.52px;top:524.53px;font-size:16.8px;color:#FF0000;transform:scaleX(1.0147);transform-origin:left center;">some</span>
<span class="t" style="left:892.80px;top:524.53px;font-size:16.8px;color:#FF0000;transform:scaleX(1.0825);transform-origin:left center;">sort</span>
<span class="t" style="left:926.71px;top:524.53px;font-size:16.8px;color:#FF0000;transform:scaleX(1.1444);transform-origin:left center;">of</span>
<span class="t" style="left:574.00px;top:546.98px;font-size:16.8px;color:#FF0000;transform:scaleX(1.0311);transform-origin:left center;">global</span>
<span class="t" style="left:623.83px;top:546.98px;font-size:16.8px;color:#FF0000;transform:scaleX(1.0555);transform-origin:left center;">setting</span>
<span class="t" style="left:679.66px;top:546.98px;font-size:16.8px;color:#FF0000;transform:scaleX(1.1301);transform-origin:left center;">I</span>
<span class="t" style="left:688.53px;top:546.98px;font-size:16.8px;color:#FF0000;transform:scaleX(0.9994);transform-origin:left center;">can</span>
<span class="t" style="left:719.19px;top:546.98px;font-size:16.8px;color:#FF0000;transform:scaleX(1.0453);transform-origin:left center;">adjust</span>
<span class="t" style="left:769.65px;top:546.98px;font-size:16.8px;color:#FF0000;transform:scaleX(1.1841);transform-origin:left center;">to</span>
<span class="t" style="left:789.83px;top:546.98px;font-size:16.8px;color:#FF0000;transform:scaleX(1.1034);transform-origin:left center;">fix</span>
<span class="t" style="left:811.96px;top:546.98px;font-size:16.8px;color:#FF0000;transform:scaleX(1.0288);transform-origin:left center;">these</span>
<span class="t" style="left:857.83px;top:546.98px;font-size:16.8px;color:#FF0000;transform:scaleX(0.9510);transform-origin:left center;">issues?</span>
<svg class="r" style="left:0.00px;top:0.00px" width="1006" height="673" viewBox="0 0 1006 673"><ellipse cx="376.1" cy="635.5" rx="157.6" ry="32.9" fill="none" stroke="#FF0000" stroke-width="6.5"/>
<path d="M565 491.5 L388 618.6" stroke="#FF0000" stroke-width="3.8" fill="none"/>
<path d="M380.4 624.1 L385.6 613.0 L393.1 622.0Z" fill="#FF0000"/></svg>
</body></html>
